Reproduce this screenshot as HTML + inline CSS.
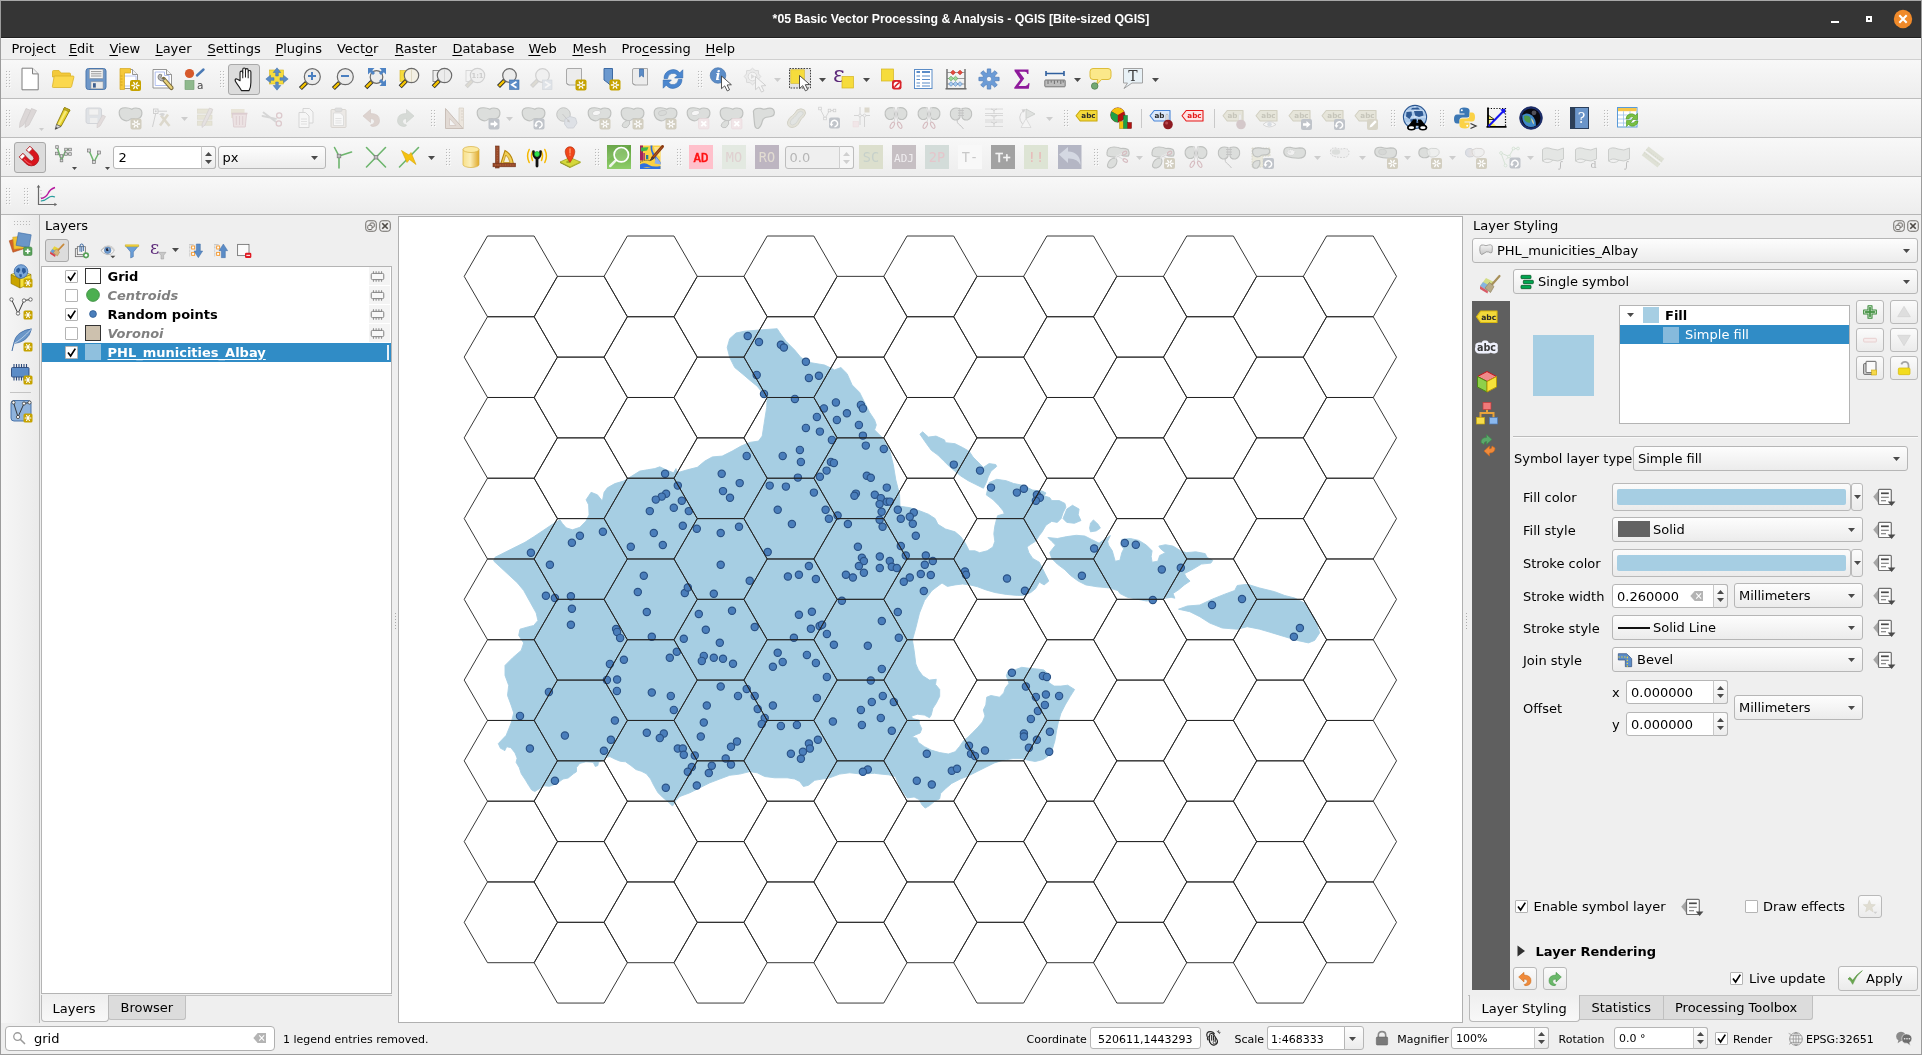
<!DOCTYPE html>
<html lang="en"><head><meta charset="utf-8"><title>*05 Basic Vector Processing &amp; Analysis - QGIS [Bite-sized QGIS]</title>
<style>
html,body{margin:0;padding:0;}
body{width:1922px;height:1055px;overflow:hidden;background:#efefef;font-family:"DejaVu Sans","Liberation Sans",sans-serif;font-size:13px;color:#000;position:relative;}
#app{will-change:transform;position:absolute;left:0;top:0;width:1922px;height:1055px;overflow:hidden;background:#efefef;}
#app div,#app span,#app svg.ic{position:absolute;box-sizing:border-box;}
.t{white-space:nowrap;line-height:16px;}
.ic svg{display:block;overflow:visible;}
.tb{background:linear-gradient(#f8f8f8,#ededed);border-bottom:1px solid #bdbdbd;}
.hv{width:5px;background-image:radial-gradient(circle,#b4b4b4 0.7px,transparent 0.9px);background-size:3px 3px;opacity:.9}
.combo{border:1px solid #b6b6b6;border-radius:3px;background:linear-gradient(#fdfdfd,#ececec);}
.spin{border:1px solid #b6b6b6;border-radius:3px;background:#fff;}
.btn{border:1px solid #b9b9b9;border-radius:3px;background:linear-gradient(#fbfbfb,#ebebeb);}
.pressed{border:1px solid #a9a9a9;border-radius:3px;background:#dcdcdc;}
.cb{width:13px;height:13px;border:1px solid #b4b4b4;background:#fff;border-radius:1px;}
u{text-decoration:underline;text-underline-offset:1.5px;text-decoration-thickness:1px;}
</style></head><body><div id="app">
<div style="left:0px;top:0px;width:1922px;height:1055px;border:1px solid #9c9c9c;border-top-color:#a8a8a8;z-index:50;pointer-events:none"></div>
<div style="left:1px;top:1px;width:1920px;height:37px;background:#353535;border-bottom:1px solid #202020"></div>
<span class="t" id="title" style="left:0;width:1922px;text-align:center;top:10.5px;color:#fff;font-weight:bold;font-family:'Liberation Sans',sans-serif;font-size:12.3px;letter-spacing:0px">*05 Basic Vector Processing &amp; Analysis - QGIS [Bite-sized QGIS]</span>
<div style="left:1831px;top:21px;width:8.2px;height:2.2px;background:#fff"></div>
<div style="left:1866px;top:16px;width:6.2px;height:6.2px;border:2.1px solid #fff"></div>
<svg class="ic" style="left:1893px;top:9px" width="20" height="20"><circle cx="10" cy="10" r="9.2" fill="#f08a2a"/><path d="M6.3 6.3L13.7 13.7M13.7 6.3L6.3 13.7" stroke="#fff" stroke-width="2.1" stroke-linecap="butt"/></svg>
<div style="left:1px;top:38px;width:1920px;height:22px;background:#efefef;border-bottom:1px solid #d0d0d0;border-top:1px solid #fafafa"></div>
<span class="t" style="left:11.4px;top:40.50px;font-size:13px;">Pro<u>j</u>ect</span>
<span class="t" style="left:68.9px;top:40.50px;font-size:13px;"><u>E</u>dit</span>
<span class="t" style="left:109.4px;top:40.50px;font-size:13px;"><u>V</u>iew</span>
<span class="t" style="left:155.4px;top:40.50px;font-size:13px;"><u>L</u>ayer</span>
<span class="t" style="left:207.4px;top:40.50px;font-size:13px;"><u>S</u>ettings</span>
<span class="t" style="left:275.4px;top:40.50px;font-size:13px;"><u>P</u>lugins</span>
<span class="t" style="left:336.9px;top:40.50px;font-size:13px;">Vect<u>o</u>r</span>
<span class="t" style="left:394.9px;top:40.50px;font-size:13px;"><u>R</u>aster</span>
<span class="t" style="left:452.4px;top:40.50px;font-size:13px;"><u>D</u>atabase</span>
<span class="t" style="left:528.4px;top:40.50px;font-size:13px;"><u>W</u>eb</span>
<span class="t" style="left:572.4px;top:40.50px;font-size:13px;"><u>M</u>esh</span>
<span class="t" style="left:621.4px;top:40.50px;font-size:13px;">Pro<u>c</u>essing</span>
<span class="t" style="left:705.4px;top:40.50px;font-size:13px;"><u>H</u>elp</span>
<div class="tb" style="left:1px;top:60px;width:1920px;height:39px;"></div>
<div class="tb" style="left:1px;top:99px;width:1920px;height:39px;"></div>
<div class="tb" style="left:1px;top:138px;width:1920px;height:39px;"></div>
<div class="tb" style="left:1px;top:177px;width:1920px;height:38px;border-bottom:1px solid #b6b6b6"></div>
<svg class="ic" style="left:6px;top:71px" width="5" height="17" shape-rendering="crispEdges"><path d="M1 1h1v1h-1zM4 1h1v1h-1zM1 4h1v1h-1zM4 4h1v1h-1zM1 7h1v1h-1zM4 7h1v1h-1zM1 10h1v1h-1zM4 10h1v1h-1zM1 13h1v1h-1zM4 13h1v1h-1zM1 16h1v1h-1zM4 16h1v1h-1z" fill="#fbfbfb"/><path d="M0 0h1v1h-1zM3 0h1v1h-1zM0 3h1v1h-1zM3 3h1v1h-1zM0 6h1v1h-1zM3 6h1v1h-1zM0 9h1v1h-1zM3 9h1v1h-1zM0 12h1v1h-1zM3 12h1v1h-1zM0 15h1v1h-1zM3 15h1v1h-1z" fill="#b9b9b9"/></svg>
<div class="ic" style="left:18.0px;top:66.5px;width:24px;height:24px"><svg width="24" height="24" viewBox="0 0 24 24"><path d="M4 1.2H14.5L20.2 6.9V22.8H4Z" fill="#fff" stroke="#7d7d7d" stroke-width="1"/><path d="M14.5 1.2V6.9H20.2" fill="#f2f2f2" stroke="#7d7d7d" stroke-width="1" stroke-linejoin="round"/></svg></div>
<div class="ic" style="left:50.5px;top:66.5px;width:24px;height:24px"><svg width="24" height="24" viewBox="0 0 24 24"><path d="M1.5 4.5Q1.5 3.5 2.5 3.5H8L10 6H18.5Q19.5 6 19.5 7V10H1.5Z" fill="#f3c93a" stroke="#d9b32a" stroke-width="0.8"/><path d="M3.2 9H22Q23.2 9 22.9 10.2L20.6 19.5Q20.3 20.5 19.3 20.5H2.2Q1.2 20.5 1.4 19.5Z" fill="#fbd84e" stroke="#d9b32a" stroke-width="0.8"/></svg></div>
<div class="ic" style="left:84.0px;top:66.5px;width:24px;height:24px"><svg width="24" height="24" viewBox="0 0 24 24"><rect x="2" y="1.5" width="20" height="21" rx="2.5" fill="#6e97c8" stroke="#4d78ad" stroke-width="1"/><rect x="5.5" y="2.3" width="13.5" height="9" fill="#f6f6f6" stroke="#9a9a9a" stroke-width="0.5"/><path d="M7 4.6H17.5M7 6.8H17.5M7 9H17.5" stroke="#7a7a7a" stroke-width="0.75"/><rect x="7" y="14.8" width="12" height="7" fill="#e9e9e9" stroke="#9a9a9a" stroke-width="0.5"/><rect x="9" y="16.2" width="2.8" height="4.4" fill="#3d5f8f"/></svg></div>
<div class="ic" style="left:116.5px;top:66.5px;width:24px;height:24px"><svg width="24" height="24" viewBox="0 0 24 24"><path d="M4 2.5H15.5L20.5 7.5V21.5H4Z" fill="#fff" stroke="#8a8a8a" stroke-width="0.9"/><path d="M15.5 2.5V7.5H20.5" fill="#f2f2f2" stroke="#8a8a8a" stroke-width="0.9"/><path d="M6 9H19V19H6Z" fill="none" stroke="#a8b8ee" stroke-width="0.8"/><path d="M3 1.5H13.5V6H7.5V22.5H3Z" fill="#f5c83a" stroke="#d4a81f" stroke-width="0.7"/><path d="M3.5 9H5.5M3.5 12H5.5M3.5 15H5.5M3.5 18H5.5" stroke="#c99a10" stroke-width="0.7"/><rect x="13" y="13" width="11" height="11" rx="2" fill="#c6a300"/><g stroke="#fff" stroke-width="1.3" stroke-linecap="round"><path d="M14.9 18.5L22.1 18.5"/><path d="M16.7 15.4L20.3 21.6"/><path d="M20.3 15.4L16.7 21.6"/></g><circle cx="18.5" cy="18.5" r="1.1" fill="#c6a300"/></svg></div>
<div class="ic" style="left:150.5px;top:66.5px;width:24px;height:24px"><svg width="24" height="24" viewBox="0 0 24 24"><path d="M2 2.5H15.5L20.5 7.5V21H2Z" fill="#fff" stroke="#8a8a8a" stroke-width="0.9"/><path d="M15.5 2.5V7.5H20.5" fill="#f2f2f2" stroke="#8a8a8a" stroke-width="0.9"/><path d="M4.2 5H13.5V8.5H18V18.5H4.2Z" fill="none" stroke="#a8b8ee" stroke-width="0.9"/><path d="M12.5 12L20.5 21" stroke="#7a6a3a" stroke-width="4.2" stroke-linecap="round"/><path d="M13.5 13L20.3 20.8" stroke="#e9d27a" stroke-width="2.4" stroke-linecap="round"/><path d="M8 7.5A3.8 3.8 0 1 0 14.2 11.8L12 12.5L10 10.5L10.8 7.8A3.8 3.8 0 0 0 8 7.5Z" fill="#b9b9b9" stroke="#707070" stroke-width="0.8"/></svg></div>
<div class="ic" style="left:183.0px;top:66.5px;width:24px;height:24px"><svg width="24" height="24" viewBox="0 0 24 24"><circle cx="6.5" cy="6.5" r="4.6" fill="#d6592b"/><path d="M14 8.5L20.5 2.5" stroke="#4b7ab5" stroke-width="2.4" stroke-linecap="round"/><rect x="2" y="13.5" width="9" height="9" fill="#8fb98d" stroke="#6f9a6d" stroke-width="0.6"/><text x="14" y="22" font-family="DejaVu Sans,Liberation Sans,sans-serif" font-size="10.5" fill="#4a4a4a">a</text></svg></div>
<svg class="ic" style="left:220px;top:71px" width="5" height="17" shape-rendering="crispEdges"><path d="M1 1h1v1h-1zM4 1h1v1h-1zM1 4h1v1h-1zM4 4h1v1h-1zM1 7h1v1h-1zM4 7h1v1h-1zM1 10h1v1h-1zM4 10h1v1h-1zM1 13h1v1h-1zM4 13h1v1h-1zM1 16h1v1h-1zM4 16h1v1h-1z" fill="#fbfbfb"/><path d="M0 0h1v1h-1zM3 0h1v1h-1zM0 3h1v1h-1zM3 3h1v1h-1zM0 6h1v1h-1zM3 6h1v1h-1zM0 9h1v1h-1zM3 9h1v1h-1zM0 12h1v1h-1zM3 12h1v1h-1zM0 15h1v1h-1zM3 15h1v1h-1z" fill="#b9b9b9"/></svg>
<div class="pressed" style="left:228px;top:64px;width:32px;height:31px;"></div>
<div class="ic" style="left:232.0px;top:66.5px;width:24px;height:24px"><svg width="24" height="24" viewBox="0 0 24 24"><g transform="translate(12 12.3) scale(1.13) translate(-11 -12)"><path d="M7.5 13.2V6.2Q7.5 4.8 8.7 4.8T9.9 6.2V3.4Q9.9 2 11.1 2T12.3 3.4V3.9Q12.3 2.6 13.5 2.6T14.7 3.9V5.4Q14.7 4.2 15.9 4.2T17.1 5.6V14.5Q17.1 19 15.5 22H8.7Q7.2 19 5 16.2T3.2 12.3Q3.8 11.2 5.2 12Z" fill="#fff" stroke="#1f1f1f" stroke-width="1" stroke-linejoin="round"/><path d="M9.9 6V11M12.3 3.9V10.5M14.7 5.4V11" stroke="#1f1f1f" stroke-width="0.9"/></g></svg></div>
<div class="ic" style="left:265.0px;top:66.5px;width:24px;height:24px"><svg width="24" height="24" viewBox="0 0 24 24"><rect x="4.5" y="3" width="14" height="14" fill="#f6dc3c" stroke="#d4b41f" stroke-width="0.6"/><g fill="#5b8cc7" stroke="#3f6ea8" stroke-width="0.5"><path d="M12 0.8L15.8 5.5H13.3V9H10.7V5.5H8.2Z"/><path d="M12 23.2L15.8 18.5H13.3V15H10.7V18.5H8.2Z"/><path d="M0.8 12L5.5 8.2V10.7H9V13.3H5.5V15.8Z"/><path d="M23.2 12L18.5 8.2V10.7H15V13.3H18.5V15.8Z"/></g></svg></div>
<div class="ic" style="left:298.0px;top:66.5px;width:24px;height:24px"><svg width="24" height="24" viewBox="0 0 24 24"><path d="M8.6 15.4L2.4 21.6" stroke="#2a2a2a" stroke-width="4.2" stroke-linecap="butt"/><path d="M8.0 16.0L2.9 21.1" stroke="#f5c400" stroke-width="2.4" stroke-linecap="butt"/><circle cx="14.3" cy="9.7" r="8" fill="#ececec" stroke="#6a6a6a" stroke-width="1.2"/><path d="M10 9H18M14 5V13" stroke="#4a7fc0" stroke-width="2"/></svg></div>
<div class="ic" style="left:331.0px;top:66.5px;width:24px;height:24px"><svg width="24" height="24" viewBox="0 0 24 24"><path d="M8.6 15.4L2.4 21.6" stroke="#2a2a2a" stroke-width="4.2" stroke-linecap="butt"/><path d="M8.0 16.0L2.9 21.1" stroke="#f5c400" stroke-width="2.4" stroke-linecap="butt"/><circle cx="14.3" cy="9.7" r="8" fill="#ececec" stroke="#6a6a6a" stroke-width="1.2"/><path d="M10 9H18" stroke="#4a7fc0" stroke-width="2"/></svg></div>
<div class="ic" style="left:364.0px;top:66.5px;width:24px;height:24px"><svg width="24" height="24" viewBox="0 0 24 24"><path d="M8.0 14.5L1.8 20.7" stroke="#2a2a2a" stroke-width="4.2" stroke-linecap="butt"/><path d="M7.4 15.1L2.3 20.2" stroke="#f5c400" stroke-width="2.4" stroke-linecap="butt"/><circle cx="12.5" cy="10" r="6.3" fill="#ececec" stroke="#6a6a6a" stroke-width="1.2"/><g fill="#4f84c4"><path d="M4 1H10.5L8.3 3.2L11 6L9 8L6.2 5.2L4 7.5Z"/><path d="M22 1H15.5L17.7 3.2L15 6L17 8L19.8 5.2L22 7.5Z"/><path d="M22 19H15.5L17.7 16.8L15 14L17 12L19.8 14.8L22 12.5Z"/></g></svg></div>
<div class="ic" style="left:397.0px;top:66.5px;width:24px;height:24px"><svg width="24" height="24" viewBox="0 0 24 24"><rect x="3" y="3.5" width="9" height="11" fill="#f6dc3c" stroke="#d4b41f" stroke-width="0.6"/><path d="M9.4 13.6L3.2 19.8" stroke="#2a2a2a" stroke-width="4.2" stroke-linecap="butt"/><path d="M8.8 14.2L3.7 19.3" stroke="#f5c400" stroke-width="2.4" stroke-linecap="butt"/><circle cx="14.5" cy="8.5" r="7.2" fill="#f3f0e4" stroke="#6a6a6a" stroke-width="1.2"/><path d="M14.5 2V15" stroke="#d8d2b8" stroke-width="0.8"/></svg></div>
<div class="ic" style="left:430.0px;top:66.5px;width:24px;height:24px"><svg width="24" height="24" viewBox="0 0 24 24"><rect x="3" y="3.5" width="9" height="11" fill="#ededed" stroke="#7a7a7a" stroke-width="0.8"/><path d="M9.4 13.6L3.2 19.8" stroke="#2a2a2a" stroke-width="4.2" stroke-linecap="butt"/><path d="M8.8 14.2L3.7 19.3" stroke="#f5c400" stroke-width="2.4" stroke-linecap="butt"/><circle cx="14.5" cy="8.5" r="7.2" fill="#ececec" stroke="#6a6a6a" stroke-width="1.2"/><path d="M14.5 2V15" stroke="#cfcfcf" stroke-width="0.8"/></svg></div>
<div class="ic" style="left:463.0px;top:66.5px;width:24px;height:24px"><svg width="24" height="24" viewBox="0 0 24 24"><rect x="3" y="3.5" width="9" height="11" fill="#f3f3f3" stroke="#d2d2d2" stroke-width="0.8"/><path d="M9.4 13.6L3.2 19.8" stroke="#d0d0d0" stroke-width="4.2" stroke-linecap="butt"/><path d="M8.8 14.2L3.7 19.3" stroke="#dcdad2" stroke-width="2.4" stroke-linecap="butt"/><circle cx="14.5" cy="8.5" r="7.2" fill="#f0f0f0" stroke="#cfcfcf" stroke-width="1.2"/><text x="14.5" y="11.3" text-anchor="middle" font-family="DejaVu Sans,Liberation Sans,sans-serif" font-weight="bold" font-size="6.8" fill="#cdcdcd">1:1</text></svg></div>
<div class="ic" style="left:496.0px;top:66.5px;width:24px;height:24px"><svg width="24" height="24" viewBox="0 0 24 24"><path d="M8.7 13.3L2.5 19.5" stroke="#2a2a2a" stroke-width="4.2" stroke-linecap="butt"/><path d="M8.1 13.9L3.0 19.0" stroke="#f5c400" stroke-width="2.4" stroke-linecap="butt"/><circle cx="13.5" cy="8.5" r="6.8" fill="#ececec" stroke="#6a6a6a" stroke-width="1.2"/><rect x="13.5" y="13" width="9.5" height="9.5" fill="#5b8cc7" stroke="#3f6ea8" stroke-width="0.6"/><path d="M20.5 14.8L15.8 17.8L20.5 20.8" fill="none" stroke="#fff" stroke-width="1.7"/></svg></div>
<div class="ic" style="left:529.0px;top:66.5px;width:24px;height:24px"><svg width="24" height="24" viewBox="0 0 24 24"><path d="M8.7 13.3L2.5 19.5" stroke="#d0d0d0" stroke-width="4.2" stroke-linecap="butt"/><path d="M8.1 13.9L3.0 19.0" stroke="#dcdad2" stroke-width="2.4" stroke-linecap="butt"/><circle cx="13.5" cy="8.5" r="6.8" fill="#f0f0f0" stroke="#cfcfcf" stroke-width="1.2"/><rect x="13.5" y="13" width="9.5" height="9.5" fill="#dfe3e8" stroke="#d2d6db" stroke-width="0.6"/><path d="M16 14.8L20.7 17.8L16 20.8" fill="none" stroke="#f6f6f6" stroke-width="1.7"/></svg></div>
<div class="ic" style="left:563.0px;top:66.5px;width:24px;height:24px"><svg width="24" height="24" viewBox="0 0 24 24"><path d="M3.5 3Q3.5 1.5 5 1.5H18.5V18H6.5Q3.5 18 3.5 15.5Z" fill="#ececec" stroke="#a0a0a0" stroke-width="0.9"/><path d="M3.5 15.5Q3.7 17.8 6.5 18" fill="none" stroke="#a0a0a0" stroke-width="0.9"/><rect x="12.5" y="12.5" width="11" height="11" rx="2" fill="#c6a300"/><g stroke="#fff" stroke-width="1.3" stroke-linecap="round"><path d="M14.4 18.0L21.6 18.0"/><path d="M16.2 14.9L19.8 21.1"/><path d="M19.8 14.9L16.2 21.1"/></g><circle cx="18.0" cy="18.0" r="1.1" fill="#c6a300"/></svg></div>
<div class="ic" style="left:596.5px;top:66.5px;width:24px;height:24px"><svg width="24" height="24" viewBox="0 0 24 24"><path d="M7 1.5H15.5V20.5L11 16L7 13Z" fill="#6b99cf" stroke="#3d6aa3" stroke-width="1"/><rect x="12.5" y="12.5" width="11" height="11" rx="2" fill="#c6a300"/><g stroke="#fff" stroke-width="1.3" stroke-linecap="round"><path d="M14.4 18.0L21.6 18.0"/><path d="M16.2 14.9L19.8 21.1"/><path d="M19.8 14.9L16.2 21.1"/></g><circle cx="18.0" cy="18.0" r="1.1" fill="#c6a300"/></svg></div>
<div class="ic" style="left:629.0px;top:66.5px;width:24px;height:24px"><svg width="24" height="24" viewBox="0 0 24 24"><path d="M3.5 3Q3.5 1.5 5 1.5H18.5V18H6.5Q3.5 18 3.5 15.5Z" fill="#ececec" stroke="#a0a0a0" stroke-width="0.9"/><path d="M3.5 15.5Q3.7 17.8 6.5 18" fill="none" stroke="#a0a0a0" stroke-width="0.9"/><path d="M10.5 2H14.5V10L12.5 8.3L10.5 10Z" fill="#5b8cc7" stroke="#3d6aa3" stroke-width="0.7"/></svg></div>
<div class="ic" style="left:661.0px;top:66.5px;width:24px;height:24px"><svg width="24" height="24" viewBox="0 0 24 24"><path d="M3 11.5A9 9 0 0 1 18.8 5.8L21.8 2.8V11H13.6L16.4 8.2A5.6 5.6 0 0 0 6.6 11.5Z" fill="#4a86cf" stroke="#2f68ad" stroke-width="0.6"/><path d="M21 12.5A9 9 0 0 1 5.2 18.2L2.2 21.2V13H10.4L7.6 15.8A5.6 5.6 0 0 0 17.4 12.5Z" fill="#4a86cf" stroke="#2f68ad" stroke-width="0.6"/></svg></div>
<svg class="ic" style="left:698px;top:71px" width="5" height="17" shape-rendering="crispEdges"><path d="M1 1h1v1h-1zM4 1h1v1h-1zM1 4h1v1h-1zM4 4h1v1h-1zM1 7h1v1h-1zM4 7h1v1h-1zM1 10h1v1h-1zM4 10h1v1h-1zM1 13h1v1h-1zM4 13h1v1h-1zM1 16h1v1h-1zM4 16h1v1h-1z" fill="#fbfbfb"/><path d="M0 0h1v1h-1zM3 0h1v1h-1zM0 3h1v1h-1zM3 3h1v1h-1zM0 6h1v1h-1zM3 6h1v1h-1zM0 9h1v1h-1zM3 9h1v1h-1zM0 12h1v1h-1zM3 12h1v1h-1zM0 15h1v1h-1zM3 15h1v1h-1z" fill="#b9b9b9"/></svg>
<div class="ic" style="left:709.0px;top:66.5px;width:24px;height:24px"><svg width="24" height="24" viewBox="0 0 24 24"><circle cx="9" cy="8.5" r="7.8" fill="#5b8cc7" stroke="#3f6ea8" stroke-width="0.6"/><text x="9" y="13.2" text-anchor="middle" font-family="DejaVu Serif,Liberation Serif,serif" font-style="italic" font-weight="bold" font-size="13" fill="#fff">i</text><path transform="translate(12.5 9) scale(1.15)" d="M0 0L0 11L2.8 8.6L5 13L7 12L4.9 7.8L8.6 7.6Z" fill="#fff" stroke="#3c3c3c" stroke-width="0.75" stroke-linejoin="round"/></svg></div>
<div class="ic" style="left:743.0px;top:66.5px;width:24px;height:24px"><svg width="24" height="24" viewBox="0 0 24 24"><g fill="#ebebeb" stroke="#d4d4d4" stroke-width="0.8"><path d="M17.8 9.5L15.6 12.0L15.4 15.4L12.0 15.6L9.5 17.8L7.0 15.6L3.6 15.4L3.4 12.0L1.2 9.5L3.4 7.0L3.6 3.6L7.0 3.4L9.5 1.2L12.0 3.4L15.4 3.6L15.6 7.0Z"/><circle cx="9.5" cy="9.5" r="4.3" fill="#f4f4f4"/><path d="M8 7L12 9.5L8 12Z" fill="#dcdcdc" stroke="none"/></g><path transform="translate(12.5 9.5) scale(1.2)" d="M0 0L0 11L2.8 8.6L5 13L7 12L4.9 7.8L8.6 7.6Z" fill="#f4f4f4" stroke="#cccccc" stroke-width="0.75" stroke-linejoin="round"/></svg></div>
<div class="ic" style="left:788.0px;top:66.5px;width:24px;height:24px"><svg width="24" height="24" viewBox="0 0 24 24"><rect x="1.5" y="1.5" width="21" height="19.5" fill="#e4e4e4" stroke="#2a2a2a" stroke-width="0.9" stroke-dasharray="1.6 1.2"/><rect x="2.8" y="2.8" width="13.5" height="13.5" fill="#f6dc3c" stroke="#d4b41f" stroke-width="0.6"/><path transform="translate(11.5 8.5) scale(1.18)" d="M0 0L0 11L2.8 8.6L5 13L7 12L4.9 7.8L8.6 7.6Z" fill="#fff" stroke="#3c3c3c" stroke-width="0.75" stroke-linejoin="round"/></svg></div>
<div class="ic" style="left:833.0px;top:66.5px;width:24px;height:24px"><svg width="24" height="24" viewBox="0 0 24 24"><text x="0" y="14.5" font-family="DejaVu Serif,Liberation Serif,serif" font-size="23" fill="#5d2a7a">ε</text><rect x="9" y="9.5" width="11.5" height="11.5" fill="#f6dc3c" stroke="#d4b41f" stroke-width="0.7"/></svg></div>
<div class="ic" style="left:878.5px;top:66.5px;width:24px;height:24px"><svg width="24" height="24" viewBox="0 0 24 24"><rect x="2.5" y="2" width="12" height="12" fill="#f6dc3c" stroke="#d4b41f" stroke-width="0.7"/><rect x="13" y="13" width="9.5" height="9.5" rx="2.2" fill="#d8232a"/><circle cx="17.75" cy="17.75" r="3.1" fill="#fff"/><path d="M15.6 19.9L19.9 15.6" stroke="#d8232a" stroke-width="1.5"/></svg></div>
<div class="ic" style="left:911.0px;top:66.5px;width:24px;height:24px"><svg width="24" height="24" viewBox="0 0 24 24"><rect x="3.5" y="2.5" width="17.5" height="19" fill="#fff" stroke="#5b8cc7" stroke-width="1"/><path d="M5.5 5H9M11 5H19" stroke="#5b8cc7" stroke-width="1.8"/><path d="M5.5 9H9M11 9H19M5.5 12.5H9M11 12.5H19M5.5 16H9M11 16H19M5.5 19H9M11 19H19" stroke="#5b8cc7" stroke-width="1.1"/></svg></div>
<div class="ic" style="left:944.0px;top:66.5px;width:24px;height:24px"><svg width="24" height="24" viewBox="0 0 24 24"><path d="M3 2V21.5M21 2V21.5" stroke="#555" stroke-width="1.2"/><path d="M1.5 21.8H22.5" stroke="#6a6a6a" stroke-width="1.5"/><path d="M3 5.5H21M3 11.5H21M3 17H21" stroke="#777" stroke-width="0.7"/><path d="M6.6 5.5L9 3.2L11.4 5.5L9 7.8Z" fill="#e64a3c" stroke="#b3261c" stroke-width="0.6"/><path d="M13.6 5.5L16 3.2L18.4 5.5L16 7.8Z" fill="#e64a3c" stroke="#b3261c" stroke-width="0.6"/><path d="M4.6 11.5L7 9.2L9.4 11.5L7 13.8Z" fill="#9fd89a" stroke="#4f9a4a" stroke-width="0.6"/><path d="M9.1 11.5L11.5 9.2L13.9 11.5L11.5 13.8Z" fill="#9fd89a" stroke="#4f9a4a" stroke-width="0.6"/><path d="M4.6 17L7 14.7L9.4 17L7 19.3Z" fill="#a8cdf0" stroke="#4b7ab5" stroke-width="0.6"/><path d="M9.1 17L11.5 14.7L13.9 17L11.5 19.3Z" fill="#a8cdf0" stroke="#4b7ab5" stroke-width="0.6"/><path d="M13.6 17L16 14.7L18.4 17L16 19.3Z" fill="#a8cdf0" stroke="#4b7ab5" stroke-width="0.6"/></svg></div>
<div class="ic" style="left:977.0px;top:66.5px;width:24px;height:24px"><svg width="24" height="24" viewBox="0 0 24 24"><path d="M22.1 10.3L22.1 13.7L17.9 13.8L17.5 14.9L20.3 17.9L17.9 20.3L14.9 17.5L13.8 17.9L13.7 22.1L10.3 22.1L10.2 17.9L9.1 17.5L6.1 20.3L3.7 17.9L6.5 14.9L6.1 13.8L1.9 13.7L1.9 10.3L6.1 10.2L6.5 9.1L3.7 6.1L6.1 3.7L9.1 6.5L10.2 6.1L10.3 1.9L13.7 1.9L13.8 6.1L14.9 6.5L17.9 3.7L20.3 6.1L17.5 9.1L17.9 10.2Z" fill="#6b9bd6" stroke="#4a7ab8" stroke-width="0.7" stroke-linejoin="round"/><circle cx="12" cy="12" r="2.6" fill="#f4f4f4" stroke="#4a7ab8" stroke-width="0.6"/></svg></div>
<div class="ic" style="left:1009.5px;top:66.5px;width:24px;height:24px"><svg width="24" height="24" viewBox="0 0 24 24"><path d="M4.5 2.5H18.5V7H17.3Q17 4.8 15 4.8H9.2L14.2 11.6L8.6 19H15.5Q17.8 19 18.3 16.2H19.6L18.8 21.8H4.3V20.5L10.3 12.4L4.5 4Z" fill="#8e1a9b"/></svg></div>
<div class="ic" style="left:1043.0px;top:66.5px;width:24px;height:24px"><svg width="24" height="24" viewBox="0 0 24 24"><path d="M3 6.5H21M3 4V9M21 4V9" stroke="#2f5f9e" stroke-width="1.6" fill="none"/><rect x="1.8" y="13" width="20.4" height="6.8" rx="0.8" fill="#bdbdbd" stroke="#6e6e6e" stroke-width="0.9"/><path d="M5 13.5V17M8.2 13.5V15.6M11.4 13.5V17M14.6 13.5V15.6M17.8 13.5V17M20.2 13.5V15.6" stroke="#5a5a5a" stroke-width="0.8"/></svg></div>
<div class="ic" style="left:1088.0px;top:66.5px;width:24px;height:24px"><svg width="24" height="24" viewBox="0 0 24 24"><path d="M5 1.5H20Q23 1.5 23 4.5V9.5Q23 12.5 20 12.5H13.5L8.5 18L9.8 12.5H5Q2 12.5 2 9.5V4.5Q2 1.5 5 1.5Z" fill="#fbe88a" stroke="#d9b72a" stroke-width="0.9"/><circle cx="6.7" cy="19" r="3.3" fill="#73a873" stroke="#4a7a4a" stroke-width="0.7"/></svg></div>
<div class="ic" style="left:1121.0px;top:66.5px;width:24px;height:24px"><svg width="24" height="24" viewBox="0 0 24 24"><path d="M2.5 1.5H21.5V16H11L3 21.5L6.5 16H2.5Z" fill="#e8f1f6" stroke="#9a9a9a" stroke-width="0.9"/><text x="12" y="13.5" text-anchor="middle" font-family="DejaVu Serif,Liberation Serif,serif" font-size="14" fill="#3c3c3c">T</text></svg></div>
<svg class="ic" style="left:773.5px;top:77.5px" width="7" height="4"><path d="M0 0H7L3.5 4Z" fill="#cdcdcd"/></svg>
<svg class="ic" style="left:818.5px;top:77.5px" width="7" height="4"><path d="M0 0H7L3.5 4Z" fill="#4a4a4a"/></svg>
<svg class="ic" style="left:863.0px;top:77.5px" width="7" height="4"><path d="M0 0H7L3.5 4Z" fill="#4a4a4a"/></svg>
<svg class="ic" style="left:1073.5px;top:77.5px" width="7" height="4"><path d="M0 0H7L3.5 4Z" fill="#4a4a4a"/></svg>
<svg class="ic" style="left:1151.5px;top:77.5px" width="7" height="4"><path d="M0 0H7L3.5 4Z" fill="#4a4a4a"/></svg>
<svg class="ic" style="left:6px;top:110px" width="5" height="17" shape-rendering="crispEdges"><path d="M1 1h1v1h-1zM4 1h1v1h-1zM1 4h1v1h-1zM4 4h1v1h-1zM1 7h1v1h-1zM4 7h1v1h-1zM1 10h1v1h-1zM4 10h1v1h-1zM1 13h1v1h-1zM4 13h1v1h-1zM1 16h1v1h-1zM4 16h1v1h-1z" fill="#fbfbfb"/><path d="M0 0h1v1h-1zM3 0h1v1h-1zM0 3h1v1h-1zM3 3h1v1h-1zM0 6h1v1h-1zM3 6h1v1h-1zM0 9h1v1h-1zM3 9h1v1h-1zM0 12h1v1h-1zM3 12h1v1h-1zM0 15h1v1h-1zM3 15h1v1h-1z" fill="#b9b9b9"/></svg>
<div class="ic" style="left:17.0px;top:105.5px;width:24px;height:24px"><svg width="24" height="24" viewBox="0 0 24 24"><path d="M9 2.5L14 4.5L6.5 19L2.5 21.5L3 16.5Z" fill="#dcd7d7" stroke="#ccc7c7" stroke-width="0.7"/><path d="M14.5 2.5L19.5 4.5L12.0 19L8.0 21.5L8.5 16.5Z" fill="#dcd7d7" stroke="#ccc7c7" stroke-width="0.7"/></svg></div>
<div class="ic" style="left:50.0px;top:105.5px;width:24px;height:24px"><svg width="24" height="24" viewBox="0 0 24 24"><path d="M14.5 1.5L20 4L11 20.5L6.5 18.5Z" fill="#e8d22a" stroke="#8a7a10" stroke-width="0.9"/><path d="M16.3 2.3L18.2 3.2L9.2 19.7L7.4 18.9Z" fill="#f6ea7a"/><path d="M6.5 18.5L11 20.5L5.2 23.3Z" fill="#d9d9d9" stroke="#5a5a5a" stroke-width="0.8"/><path d="M6.3 21.2L7.8 21.9L5.2 23.3Z" fill="#222"/><path d="M14.5 1.5L20 4L19 5.8L13.5 3.3Z" fill="#c7b11a" stroke="#8a7a10" stroke-width="0.6"/></svg></div>
<div class="ic" style="left:84.0px;top:105.5px;width:24px;height:24px"><svg width="24" height="24" viewBox="0 0 24 24"><rect x="2" y="2" width="15.5" height="15.5" rx="2" fill="#dfe2e6" stroke="#d0d3d7" stroke-width="0.9"/><rect x="5" y="3" width="9.5" height="6" fill="#f1f1f1" stroke="#dadada" stroke-width="0.5"/><rect x="6" y="12" width="7.5" height="5" fill="#eeeeee"/><path d="M18.5 9L21.5 10.5L16 20L13 21.8L13.3 18.2Z" fill="#e2dcdc" stroke="#d4cfcf" stroke-width="0.7"/></svg></div>
<div class="ic" style="left:117.5px;top:105.5px;width:24px;height:24px"><svg width="24" height="24" viewBox="0 0 24 24"><path transform="translate(12 7.5) scale(1.2 1.15) translate(-12 -7.5)" d="M3 6.5Q3 2.5 8 2.5Q11.5 2.5 13.5 3.8Q16 2 19.5 3.2Q22.5 4.5 21.8 8.5Q21 12.5 16 12Q13 11.5 11.5 13Q9 15 5.5 12.5Q3 10.5 3 6.5Z" fill="#dcdedc" stroke="#bfc1bf" stroke-width="1"/><rect x="12.5" y="12.5" width="11" height="11" rx="2" fill="#d2cec0"/><g stroke="#fff" stroke-width="1.3" stroke-linecap="round"><path d="M14.4 18.0L21.6 18.0"/><path d="M16.2 14.9L19.8 21.1"/><path d="M19.8 14.9L16.2 21.1"/></g><circle cx="18.0" cy="18.0" r="1.1" fill="#d2cec0"/></svg></div>
<div class="ic" style="left:151.0px;top:105.5px;width:24px;height:24px"><svg width="24" height="24" viewBox="0 0 24 24"><rect x="2.5" y="3" width="4.5" height="4.5" fill="#f4f4f4" stroke="#c9c9c9" stroke-width="0.8"/><circle cx="4.75" cy="5.25" r="1" fill="#cfcfcf"/><path d="M7 5.2H16M4.7 7.5L1.5 21" stroke="#cccccc" stroke-width="0.9" fill="none"/><path d="M9 19.5L17 8.5" stroke="#dcd8cc" stroke-width="2.6"/><path d="M10 9.5L18.5 20" stroke="#dcd8cc" stroke-width="2.6"/><path d="M8 8.5Q11 6 14 8L12 10.5Z" fill="#d6d6d6"/></svg></div>
<div class="ic" style="left:195.0px;top:105.5px;width:24px;height:24px"><svg width="24" height="24" viewBox="0 0 24 24"><rect x="2.5" y="3" width="14.5" height="4.2" fill="#e6e4d6" stroke="#dad8ca" stroke-width="0.6"/><rect x="2.5" y="9" width="14.5" height="4.2" fill="#e6e4d6" stroke="#dad8ca" stroke-width="0.6"/><rect x="2.5" y="15" width="14.5" height="4.2" fill="#e6e4d6" stroke="#dad8ca" stroke-width="0.6"/><path d="M14.5 2L17.8 3.5L10 19L7 21.5L7.2 17.7Z" fill="#e5e1e1" stroke="#d2cece" stroke-width="0.7"/></svg></div>
<div class="ic" style="left:228.0px;top:105.5px;width:24px;height:24px"><svg width="24" height="24" viewBox="0 0 24 24"><rect x="3" y="3" width="13.5" height="9" fill="#e8e4d8"/><path d="M4.5 8H18.5L17.3 21H5.7Z" fill="#ece2e3" stroke="#dccdd0" stroke-width="0.9"/><path d="M3.5 7.5H19.5" stroke="#dccdd0" stroke-width="1.6"/><path d="M8.3 10V19M11.5 10V19M14.7 10V19" stroke="#dccdd0" stroke-width="0.9"/></svg></div>
<div class="ic" style="left:261.0px;top:105.5px;width:24px;height:24px"><svg width="24" height="24" viewBox="0 0 24 24"><path d="M1.5 10L15 12.8M2.5 6.5L14.5 15.5" stroke="#d6d6d6" stroke-width="1.8" stroke-linecap="round"/><circle cx="18.2" cy="9.5" r="2.6" fill="none" stroke="#dcc9cc" stroke-width="1.3"/><circle cx="17.8" cy="17.5" r="2.6" fill="none" stroke="#dcc9cc" stroke-width="1.3"/></svg></div>
<div class="ic" style="left:294.0px;top:105.5px;width:24px;height:24px"><svg width="24" height="24" viewBox="0 0 24 24"><path d="M9 2.5H15.5L19 6V17H9Z" fill="#f6f6f6" stroke="#d3d3d3" stroke-width="0.9"/><path d="M5 6.5H11.5L15 10V21.5H5Z" fill="#f6f6f6" stroke="#d3d3d3" stroke-width="0.9"/><path d="M7 13H13M7 15.5H13M7 18H13" stroke="#dadada" stroke-width="0.8"/></svg></div>
<div class="ic" style="left:327.0px;top:105.5px;width:24px;height:24px"><svg width="24" height="24" viewBox="0 0 24 24"><rect x="4" y="3.5" width="15" height="18" rx="1" fill="#ece9e6" stroke="#d6d2ce" stroke-width="0.9"/><rect x="8" y="2" width="7" height="3.5" rx="1" fill="#dedede" stroke="#d0d0d0" stroke-width="0.6"/><path d="M6.5 7H13.5L16.5 10V19.5H6.5Z" fill="#f8f8f8" stroke="#d6d6d6" stroke-width="0.7"/><path d="M8.3 12.5H14.5M8.3 14.8H14.5M8.3 17H14.5" stroke="#dcdcdc" stroke-width="0.8"/></svg></div>
<div class="ic" style="left:360.0px;top:105.5px;width:24px;height:24px"><svg width="24" height="24" viewBox="0 0 24 24"><path d="M3 10L10.5 3.5V7.5Q19.5 7.5 19.5 14.5Q19.5 20 13 20.5Q11 20.5 10.5 19Q14.5 18.5 14.5 15.5Q14.5 12.5 10.5 12.5V16.5Z" fill="#ddd3cf" stroke="#d2c6c2" stroke-width="0.6"/></svg></div>
<div class="ic" style="left:393.0px;top:105.5px;width:24px;height:24px"><svg width="24" height="24" viewBox="0 0 24 24"><path d="M21 10L13.5 3.5V7.5Q4.5 7.5 4.5 14.5Q4.5 20 11 20.5Q13 20.5 13.5 19Q9.5 18.5 9.5 15.5Q9.5 12.5 13.5 12.5V16.5Z" fill="#d6dad6" stroke="#caceca" stroke-width="0.6"/></svg></div>
<svg class="ic" style="left:38.5px;top:127.5px" width="5" height="3"><path d="M0 0H5L2.5 3Z" fill="#cdcdcd"/></svg>
<svg class="ic" style="left:180.5px;top:116.5px" width="7" height="4"><path d="M0 0H7L3.5 4Z" fill="#cdcdcd"/></svg>
<svg class="ic" style="left:431px;top:110px" width="5" height="17" shape-rendering="crispEdges"><path d="M1 1h1v1h-1zM4 1h1v1h-1zM1 4h1v1h-1zM4 4h1v1h-1zM1 7h1v1h-1zM4 7h1v1h-1zM1 10h1v1h-1zM4 10h1v1h-1zM1 13h1v1h-1zM4 13h1v1h-1zM1 16h1v1h-1zM4 16h1v1h-1z" fill="#fbfbfb"/><path d="M0 0h1v1h-1zM3 0h1v1h-1zM0 3h1v1h-1zM3 3h1v1h-1zM0 6h1v1h-1zM3 6h1v1h-1zM0 9h1v1h-1zM3 9h1v1h-1zM0 12h1v1h-1zM3 12h1v1h-1zM0 15h1v1h-1zM3 15h1v1h-1z" fill="#b9b9b9"/></svg>
<div class="ic" style="left:442.0px;top:105.5px;width:24px;height:24px"><svg width="24" height="24" viewBox="0 0 24 24"><path d="M17 2H21.5V22.5H17Z" fill="#ece6de" stroke="#d6cec4" stroke-width="0.7"/><path d="M3.5 2.5L21 22.5H3.5Z" fill="#e2dad4" stroke="#c9bfb8" stroke-width="1"/><path d="M7.5 12.5L14 19.5H7.5Z" fill="#f4f4f4" stroke="#d3c8c2" stroke-width="0.8"/><path d="M19 5H21M19 8H21M19 11H21M19 14H21" stroke="#d0c8be" stroke-width="0.6"/></svg></div>
<div class="ic" style="left:476.0px;top:105.5px;width:24px;height:24px"><svg width="24" height="24" viewBox="0 0 24 24"><path transform="translate(12 7.5) scale(1.2 1.15) translate(-12 -7.5)" d="M3 6.5Q3 2.5 8 2.5Q11.5 2.5 13.5 3.8Q16 2 19.5 3.2Q22.5 4.5 21.8 8.5Q21 12.5 16 12Q13 11.5 11.5 13Q9 15 5.5 12.5Q3 10.5 3 6.5Z" fill="#dcdedc" stroke="#bfc1bf" stroke-width="1"/><rect x="12.5" y="12.5" width="11" height="11" rx="2" fill="#c0c4ca"/><path d="M14.5 16.7H18.0V14.5L22.0 18.0L18.0 21.5V19.3H14.5Z" fill="#fff"/></svg></div>
<div class="ic" style="left:521.0px;top:105.5px;width:24px;height:24px"><svg width="24" height="24" viewBox="0 0 24 24"><path transform="translate(12 7.5) scale(1.2 1.15) translate(-12 -7.5)" d="M3 6.5Q3 2.5 8 2.5Q11.5 2.5 13.5 3.8Q16 2 19.5 3.2Q22.5 4.5 21.8 8.5Q21 12.5 16 12Q13 11.5 11.5 13Q9 15 5.5 12.5Q3 10.5 3 6.5Z" fill="#dcdedc" stroke="#bfc1bf" stroke-width="1"/><rect x="12.5" y="12.5" width="11" height="11" rx="2" fill="#c0c4ca"/><path d="M15.0 19.8A3.2 3.2 0 1 1 18.0 21.7" fill="none" stroke="#fff" stroke-width="1.5"/><path d="M13.0 18.8L15.0 21.5L17.0 18.8Z" fill="#fff"/></svg></div>
<div class="ic" style="left:554.0px;top:105.5px;width:24px;height:24px"><svg width="24" height="24" viewBox="0 0 24 24"><circle cx="9.5" cy="8.5" r="6.8" fill="#dcdedc" stroke="#bfc1bf" stroke-width="0.9"/><path d="M11 13L16 10.5L21.5 12L23 17L19.5 22H13.5L10.5 18Z" fill="#dee1e6" stroke="#cdd0d6" stroke-width="0.9"/><path d="M8.5 8L15 15.5" stroke="#c6c6c6" stroke-width="0.9"/><path d="M15.8 16.4L12.8 15.3L15 13.2Z" fill="#c6c6c6"/></svg></div>
<div class="ic" style="left:587.0px;top:105.5px;width:24px;height:24px"><svg width="24" height="24" viewBox="0 0 24 24"><path transform="translate(12 7.5) scale(1.2 1.15) translate(-12 -7.5)" d="M3 6.5Q3 2.5 8 2.5Q11.5 2.5 13.5 3.8Q16 2 19.5 3.2Q22.5 4.5 21.8 8.5Q21 12.5 16 12Q13 11.5 11.5 13Q9 15 5.5 12.5Q3 10.5 3 6.5Z" fill="#dcdedc" stroke="#bfc1bf" stroke-width="1"/><ellipse cx="9.5" cy="7" rx="4.2" ry="2.6" fill="#f6f6f6" stroke="#cfd1cf" stroke-width="0.8" transform="rotate(-12 9.5 7)"/><rect x="12.5" y="12.5" width="11" height="11" rx="2" fill="#d2cec0"/><g stroke="#fff" stroke-width="1.3" stroke-linecap="round"><path d="M14.4 18.0L21.6 18.0"/><path d="M16.2 14.9L19.8 21.1"/><path d="M19.8 14.9L16.2 21.1"/></g><circle cx="18.0" cy="18.0" r="1.1" fill="#d2cec0"/></svg></div>
<div class="ic" style="left:620.0px;top:105.5px;width:24px;height:24px"><svg width="24" height="24" viewBox="0 0 24 24"><path transform="translate(12 7.5) scale(1.2 1.15) translate(-12 -7.5)" d="M3 6.5Q3 2.5 8 2.5Q11.5 2.5 13.5 3.8Q16 2 19.5 3.2Q22.5 4.5 21.8 8.5Q21 12.5 16 12Q13 11.5 11.5 13Q9 15 5.5 12.5Q3 10.5 3 6.5Z" fill="#dcdedc" stroke="#bfc1bf" stroke-width="1"/><path d="M2 20Q3.5 14 9.5 14.5Q11 18 7 21.5Q3.5 22.5 2 20Z" fill="#dcdedc" stroke="#bfc1bf" stroke-width="0.9"/><rect x="12.5" y="12.5" width="11" height="11" rx="2" fill="#d2cec0"/><g stroke="#fff" stroke-width="1.3" stroke-linecap="round"><path d="M14.4 18.0L21.6 18.0"/><path d="M16.2 14.9L19.8 21.1"/><path d="M19.8 14.9L16.2 21.1"/></g><circle cx="18.0" cy="18.0" r="1.1" fill="#d2cec0"/></svg></div>
<div class="ic" style="left:653.0px;top:105.5px;width:24px;height:24px"><svg width="24" height="24" viewBox="0 0 24 24"><path transform="translate(12 7.5) scale(1.2 1.15) translate(-12 -7.5)" d="M3 6.5Q3 2.5 8 2.5Q11.5 2.5 13.5 3.8Q16 2 19.5 3.2Q22.5 4.5 21.8 8.5Q21 12.5 16 12Q13 11.5 11.5 13Q9 15 5.5 12.5Q3 10.5 3 6.5Z" fill="#dcdedc" stroke="#bfc1bf" stroke-width="1"/><ellipse cx="9.5" cy="7" rx="4.2" ry="2.6" fill="#d8dad8" stroke="#c8cac8" stroke-width="0.8" transform="rotate(-12 9.5 7)"/><rect x="12.5" y="12.5" width="11" height="11" rx="2" fill="#d2cec0"/><g stroke="#fff" stroke-width="1.3" stroke-linecap="round"><path d="M14.4 18.0L21.6 18.0"/><path d="M16.2 14.9L19.8 21.1"/><path d="M19.8 14.9L16.2 21.1"/></g><circle cx="18.0" cy="18.0" r="1.1" fill="#d2cec0"/></svg></div>
<div class="ic" style="left:686.0px;top:105.5px;width:24px;height:24px"><svg width="24" height="24" viewBox="0 0 24 24"><path transform="translate(12 7.5) scale(1.2 1.15) translate(-12 -7.5)" d="M3 6.5Q3 2.5 8 2.5Q11.5 2.5 13.5 3.8Q16 2 19.5 3.2Q22.5 4.5 21.8 8.5Q21 12.5 16 12Q13 11.5 11.5 13Q9 15 5.5 12.5Q3 10.5 3 6.5Z" fill="#dcdedc" stroke="#bfc1bf" stroke-width="1"/><ellipse cx="9.5" cy="7" rx="4.2" ry="2.6" fill="#f6f6f6" stroke="#cfd1cf" stroke-width="0.8" transform="rotate(-12 9.5 7)"/><rect x="12.5" y="12.5" width="10.5" height="10.5" rx="1.5" fill="#f1e6e8" stroke="#ead9dc" stroke-width="0.6"/><path d="M15.3 15.3L20.2 20.2M20.2 15.3L15.3 20.2" stroke="#fff" stroke-width="1.9"/></svg></div>
<div class="ic" style="left:719.0px;top:105.5px;width:24px;height:24px"><svg width="24" height="24" viewBox="0 0 24 24"><path transform="translate(12 7.5) scale(1.2 1.15) translate(-12 -7.5)" d="M3 6.5Q3 2.5 8 2.5Q11.5 2.5 13.5 3.8Q16 2 19.5 3.2Q22.5 4.5 21.8 8.5Q21 12.5 16 12Q13 11.5 11.5 13Q9 15 5.5 12.5Q3 10.5 3 6.5Z" fill="#dcdedc" stroke="#bfc1bf" stroke-width="1"/><path d="M2 20Q3.5 14 9.5 14.5Q11 18 7 21.5Q3.5 22.5 2 20Z" fill="#dcdedc" stroke="#bfc1bf" stroke-width="0.9"/><rect x="12.5" y="12.5" width="10.5" height="10.5" rx="1.5" fill="#f1e6e8" stroke="#ead9dc" stroke-width="0.6"/><path d="M15.3 15.3L20.2 20.2M20.2 15.3L15.3 20.2" stroke="#fff" stroke-width="1.9"/></svg></div>
<div class="ic" style="left:751.0px;top:105.5px;width:24px;height:24px"><svg width="24" height="24" viewBox="0 0 24 24"><path transform="translate(12 7.5) scale(1.2 1.15) translate(-12 -7.5)" d="M4 5.5Q5 2.5 10 3Q13 4.5 16 3Q21 2 21.5 6.5Q21.5 10.5 16.5 10.5Q12.5 10.5 11.5 14Q10.5 19 8 20.5Q5.5 21 5 17Q4.5 12 4 5.5Z" fill="#dcdedc" stroke="#bfc1bf" stroke-width="1"/></svg></div>
<div class="ic" style="left:784.0px;top:105.5px;width:24px;height:24px"><svg width="24" height="24" viewBox="0 0 24 24"><path d="M13 4Q17 1.5 20.5 4Q23 7 20 10.5Q17 12.5 15.5 16Q13.5 21 8 21.5Q3 21 3.5 16Q4.5 12 8.5 9.5Q11 7.5 13 4Z" fill="#e2e1d8" stroke="#d0cfc4" stroke-width="0.9"/><path d="M14 6.5Q16.5 4.5 18.8 6Q20 8 17.8 9.5Q14.8 11.5 13.5 15Q12 18.5 8.5 19Q5.8 18.8 6.2 16Q7 13.5 10 11.5Q12.5 9.5 14 6.5Z" fill="#e2e4e2" stroke="#d0d2d0" stroke-width="0.7"/></svg></div>
<div class="ic" style="left:817.0px;top:105.5px;width:24px;height:24px"><svg width="24" height="24" viewBox="0 0 24 24"><path d="M3 2.5L8 12.5L12.5 4.5H17.5" fill="none" stroke="#d2d2d2" stroke-width="0.9"/><rect x="1.7" y="1.2" width="2.6" height="2.6" fill="#f6f6f6" stroke="#cccccc" stroke-width="0.7"/><rect x="6.7" y="11.2" width="2.6" height="2.6" fill="#f6f6f6" stroke="#cccccc" stroke-width="0.7"/><rect x="11.2" y="3.2" width="2.6" height="2.6" fill="#f6f6f6" stroke="#cccccc" stroke-width="0.7"/><rect x="16.2" y="3.2" width="2.6" height="2.6" fill="#f6f6f6" stroke="#cccccc" stroke-width="0.7"/><rect x="12" y="11.5" width="11" height="11" rx="2" fill="#c0c4ca"/><path d="M14.5 18.8A3.2 3.2 0 1 1 17.5 20.7" fill="none" stroke="#fff" stroke-width="1.5"/><path d="M12.5 17.8L14.5 20.5L16.5 17.8Z" fill="#fff"/></svg></div>
<div class="ic" style="left:850.0px;top:105.5px;width:24px;height:24px"><svg width="24" height="24" viewBox="0 0 24 24"><path d="M10 1V19M4 9.5H20M14.5 10V21" stroke="#d4d4d4" stroke-width="1" fill="none"/><circle cx="10" cy="9.5" r="1.4" fill="#f4f4f4" stroke="#cfcfcf" stroke-width="0.7"/><circle cx="14.5" cy="9.5" r="1.4" fill="#f4f4f4" stroke="#cfcfcf" stroke-width="0.7"/><rect x="14.5" y="1.5" width="5" height="5" fill="#dcd8cc"/><rect x="3" y="15.5" width="5.5" height="5.5" fill="#f1e6e8" stroke="#ead9dc" stroke-width="0.5"/></svg></div>
<div class="ic" style="left:883.5px;top:105.5px;width:24px;height:24px"><svg width="24" height="24" viewBox="0 0 24 24"><path d="M10.5 2Q3 0.5 1.2 6Q0.5 11.5 5 13.5Q9 14 10.5 11Z" fill="#dcdedc" stroke="#bfc1bf" stroke-width="1.1"/><path d="M13.5 2Q21 0.5 22.8 6Q23.5 11.5 19 13.5Q15 14 13.5 11Z" fill="#dcdedc" stroke="#bfc1bf" stroke-width="1.1"/><path d="M10.3 1.5L14 16M13.7 1.5L10 16" stroke="#f2f2f2" stroke-width="1.8"/><path d="M10.3 1.5L14 16M13.7 1.5L10 16" stroke="#c8c8c8" stroke-width="0.7"/><ellipse cx="8.3" cy="19.3" rx="1.7" ry="3.4" fill="none" stroke="#d6bcc0" stroke-width="1.1" transform="rotate(28 8.3 19.3)"/><ellipse cx="15.7" cy="19.3" rx="1.7" ry="3.4" fill="none" stroke="#d6bcc0" stroke-width="1.1" transform="rotate(-28 15.7 19.3)"/></svg></div>
<div class="ic" style="left:916.5px;top:105.5px;width:24px;height:24px"><svg width="24" height="24" viewBox="0 0 24 24"><path d="M10.5 2Q3 0.5 1.2 6Q0.5 11.5 5 13.5Q9 14 10.5 11Z" fill="#dcdedc" stroke="#bfc1bf" stroke-width="1.1"/><path d="M13.5 2Q21 0.5 22.8 6Q23.5 11.5 19 13.5Q15 14 13.5 11Z" fill="#dcdedc" stroke="#bfc1bf" stroke-width="1.1"/><path d="M10.3 1.5L14 16M13.7 1.5L10 16" stroke="#f2f2f2" stroke-width="1.8"/><path d="M10.3 1.5L14 16M13.7 1.5L10 16" stroke="#c8c8c8" stroke-width="0.7"/><ellipse cx="8.3" cy="19.3" rx="1.7" ry="3.4" fill="none" stroke="#d6bcc0" stroke-width="1.1" transform="rotate(28 8.3 19.3)"/><ellipse cx="15.7" cy="19.3" rx="1.7" ry="3.4" fill="none" stroke="#d6bcc0" stroke-width="1.1" transform="rotate(-28 15.7 19.3)"/></svg></div>
<div class="ic" style="left:949.0px;top:105.5px;width:24px;height:24px"><svg width="24" height="24" viewBox="0 0 24 24"><path d="M11 2.5Q3.5 0.5 1.5 6Q0.5 12 5.5 14Q10 14.5 11 11Z" fill="#dcdedc" stroke="#bfc1bf" stroke-width="1.1"/><path d="M13 2.5Q20.5 0.5 22.5 6Q23.5 12 18.5 14Q14 14.5 13 11Z" fill="#dcdedc" stroke="#bfc1bf" stroke-width="1.1"/><path d="M9 4.5H15M9 7H15M9 9.5H15" stroke="#c2c2c2" stroke-width="0.9"/><path d="M10 11.5Q6.5 15 9.5 18Q12.5 20 14.5 23" fill="none" stroke="#c6c6c6" stroke-width="1"/></svg></div>
<div class="ic" style="left:982.0px;top:105.5px;width:24px;height:24px"><svg width="24" height="24" viewBox="0 0 24 24"><path d="M3 3H21M3 7.5H21" stroke="#d6d6d6" stroke-width="0.9"/><path d="M9 3Q12 3.5 12 5.3Q12 3.5 15 3M12 5.3V7.5" fill="none" stroke="#cccccc" stroke-width="0.8"/><path d="M3 9.5H21M3 14.0H21" stroke="#d6d6d6" stroke-width="0.9"/><path d="M9 9.5Q12 10.0 12 11.8Q12 10.0 15 9.5M12 11.8V14.0" fill="none" stroke="#cccccc" stroke-width="0.8"/><path d="M3 16H21M3 20.5H21" stroke="#d6d6d6" stroke-width="0.9"/><path d="M9 16Q12 16.5 12 18.3Q12 16.5 15 16M12 18.3V20.5" fill="none" stroke="#cccccc" stroke-width="0.8"/></svg></div>
<div class="ic" style="left:1015.0px;top:105.5px;width:24px;height:24px"><svg width="24" height="24" viewBox="0 0 24 24"><path d="M11 3L20 8L11 12.5Z" fill="#dfe1df" stroke="#c8cac8" stroke-width="0.8"/><path d="M11 12.5L16 21.5H6Z" fill="#f4f4f4" stroke="#d6d6d6" stroke-width="0.8"/><path d="M7.5 18Q1.5 11 8.5 4.5" fill="none" stroke="#cfcfcf" stroke-width="0.9"/><path d="M6.5 3.5L10.5 3.2L8.8 6.8Z" fill="#cfcfcf"/></svg></div>
<svg class="ic" style="left:505.5px;top:116.5px" width="7" height="4"><path d="M0 0H7L3.5 4Z" fill="#cdcdcd"/></svg>
<svg class="ic" style="left:1045.5px;top:116.5px" width="7" height="4"><path d="M0 0H7L3.5 4Z" fill="#cdcdcd"/></svg>
<svg class="ic" style="left:1064px;top:110px" width="5" height="17" shape-rendering="crispEdges"><path d="M1 1h1v1h-1zM4 1h1v1h-1zM1 4h1v1h-1zM4 4h1v1h-1zM1 7h1v1h-1zM4 7h1v1h-1zM1 10h1v1h-1zM4 10h1v1h-1zM1 13h1v1h-1zM4 13h1v1h-1zM1 16h1v1h-1zM4 16h1v1h-1z" fill="#fbfbfb"/><path d="M0 0h1v1h-1zM3 0h1v1h-1zM0 3h1v1h-1zM3 3h1v1h-1zM0 6h1v1h-1zM3 6h1v1h-1zM0 9h1v1h-1zM3 9h1v1h-1zM0 12h1v1h-1zM3 12h1v1h-1zM0 15h1v1h-1zM3 15h1v1h-1z" fill="#b9b9b9"/></svg>
<div class="ic" style="left:1075.0px;top:105.5px;width:24px;height:24px"><svg width="24" height="24" viewBox="0 0 24 24"><path d="M5.2 4.5H22V15.0H5.2L1 9.75Z" fill="#f2d93a" stroke="#c9a80e" stroke-width="1.1" stroke-linejoin="round"/><text x="13.5" y="12.1" text-anchor="middle" font-family="DejaVu Sans,Liberation Sans,sans-serif" font-weight="bold" font-size="7.2" fill="#2a2a2a">abc</text></svg></div>
<div class="ic" style="left:1109.0px;top:105.5px;width:24px;height:24px"><svg width="24" height="24" viewBox="0 0 24 24"><circle cx="8.8" cy="9" r="7.2" fill="#b3120f" stroke="#5a0a08" stroke-width="0.5"/><path d="M8.8 9L2.6 5.4A7.2 7.2 0 0 1 15 5.4Z" fill="#f4c20d"/><path d="M8.8 9L2.6 5.4A7.2 7.2 0 0 0 8.8 16.2Z" fill="#1fa046"/><rect x="10.5" y="15.5" width="3.8" height="7" fill="#f4c20d" stroke="#b08a05" stroke-width="0.5"/><rect x="14.6" y="9.5" width="3.8" height="13" fill="#1fa046" stroke="#0e6e2c" stroke-width="0.5"/><rect x="18.7" y="16.5" width="3.8" height="6" fill="#b3120f" stroke="#6a0a08" stroke-width="0.5"/></svg></div>
<div class="ic" style="left:1149.0px;top:105.5px;width:24px;height:24px"><svg width="24" height="24" viewBox="0 0 24 24"><path d="M5.2 4.5H21V15.0H5.2L1 9.75Z" fill="#dbe9fb" stroke="#4a86d8" stroke-width="1.1" stroke-linejoin="round"/><text x="10.5" y="12.1" text-anchor="middle" font-family="DejaVu Sans,Liberation Sans,sans-serif" font-weight="bold" font-size="7.2" fill="#2a2a2a">ab</text><path d="M17 9.5Q17 8 18 8T19 9.5V16H17Z" fill="#f2f2f2" stroke="#8a8a8a" stroke-width="0.5"/><circle cx="19" cy="18.5" r="4.8" fill="#8e1b22"/><circle cx="17.6" cy="17" r="1.5" fill="#b84a50"/></svg></div>
<div class="ic" style="left:1181.0px;top:105.5px;width:24px;height:24px"><svg width="24" height="24" viewBox="0 0 24 24"><path d="M5.2 4.5H22V15.0H5.2L1 9.75Z" fill="#fde3e3" stroke="#e51717" stroke-width="1.1" stroke-linejoin="round"/><text x="13.5" y="12.1" text-anchor="middle" font-family="DejaVu Sans,Liberation Sans,sans-serif" font-weight="bold" font-size="7.2" fill="#e51717">abc</text></svg></div>
<div class="ic" style="left:1222.0px;top:105.5px;width:24px;height:24px"><svg width="24" height="24" viewBox="0 0 24 24"><path d="M5.2 4.5H21V15.0H5.2L1 9.75Z" fill="#e6e5da" stroke="#d2d0c2" stroke-width="1.1" stroke-linejoin="round"/><text x="10.5" y="12.1" text-anchor="middle" font-family="DejaVu Sans,Liberation Sans,sans-serif" font-weight="bold" font-size="7.2" fill="#c6c5ba">ab</text><path d="M17 9.5Q17 8 18 8T19 9.5V16H17Z" fill="#f4f4f4" stroke="#d4d4d4" stroke-width="0.5"/><circle cx="19" cy="18.5" r="4.8" fill="#d4c8ca"/></svg></div>
<div class="ic" style="left:1254.5px;top:105.5px;width:24px;height:24px"><svg width="24" height="24" viewBox="0 0 24 24"><path d="M5.2 4.5H22V15.0H5.2L1 9.75Z" fill="#e6e5da" stroke="#d2d0c2" stroke-width="1.1" stroke-linejoin="round"/><text x="13.5" y="12.1" text-anchor="middle" font-family="DejaVu Sans,Liberation Sans,sans-serif" font-weight="bold" font-size="7.2" fill="#c6c5ba">abc</text><path d="M8 18.5Q14 12.5 21 18.5Q14 23.5 8 18.5Z" fill="#f6f6f6" stroke="#cfcfcf" stroke-width="0.8"/><circle cx="14.5" cy="18.3" r="2.2" fill="#d9dde2"/></svg></div>
<div class="ic" style="left:1288.0px;top:105.5px;width:24px;height:24px"><svg width="24" height="24" viewBox="0 0 24 24"><path d="M5.2 4.5H22V15.0H5.2L1 9.75Z" fill="#e6e5da" stroke="#d2d0c2" stroke-width="1.1" stroke-linejoin="round"/><text x="13.5" y="12.1" text-anchor="middle" font-family="DejaVu Sans,Liberation Sans,sans-serif" font-weight="bold" font-size="7.2" fill="#c6c5ba">abc</text><rect x="13" y="13" width="11" height="11" rx="2" fill="#c0c4ca"/><path d="M15 17.2H18.5V15L22.5 18.5L18.5 22V19.8H15Z" fill="#fff"/></svg></div>
<div class="ic" style="left:1321.0px;top:105.5px;width:24px;height:24px"><svg width="24" height="24" viewBox="0 0 24 24"><path d="M5.2 4.5H22V15.0H5.2L1 9.75Z" fill="#e6e5da" stroke="#d2d0c2" stroke-width="1.1" stroke-linejoin="round"/><text x="13.5" y="12.1" text-anchor="middle" font-family="DejaVu Sans,Liberation Sans,sans-serif" font-weight="bold" font-size="7.2" fill="#c6c5ba">abc</text><rect x="13" y="13" width="11" height="11" rx="2" fill="#c0c4ca"/><path d="M15.5 20.3A3.2 3.2 0 1 1 18.5 22.2" fill="none" stroke="#fff" stroke-width="1.5"/><path d="M13.5 19.3L15.5 22.0L17.5 19.3Z" fill="#fff"/></svg></div>
<div class="ic" style="left:1354.0px;top:105.5px;width:24px;height:24px"><svg width="24" height="24" viewBox="0 0 24 24"><path d="M5.2 4.5H22V15.0H5.2L1 9.75Z" fill="#e6e5da" stroke="#d2d0c2" stroke-width="1.1" stroke-linejoin="round"/><text x="13.5" y="12.1" text-anchor="middle" font-family="DejaVu Sans,Liberation Sans,sans-serif" font-weight="bold" font-size="7.2" fill="#c6c5ba">abc</text><rect x="13" y="13" width="11" height="11" rx="2" fill="#d8d5c8"/><path d="M15.5 21.5L16.3 19L21 14.3L22.7 16L18 20.7Z" fill="#fff"/></svg></div>
<div style="left:1141.3px;top:109px;width:1px;height:19px;background:#c9c9c9"></div>
<div style="left:1214px;top:109px;width:1px;height:19px;background:#c9c9c9"></div>
<svg class="ic" style="left:1391px;top:110px" width="5" height="17" shape-rendering="crispEdges"><path d="M1 1h1v1h-1zM4 1h1v1h-1zM1 4h1v1h-1zM4 4h1v1h-1zM1 7h1v1h-1zM4 7h1v1h-1zM1 10h1v1h-1zM4 10h1v1h-1zM1 13h1v1h-1zM4 13h1v1h-1zM1 16h1v1h-1zM4 16h1v1h-1z" fill="#fbfbfb"/><path d="M0 0h1v1h-1zM3 0h1v1h-1zM0 3h1v1h-1zM3 3h1v1h-1zM0 6h1v1h-1zM3 6h1v1h-1zM0 9h1v1h-1zM3 9h1v1h-1zM0 12h1v1h-1zM3 12h1v1h-1zM0 15h1v1h-1zM3 15h1v1h-1z" fill="#b9b9b9"/></svg>
<div class="ic" style="left:1403.0px;top:105.5px;width:24px;height:24px"><svg width="24" height="24" viewBox="0 0 24 24"><circle cx="12" cy="11" r="11.6" fill="#a9c8ea" stroke="#2a5590" stroke-width="1.1"/><path d="M1 11H23M12 0V22M3 5H21M3 17H21" stroke="#e4eefa" stroke-width="0.8"/><path d="M3.5 6L8.5 5.5L9 9L6.5 13L3 10.5Z M11 5L19.5 5L20.5 9.5L16 11L12 9.5Z M7 13.5L13 12.5L15 16L12 19L8.5 18Z M9 2L15 1.5L17 3.5H8Z" fill="#234f8c" opacity="0.92"/><path d="M10.3 13.5H13.4L12.6 21H4.3Z M14.9 13.5H18L24 21H15.7Z" fill="#000"/><rect x="12" y="16.8" width="4.2" height="3" fill="#000"/><ellipse cx="8.4" cy="21.6" rx="4.4" ry="2.9" fill="#000"/><ellipse cx="19.9" cy="21.6" rx="4.4" ry="2.9" fill="#000"/><ellipse cx="8.4" cy="21.7" rx="2.7" ry="1.4" fill="#fff"/><ellipse cx="19.9" cy="21.7" rx="2.7" ry="1.4" fill="#fff"/></svg></div>
<svg class="ic" style="left:1440px;top:110px" width="5" height="17" shape-rendering="crispEdges"><path d="M1 1h1v1h-1zM4 1h1v1h-1zM1 4h1v1h-1zM4 4h1v1h-1zM1 7h1v1h-1zM4 7h1v1h-1zM1 10h1v1h-1zM4 10h1v1h-1zM1 13h1v1h-1zM4 13h1v1h-1zM1 16h1v1h-1zM4 16h1v1h-1z" fill="#fbfbfb"/><path d="M0 0h1v1h-1zM3 0h1v1h-1zM0 3h1v1h-1zM3 3h1v1h-1zM0 6h1v1h-1zM3 6h1v1h-1zM0 9h1v1h-1zM3 9h1v1h-1zM0 12h1v1h-1zM3 12h1v1h-1zM0 15h1v1h-1zM3 15h1v1h-1z" fill="#b9b9b9"/></svg>
<div class="ic" style="left:1452.5px;top:105.5px;width:24px;height:24px"><svg width="24" height="24" viewBox="0 0 24 24"><path d="M11 1.5Q6.5 1.5 6.5 4.5V7.5H11.5V8.5H4Q1 8.5 1 13Q1 17.5 4 17.5H6.5V14Q6.5 11.5 9.5 11.5H14Q16.5 11.5 16.5 9V4.5Q16.5 1.5 11 1.5Z" fill="#3b77b4"/><circle cx="8.8" cy="4.3" r="1" fill="#fff"/><path d="M12 22.5Q16.5 22.5 16.5 19.5V16.5H11.5V15.5H19Q22 15.5 22 11Q22 6.5 19 6.5H16.5V10Q16.5 12.5 13.5 12.5H9Q6.5 12.5 6.5 15V19.5Q6.5 22.5 12 22.5Z" fill="#fbd246"/><circle cx="14.2" cy="19.7" r="1" fill="#fff"/><path d="M17.5 17.5L23 20L17.5 22.5" fill="none" stroke="#3a3a3a" stroke-width="1.3"/></svg></div>
<div class="ic" style="left:1484.0px;top:105.5px;width:24px;height:24px"><svg width="24" height="24" viewBox="0 0 24 24"><path d="M4 13L4 20.5H13Z" fill="#f6ee6a"/><path d="M4 9L10.5 13.5L4 13.5Z" fill="#f6ee6a" stroke="#000" stroke-width="0.8"/><path d="M4 2.5H21.5V20.5" fill="none" stroke="#000" stroke-width="1.2" stroke-dasharray="1.2 1.6"/><path d="M4 1.5V21M2.5 20.8H22.5" stroke="#000" stroke-width="1.8"/><path d="M4.5 20.3L19.5 5" stroke="#1414f0" stroke-width="2"/><path d="M21.5 2.5L20.6 8L16.2 3.6Z" fill="#1414f0"/></svg></div>
<div class="ic" style="left:1518.5px;top:105.5px;width:24px;height:24px"><svg width="24" height="24" viewBox="0 0 24 24"><circle cx="12" cy="12" r="11.3" fill="#1d2f6e" stroke="#10205a" stroke-width="0.8"/><circle cx="12" cy="12" r="9.6" fill="#0a0a12"/><path d="M3.5 9Q8 6 13 9.5Q17 13 17 19.5Q12 22.5 7 19.5Q2.5 15 3.5 9Z" fill="#3f87c9"/><path d="M5 10Q8.5 8.5 11 11Q12.5 14.5 10.5 17Q7 16.5 5.5 14Z" fill="#4e9a4a"/><path d="M12 12Q15 14 15 18.5Q13 17 12 12Z" fill="#d9d4a2"/><circle cx="15" cy="6.8" r="2.4" fill="#8a8a96" opacity="0.55"/></svg></div>
<svg class="ic" style="left:1555px;top:110px" width="5" height="17" shape-rendering="crispEdges"><path d="M1 1h1v1h-1zM4 1h1v1h-1zM1 4h1v1h-1zM4 4h1v1h-1zM1 7h1v1h-1zM4 7h1v1h-1zM1 10h1v1h-1zM4 10h1v1h-1zM1 13h1v1h-1zM4 13h1v1h-1zM1 16h1v1h-1zM4 16h1v1h-1z" fill="#fbfbfb"/><path d="M0 0h1v1h-1zM3 0h1v1h-1zM0 3h1v1h-1zM3 3h1v1h-1zM0 6h1v1h-1zM3 6h1v1h-1zM0 9h1v1h-1zM3 9h1v1h-1zM0 12h1v1h-1zM3 12h1v1h-1zM0 15h1v1h-1zM3 15h1v1h-1z" fill="#b9b9b9"/></svg>
<div class="ic" style="left:1567.0px;top:105.5px;width:24px;height:24px"><svg width="24" height="24" viewBox="0 0 24 24"><rect x="3.5" y="1.5" width="18" height="21" fill="#6b95c9" stroke="#2b3f5c" stroke-width="1"/><rect x="3.5" y="1.5" width="4.6" height="21" fill="#2e4058"/><text x="14.6" y="17.2" text-anchor="middle" font-family="DejaVu Serif,Liberation Serif,serif" font-size="14" fill="#fff">?</text></svg></div>
<svg class="ic" style="left:1604px;top:110px" width="5" height="17" shape-rendering="crispEdges"><path d="M1 1h1v1h-1zM4 1h1v1h-1zM1 4h1v1h-1zM4 4h1v1h-1zM1 7h1v1h-1zM4 7h1v1h-1zM1 10h1v1h-1zM4 10h1v1h-1zM1 13h1v1h-1zM4 13h1v1h-1zM1 16h1v1h-1zM4 16h1v1h-1z" fill="#fbfbfb"/><path d="M0 0h1v1h-1zM3 0h1v1h-1zM0 3h1v1h-1zM3 3h1v1h-1zM0 6h1v1h-1zM3 6h1v1h-1zM0 9h1v1h-1zM3 9h1v1h-1zM0 12h1v1h-1zM3 12h1v1h-1zM0 15h1v1h-1zM3 15h1v1h-1z" fill="#b9b9b9"/></svg>
<div class="ic" style="left:1615.5px;top:105.5px;width:24px;height:24px"><svg width="24" height="24" viewBox="0 0 24 24"><rect x="1.5" y="1.5" width="19.5" height="19.5" fill="#fff" stroke="#5a9bd8" stroke-width="1"/><rect x="2" y="2" width="18.5" height="3.2" fill="#f7c64a"/><path d="M2 9H20.5M2 13H20.5M2 17H20.5M7.5 5.2V20.5M14 5.2V20.5" stroke="#9cc3e8" stroke-width="0.8"/><path d="M10 13A5.5 5.5 0 0 1 19.5 9.5L21.5 7.5V13.5H15.5L17.5 11.5A3 3 0 0 0 12.8 13Z" fill="#7ac043" stroke="#4f9a1f" stroke-width="0.6"/><path d="M22 15A5.5 5.5 0 0 1 12.5 18.5L10.5 20.5V14.5H16.5L14.5 16.5A3 3 0 0 0 19.2 15Z" fill="#7ac043" stroke="#4f9a1f" stroke-width="0.6"/></svg></div>
<svg class="ic" style="left:6px;top:149px" width="5" height="17" shape-rendering="crispEdges"><path d="M1 1h1v1h-1zM4 1h1v1h-1zM1 4h1v1h-1zM4 4h1v1h-1zM1 7h1v1h-1zM4 7h1v1h-1zM1 10h1v1h-1zM4 10h1v1h-1zM1 13h1v1h-1zM4 13h1v1h-1zM1 16h1v1h-1zM4 16h1v1h-1z" fill="#fbfbfb"/><path d="M0 0h1v1h-1zM3 0h1v1h-1zM0 3h1v1h-1zM3 3h1v1h-1zM0 6h1v1h-1zM3 6h1v1h-1zM0 9h1v1h-1zM3 9h1v1h-1zM0 12h1v1h-1zM3 12h1v1h-1zM0 15h1v1h-1zM3 15h1v1h-1z" fill="#b9b9b9"/></svg>
<div class="pressed" style="left:14px;top:142px;width:32px;height:31px;"></div>
<div class="ic" style="left:19.0px;top:145.5px;width:24px;height:24px"><svg width="24" height="24" viewBox="0 0 24 24"><g transform="rotate(-45 12 12)"><path d="M4.5 3H9.5V12.5A2.5 2.5 0 0 0 14.5 12.5V3H19.5V12.5A7.5 7.5 0 0 1 4.5 12.5Z" fill="#d8141c" stroke="#a50d14" stroke-width="0.7"/><rect x="4.5" y="3" width="5" height="3.6" fill="#fff" stroke="#a50d14" stroke-width="0.6"/><rect x="14.5" y="3" width="5" height="3.6" fill="#fff" stroke="#a50d14" stroke-width="0.6"/><path d="M6.2 8V12.5A5.8 5.8 0 0 0 8 16.8" fill="none" stroke="#f0585e" stroke-width="1.1"/></g></svg></div>
<div class="ic" style="left:52.5px;top:143.5px;width:24px;height:24px"><svg width="24" height="24" viewBox="0 0 24 24"><path d="M4 3L8.5 16.5L13 5.5H17M3.8 9.5L8.5 12L13 10H17" fill="none" stroke="#6db56d" stroke-width="1.4"/><rect x="2.7" y="1.7" width="2.6" height="2.6" fill="#d8d8d8" stroke="#7a7a7a" stroke-width="0.7"/><rect x="11.7" y="4.2" width="2.6" height="2.6" fill="#d8d8d8" stroke="#7a7a7a" stroke-width="0.7"/><rect x="15.7" y="4.2" width="2.6" height="2.6" fill="#d8d8d8" stroke="#7a7a7a" stroke-width="0.7"/><rect x="2.5" y="8.2" width="2.6" height="2.6" fill="#d8d8d8" stroke="#7a7a7a" stroke-width="0.7"/><rect x="7.2" y="10.7" width="2.6" height="2.6" fill="#d8d8d8" stroke="#7a7a7a" stroke-width="0.7"/><rect x="11.7" y="8.7" width="2.6" height="2.6" fill="#d8d8d8" stroke="#7a7a7a" stroke-width="0.7"/><rect x="15.7" y="8.7" width="2.6" height="2.6" fill="#d8d8d8" stroke="#7a7a7a" stroke-width="0.7"/><rect x="7.2" y="15.2" width="2.6" height="2.6" fill="#d8d8d8" stroke="#7a7a7a" stroke-width="0.7"/></svg></div>
<svg class="ic" style="left:72.0px;top:166.5px" width="5" height="3"><path d="M0 0H5L2.5 3Z" fill="#4a4a4a"/></svg>
<div class="ic" style="left:85.0px;top:144.5px;width:24px;height:24px"><svg width="24" height="24" viewBox="0 0 24 24"><path d="M4 5.5L9 17L14 7.5" fill="none" stroke="#6db56d" stroke-width="1.5"/><rect x="2.5" y="4.0" width="3" height="3" fill="#d8d8d8" stroke="#7a7a7a" stroke-width="0.7"/><rect x="12.5" y="6.0" width="3" height="3" fill="#d8d8d8" stroke="#7a7a7a" stroke-width="0.7"/><rect x="7.5" y="15.5" width="3" height="3" fill="#d8d8d8" stroke="#7a7a7a" stroke-width="0.7"/></svg></div>
<svg class="ic" style="left:105.0px;top:166.5px" width="5" height="3"><path d="M0 0H5L2.5 3Z" fill="#4a4a4a"/></svg>
<div class="spin" style="left:113px;top:146px;width:103px;height:23px;"></div>
<div style="left:201px;top:146px;width:15px;height:23px;border:1px solid #b6b6b6;border-left:1px solid #c8c8c8;border-radius:0 3px 3px 0;background:linear-gradient(#fcfcfc,#ececec)"></div>
<svg class="ic" style="left:205px;top:150.5px" width="7" height="14"><path d="M0 5L3.5 1L7 5Z M0 9L3.5 13L7 9Z" fill="#4a4a4a"/></svg>
<span class="t" style="left:118.5px;top:150.00px;font-size:13px;">2</span>
<div class="combo" style="left:217.5px;top:146px;width:108.5px;height:23px;"></div>
<span class="t" style="left:222.5px;top:150.00px;font-size:13px;">px</span>
<svg class="ic" style="left:310.5px;top:155.5px" width="7" height="4"><path d="M0 0H7L3.5 4Z" fill="#4a4a4a"/></svg>
<div class="ic" style="left:331.0px;top:144.5px;width:24px;height:24px"><svg width="24" height="24" viewBox="0 0 24 24"><path d="M3.5 2.5L8 11L20.5 7M8 11V23" fill="none" stroke="#6db56d" stroke-width="1.6" stroke-linecap="round"/><rect x="6.2" y="9.2" width="3.6" height="3.6" fill="#bdbdbd" stroke="#7a7a7a" stroke-width="0.7"/></svg></div>
<div class="ic" style="left:364.0px;top:144.5px;width:24px;height:24px"><svg width="24" height="24" viewBox="0 0 24 24"><path d="M2.5 2.5L21.5 22M21.5 2.5L2.5 22" fill="none" stroke="#6db56d" stroke-width="1.6" stroke-linecap="round"/><rect x="10.2" y="10.399999999999999" width="3.6" height="3.6" fill="#bdbdbd" stroke="#7a7a7a" stroke-width="0.7"/></svg></div>
<div class="ic" style="left:397.0px;top:144.5px;width:24px;height:24px"><svg width="24" height="24" viewBox="0 0 24 24"><path d="M2.5 22L21.5 2.5" fill="none" stroke="#6db56d" stroke-width="1.6" stroke-linecap="round"/><path d="M4.5 5.5L12 10L14 7.5L19 19.5L12.5 14.5L10 17.5Z" fill="#f5c211" stroke="#d9a400" stroke-width="0.6"/></svg></div>
<svg class="ic" style="left:427.5px;top:155.5px" width="7" height="4"><path d="M0 0H7L3.5 4Z" fill="#4a4a4a"/></svg>
<svg class="ic" style="left:446px;top:149px" width="5" height="17" shape-rendering="crispEdges"><path d="M1 1h1v1h-1zM4 1h1v1h-1zM1 4h1v1h-1zM4 4h1v1h-1zM1 7h1v1h-1zM4 7h1v1h-1zM1 10h1v1h-1zM4 10h1v1h-1zM1 13h1v1h-1zM4 13h1v1h-1zM1 16h1v1h-1zM4 16h1v1h-1z" fill="#fbfbfb"/><path d="M0 0h1v1h-1zM3 0h1v1h-1zM0 3h1v1h-1zM3 3h1v1h-1zM0 6h1v1h-1zM3 6h1v1h-1zM0 9h1v1h-1zM3 9h1v1h-1zM0 12h1v1h-1zM3 12h1v1h-1zM0 15h1v1h-1zM3 15h1v1h-1z" fill="#b9b9b9"/></svg>
<div class="ic" style="left:459.0px;top:144.5px;width:24px;height:24px"><svg width="24" height="24" viewBox="0 0 24 24"><defs><linearGradient id="cyg" x1="0" x2="1"><stop offset="0" stop-color="#f8e08a"/><stop offset="0.45" stop-color="#fbeeb8"/><stop offset="1" stop-color="#e0a92a"/></linearGradient></defs><path d="M4 4.5V19.5A8 3 0 0 0 20 19.5V4.5Z" fill="url(#cyg)" stroke="#d9b040" stroke-width="0.7"/><ellipse cx="12" cy="4.5" rx="8" ry="3" fill="#fbe9a0" stroke="#d9b040" stroke-width="0.7"/></svg></div>
<div class="ic" style="left:492.0px;top:144.5px;width:24px;height:24px"><svg width="24" height="24" viewBox="0 0 24 24"><path d="M8.5 19.5L13 5.5Q20 9 21.5 19.5Z" fill="#f0cf55" stroke="#b8860b" stroke-width="1.1"/><path d="M11.5 17.5L13.8 10Q17 12.5 18 17.5Z" fill="#f6f0dc" stroke="#b8860b" stroke-width="0.7"/><rect x="3.5" y="1" width="3.6" height="22" fill="#9a4a2a" stroke="#6a2f18" stroke-width="0.6"/><rect x="1" y="18.2" width="22.5" height="3.6" fill="#9a4a2a" stroke="#6a2f18" stroke-width="0.6"/><path d="M5.3 2.5V17M3 20H22" stroke="#c07850" stroke-width="0.6" stroke-dasharray="1 1.5"/></svg></div>
<div class="ic" style="left:525.0px;top:144.5px;width:24px;height:24px"><svg width="24" height="24" viewBox="0 0 24 24"><g fill="none" stroke="#f5b800" stroke-width="1.5" stroke-linecap="round"><path d="M7.5 6.5Q5.5 11 7.5 15.5M4.2 4.5Q1 11 4.2 17.5M16.5 6.5Q18.5 11 16.5 15.5M19.8 4.5Q23 11 19.8 17.5"/></g><path d="M8.5 6.5Q8.5 12.5 12 13.5Q15.5 12.5 15.5 6.5" fill="none" stroke="#111" stroke-width="2.6" stroke-linecap="round"/><path d="M12 13V21" stroke="#111" stroke-width="2.8" stroke-linecap="round"/><circle cx="12" cy="9" r="2.6" fill="#2fe04a" stroke="#0d8a22" stroke-width="0.5"/></svg></div>
<div class="ic" style="left:558.0px;top:144.5px;width:24px;height:24px"><svg width="24" height="24" viewBox="0 0 24 24"><path d="M2 17L12 12.5L22.5 17L12 22Z" fill="#d4d83a" stroke="#9a9e1a" stroke-width="0.7"/><path d="M2 17L12 22V23L2 18Z" fill="#8f931a"/><path d="M22.5 17L12 22V23L22.5 18Z" fill="#a9ad22"/><path d="M8 17H12M10 15.5V18" stroke="#7a7e10" stroke-width="0.6"/><path d="M12 17.5Q7.2 10.5 7.2 6.5A4.8 4.8 0 0 1 16.8 6.5Q16.8 10.5 12 17.5Z" fill="#f0461a" stroke="#b02a08" stroke-width="0.6"/><path d="M12 3.5V8.5" stroke="#ffb48a" stroke-width="1.1"/><circle cx="12" cy="10" r="0.7" fill="#ffb48a"/></svg></div>
<svg class="ic" style="left:595px;top:149px" width="5" height="17" shape-rendering="crispEdges"><path d="M1 1h1v1h-1zM4 1h1v1h-1zM1 4h1v1h-1zM4 4h1v1h-1zM1 7h1v1h-1zM4 7h1v1h-1zM1 10h1v1h-1zM4 10h1v1h-1zM1 13h1v1h-1zM4 13h1v1h-1zM1 16h1v1h-1zM4 16h1v1h-1z" fill="#fbfbfb"/><path d="M0 0h1v1h-1zM3 0h1v1h-1zM0 3h1v1h-1zM3 3h1v1h-1zM0 6h1v1h-1zM3 6h1v1h-1zM0 9h1v1h-1zM3 9h1v1h-1zM0 12h1v1h-1zM3 12h1v1h-1zM0 15h1v1h-1zM3 15h1v1h-1z" fill="#b9b9b9"/></svg>
<div class="ic" style="left:607.0px;top:145.0px;width:24px;height:24px"><svg width="24" height="24" viewBox="0 0 24 24"><defs><linearGradient id="gsg" x1="0" y1="0" x2="0" y2="1"><stop offset="0" stop-color="#5e9f3b"/><stop offset="1" stop-color="#8fce6b"/></linearGradient></defs><rect x="0" y="0" width="24" height="24" fill="url(#gsg)"/><path d="M0 0H24L0 15Z" fill="#fff" opacity="0.08"/><path d="M9 15.2L3.2 21" stroke="#eef6ea" stroke-width="2.5" stroke-linecap="round"/><circle cx="14.3" cy="9.7" r="7.2" fill="#a8d890" fill-opacity="0.45" stroke="#fff" stroke-width="1.7"/></svg></div>
<div class="ic" style="left:639.0px;top:145.0px;width:24px;height:24px"><svg width="24" height="24" viewBox="0 0 24 24"><rect x="1" y="0.5" width="20.5" height="23.5" fill="#fcd142"/><path d="M15 2H21.5V12L17 9Z" fill="#fde488"/><rect x="1" y="0.5" width="3" height="15" fill="#a2245c"/><path d="M2 2.5L9.5 2.2L8 5.5L2 6.5Z" fill="#3db54a"/><rect x="4.2" y="8" width="1.8" height="7" fill="#b04a6a"/><rect x="7" y="10" width="2.3" height="4.2" fill="#2a7a9a"/><path d="M11.5 0.5H13.5Q12.5 5 15.5 9Q18 12.5 21.5 17V19.5Q15.5 14.5 13.5 10Q11 5 11.5 0.5Z" fill="#2f6fde"/><path d="M17 12L21.5 17.5V19.5L15.5 18.5Z" fill="#8fb0e8"/><path d="M1 19.5Q6 17 10 20Q14 22.5 21.5 21V24H1Z" fill="#2f6fde"/><path d="M4 23Q8 21.5 12 23Z" fill="#fcd142"/><path d="M1 17.5Q5 14.5 10.5 15.5" fill="none" stroke="#3a3a3a" stroke-width="0.8" stroke-dasharray="1.2 0.8"/><path d="M23.5 1.5L13.5 13" stroke="#8a3a10" stroke-width="3" stroke-linecap="round"/><path d="M23 2.2L14 12.5" stroke="#b05a22" stroke-width="1"/><path d="M14 12.2L12 13.8L10.5 15.8L12.8 15L14.8 13.3Z" fill="#4a4a4a" stroke="#2a2a2a" stroke-width="0.5"/></svg></div>
<svg class="ic" style="left:677px;top:149px" width="5" height="17" shape-rendering="crispEdges"><path d="M1 1h1v1h-1zM4 1h1v1h-1zM1 4h1v1h-1zM4 4h1v1h-1zM1 7h1v1h-1zM4 7h1v1h-1zM1 10h1v1h-1zM4 10h1v1h-1zM1 13h1v1h-1zM4 13h1v1h-1zM1 16h1v1h-1zM4 16h1v1h-1z" fill="#fbfbfb"/><path d="M0 0h1v1h-1zM3 0h1v1h-1zM0 3h1v1h-1zM3 3h1v1h-1zM0 6h1v1h-1zM3 6h1v1h-1zM0 9h1v1h-1zM3 9h1v1h-1zM0 12h1v1h-1zM3 12h1v1h-1zM0 15h1v1h-1zM3 15h1v1h-1z" fill="#b9b9b9"/></svg>
<div class="ic" style="left:689.0px;top:145.0px;width:24px;height:24px"><svg width="24" height="24" viewBox="0 0 24 24"><rect x="0" y="0" width="24" height="24" fill="#ffc0cb"/><text x="12" y="16.6" text-anchor="middle" font-family="DejaVu Sans Mono,Liberation Mono,monospace" font-weight="normal" font-size="12.5" fill="#ff1010" stroke="#ff1010" stroke-width="0.55">AD</text></svg></div>
<div class="ic" style="left:722.0px;top:145.0px;width:24px;height:24px"><svg width="24" height="24" viewBox="0 0 24 24"><rect x="0" y="0" width="24" height="24" fill="#e3e9e1"/><text x="12" y="16.6" text-anchor="middle" font-family="DejaVu Sans Mono,Liberation Mono,monospace" font-weight="normal" font-size="13.5" fill="#dfd0d0">MO</text></svg></div>
<div class="ic" style="left:755.0px;top:145.0px;width:24px;height:24px"><svg width="24" height="24" viewBox="0 0 24 24"><rect x="0" y="0" width="24" height="24" fill="#bdb5c1"/><text x="12" y="16.6" text-anchor="middle" font-family="DejaVu Sans Mono,Liberation Mono,monospace" font-weight="normal" font-size="13.5" fill="#e2dcd2">RO</text></svg></div>
<div style="left:784.5px;top:146px;width:69.5px;height:23px;border:1px solid #bdbdbd;border-radius:3px;background:#efefef"></div>
<div style="left:839px;top:146px;width:15px;height:23px;border:1px solid #bdbdbd;border-left:1px solid #cfcfcf;border-radius:0 3px 3px 0;background:#f6f6f6"></div>
<svg class="ic" style="left:843px;top:150.5px" width="7" height="14"><path d="M0 5L3.5 1L7 5Z M0 9L3.5 13L7 9Z" fill="#cfcfcf"/></svg>
<span class="t" style="left:789.5px;top:150.00px;font-size:13px;color:#b6b6b6">0.0</span>
<div class="ic" style="left:859.0px;top:145.0px;width:24px;height:24px"><svg width="24" height="24" viewBox="0 0 24 24"><rect x="0" y="0" width="24" height="24" fill="#dcdfcd"/><text x="12" y="16.6" text-anchor="middle" font-family="DejaVu Sans Mono,Liberation Mono,monospace" font-weight="normal" font-size="13.5" fill="#c6d0ca">SC</text></svg></div>
<div class="ic" style="left:892.0px;top:145.0px;width:24px;height:24px"><svg width="24" height="24" viewBox="0 0 24 24"><rect x="0" y="0" width="24" height="24" fill="#c6bfc3"/><text x="12" y="16.6" text-anchor="middle" font-family="DejaVu Sans Mono,Liberation Mono,monospace" font-weight="normal" font-size="11" fill="#f0eef0">ADJ</text></svg></div>
<div class="ic" style="left:925.0px;top:145.0px;width:24px;height:24px"><svg width="24" height="24" viewBox="0 0 24 24"><rect x="0" y="0" width="24" height="24" fill="#d3dcd9"/><text x="12" y="16.6" text-anchor="middle" font-family="DejaVu Sans Mono,Liberation Mono,monospace" font-weight="normal" font-size="13.5" fill="#e4c6cb">2P</text></svg></div>
<div class="ic" style="left:958.0px;top:145.0px;width:24px;height:24px"><svg width="24" height="24" viewBox="0 0 24 24"><rect x="0" y="0" width="24" height="24" fill="#f8f8f8"/><text x="12" y="16.6" text-anchor="middle" font-family="DejaVu Sans Mono,Liberation Mono,monospace" font-weight="normal" font-size="13.5" fill="#c8c8c8">T-</text></svg></div>
<div class="ic" style="left:991.0px;top:145.0px;width:24px;height:24px"><svg width="24" height="24" viewBox="0 0 24 24"><rect x="0" y="0" width="24" height="24" fill="#a2a2a2"/><text x="12" y="16.6" text-anchor="middle" font-family="DejaVu Sans Mono,Liberation Mono,monospace" font-weight="normal" font-size="12.5" fill="#f4f4f4" stroke="#f4f4f4" stroke-width="0.5">T+</text></svg></div>
<div class="ic" style="left:1024.0px;top:145.0px;width:24px;height:24px"><svg width="24" height="24" viewBox="0 0 24 24"><rect x="0" y="0" width="24" height="24" fill="#dde4d4"/><text x="12" y="16.6" text-anchor="middle" font-family="DejaVu Sans Mono,Liberation Mono,monospace" font-weight="normal" font-size="13.5" fill="#e8b6b6">!!</text></svg></div>
<div class="ic" style="left:1057.5px;top:145.0px;width:24px;height:24px"><svg width="24" height="24" viewBox="0 0 24 24"><rect x="0" y="0" width="23.5" height="24" fill="#b4b6c4"/><path d="M1 9.5L10 2V6.5Q22.5 7 22.5 20Q19.5 13 10 13.5V18Z" fill="#d4d8e2"/></svg></div>
<svg class="ic" style="left:1094px;top:149px" width="5" height="17" shape-rendering="crispEdges"><path d="M1 1h1v1h-1zM4 1h1v1h-1zM1 4h1v1h-1zM4 4h1v1h-1zM1 7h1v1h-1zM4 7h1v1h-1zM1 10h1v1h-1zM4 10h1v1h-1zM1 13h1v1h-1zM4 13h1v1h-1zM1 16h1v1h-1zM4 16h1v1h-1z" fill="#fbfbfb"/><path d="M0 0h1v1h-1zM3 0h1v1h-1zM0 3h1v1h-1zM3 3h1v1h-1zM0 6h1v1h-1zM3 6h1v1h-1zM0 9h1v1h-1zM3 9h1v1h-1zM0 12h1v1h-1zM3 12h1v1h-1zM0 15h1v1h-1zM3 15h1v1h-1z" fill="#b9b9b9"/></svg>
<div class="ic" style="left:1106.0px;top:144.5px;width:24px;height:24px"><svg width="24" height="24" viewBox="0 0 24 24"><path d="M1 8Q1 2 8 2Q12 2 15 3.5Q19 3 22 4.5Q24 8 22.5 11Q18 11.5 15 10L10.5 12Q6 12.5 2 11Q0.5 10 1 8Z" fill="#dcdedc" stroke="#bfc1bf" stroke-width="1.1"/><path d="M1.5 20Q3 13.5 9 13Q11 13.5 11 16Q10.5 21.5 5.5 23Q1 23 1.5 20Z" fill="#dcdedc" stroke="#bfc1bf" stroke-width="1.1"/><path d="M9 13L17 8.5M10.5 10.5L17.5 14.5" stroke="#f0f0f0" stroke-width="1.6"/><path d="M9 13L17 8.5M10.5 10.5L17.5 14.5" stroke="#cfcfcf" stroke-width="0.6"/><ellipse cx="18.6" cy="8" rx="2.4" ry="1.5" fill="none" stroke="#d6bcc0" stroke-width="1.1" transform="rotate(-32 18.6 8)"/><ellipse cx="19.3" cy="15.5" rx="2.4" ry="1.5" fill="none" stroke="#d6bcc0" stroke-width="1.1" transform="rotate(28 19.3 15.5)"/></svg></div>
<div class="ic" style="left:1151.0px;top:144.5px;width:24px;height:24px"><svg width="24" height="24" viewBox="0 0 24 24"><path d="M1 8Q1 2 8 2Q12 2 15 3.5Q19 3 22 4.5Q24 8 22.5 11Q18 11.5 15 10L10.5 12Q6 12.5 2 11Q0.5 10 1 8Z" fill="#dcdedc" stroke="#bfc1bf" stroke-width="1.1"/><path d="M1.5 20Q3 13.5 9 13Q11 13.5 11 16Q10.5 21.5 5.5 23Q1 23 1.5 20Z" fill="#dcdedc" stroke="#bfc1bf" stroke-width="1.1"/><path d="M9 13L17 8.5M10.5 10.5L17.5 14.5" stroke="#f0f0f0" stroke-width="1.6"/><path d="M9 13L17 8.5M10.5 10.5L17.5 14.5" stroke="#cfcfcf" stroke-width="0.6"/><ellipse cx="18.6" cy="8" rx="2.4" ry="1.5" fill="none" stroke="#d6bcc0" stroke-width="1.1" transform="rotate(-32 18.6 8)"/><ellipse cx="19.3" cy="15.5" rx="2.4" ry="1.5" fill="none" stroke="#d6bcc0" stroke-width="1.1" transform="rotate(28 19.3 15.5)"/><rect x="13" y="13" width="11" height="11" rx="2" fill="#d2cec0"/><g stroke="#fff" stroke-width="1.3" stroke-linecap="round"><path d="M14.9 18.5L22.1 18.5"/><path d="M16.7 15.4L20.3 21.6"/><path d="M20.3 15.4L16.7 21.6"/></g><circle cx="18.5" cy="18.5" r="1.1" fill="#d2cec0"/></svg></div>
<div class="ic" style="left:1184.0px;top:144.5px;width:24px;height:24px"><svg width="24" height="24" viewBox="0 0 24 24"><path d="M10.5 2Q3 0.5 1.2 6Q0.5 11.5 5 13.5Q9 14 10.5 11Z" fill="#dcdedc" stroke="#bfc1bf" stroke-width="1.1"/><path d="M13.5 2Q21 0.5 22.8 6Q23.5 11.5 19 13.5Q15 14 13.5 11Z" fill="#dcdedc" stroke="#bfc1bf" stroke-width="1.1"/><path d="M10.3 1.5L14 16M13.7 1.5L10 16" stroke="#f2f2f2" stroke-width="1.8"/><path d="M10.3 1.5L14 16M13.7 1.5L10 16" stroke="#c8c8c8" stroke-width="0.7"/><ellipse cx="8.3" cy="19.3" rx="1.7" ry="3.4" fill="none" stroke="#d6bcc0" stroke-width="1.1" transform="rotate(28 8.3 19.3)"/><ellipse cx="15.7" cy="19.3" rx="1.7" ry="3.4" fill="none" stroke="#d6bcc0" stroke-width="1.1" transform="rotate(-28 15.7 19.3)"/></svg></div>
<div class="ic" style="left:1217.0px;top:144.5px;width:24px;height:24px"><svg width="24" height="24" viewBox="0 0 24 24"><path d="M11 2.5Q3.5 0.5 1.5 6Q0.5 12 5.5 14Q10 14.5 11 11Z" fill="#dcdedc" stroke="#bfc1bf" stroke-width="1.1"/><path d="M13 2.5Q20.5 0.5 22.5 6Q23.5 12 18.5 14Q14 14.5 13 11Z" fill="#dcdedc" stroke="#bfc1bf" stroke-width="1.1"/><path d="M9 4.5H15M9 7H15M9 9.5H15" stroke="#c2c2c2" stroke-width="0.9"/><path d="M10 11.5Q6.5 15 9.5 18Q12.5 20 14.5 23" fill="none" stroke="#c6c6c6" stroke-width="1"/></svg></div>
<div class="ic" style="left:1250.0px;top:144.5px;width:24px;height:24px"><svg width="24" height="24" viewBox="0 0 24 24"><path d="M2 3H20V11H13V22H2Z" fill="#e9e8dc" stroke="#d0cfc0" stroke-width="0.8" stroke-dasharray="1.5 1.2"/><path transform="translate(12 7.5) scale(1.17 1.15) translate(-12 -7.5)" d="M4 5.5Q5 3 10 3.5Q13 4.5 16 4Q19 4 18.5 7Q18 10 14 9.5Q11 9.5 10 11Q7 12 5 10Q3.5 8 4 5.5Z" fill="#dcdedc" stroke="#bfc1bf" stroke-width="1"/><path transform="translate(12 7.5) scale(1.17 1.15) translate(-12 -7.5)" d="M4 18Q5 14 10 14.5Q11 18 8 21Q4 22 4 18Z" fill="#dcdedc" stroke="#bfc1bf" stroke-width="1"/><rect x="13" y="13" width="11" height="11" rx="2" fill="#c0c4ca"/><path d="M15.5 20.3A3.2 3.2 0 1 1 18.5 22.2" fill="none" stroke="#fff" stroke-width="1.5"/><path d="M13.5 19.3L15.5 22.0L17.5 19.3Z" fill="#fff"/></svg></div>
<div class="ic" style="left:1283.0px;top:144.5px;width:24px;height:24px"><svg width="24" height="24" viewBox="0 0 24 24"><path transform="translate(12 7.5) scale(1.17 1.15) translate(-12 -7.5)" d="M2.5 6Q3 2.5 8 3Q12 4.5 16 3.5Q21.5 3.5 21 8Q20.5 12.5 15 12.5Q9 12.5 5 11Q2 9.5 2.5 6Z" fill="#dcdedc" stroke="#bfc1bf" stroke-width="1"/><ellipse cx="8" cy="7.5" rx="3.8" ry="2.8" fill="#f0f0f0" stroke="#cccccc" stroke-width="0.7" stroke-dasharray="1.2 1"/><path d="M5.5 7H8" stroke="#cfcfcf" stroke-width="0.7"/></svg></div>
<div class="ic" style="left:1328.0px;top:144.5px;width:24px;height:24px"><svg width="24" height="24" viewBox="0 0 24 24"><path d="M2.5 6Q3 2.5 8 3Q12 4.5 16 3.5Q21.5 3.5 21 8Q20.5 12.5 15 12.5Q9 12.5 5 11Q2 9.5 2.5 6Z" fill="#eeeeee" stroke="#cccccc" stroke-width="0.9" stroke-dasharray="1.6 1.3"/><ellipse cx="8" cy="7" rx="4.2" ry="2.8" fill="#dcdedc"/></svg></div>
<div class="ic" style="left:1373.5px;top:144.5px;width:24px;height:24px"><svg width="24" height="24" viewBox="0 0 24 24"><path transform="translate(12 7.5) scale(1.17 1.15) translate(-12 -7.5)" d="M2.5 6Q3 2.5 8 3Q12 4.5 16 3.5Q21.5 3.5 21 8Q20.5 12.5 15 12.5Q9 12.5 5 11Q2 9.5 2.5 6Z" fill="#dcdedc" stroke="#bfc1bf" stroke-width="1"/><ellipse cx="8.5" cy="7" rx="4" ry="2.8" fill="#d6d8d6" stroke="#c8cac8" stroke-width="0.7"/><rect x="13" y="13" width="11" height="11" rx="2" fill="#d2cec0"/><g stroke="#fff" stroke-width="1.3" stroke-linecap="round"><path d="M14.9 18.5L22.1 18.5"/><path d="M16.7 15.4L20.3 21.6"/><path d="M20.3 15.4L16.7 21.6"/></g><circle cx="18.5" cy="18.5" r="1.1" fill="#d2cec0"/></svg></div>
<div class="ic" style="left:1418.0px;top:144.5px;width:24px;height:24px"><svg width="24" height="24" viewBox="0 0 24 24"><path transform="translate(12 7.5) scale(1.17 1.15) translate(-12 -7.5)" d="M2.5 7Q3 3 8 3.5Q12 5 12 9Q11 12.5 6 12Q2 11 2.5 7Z" fill="#dcdedc" stroke="#bfc1bf" stroke-width="1"/><path d="M9 5Q13 2.5 18 3.5Q22 4.5 21 8.5Q19 12.5 13 12Q9 11 9 5Z" fill="#eceeec" fill-opacity="0.8" stroke="#d0d2d0" stroke-width="0.9"/><rect x="13" y="13" width="11" height="11" rx="2" fill="#d2cec0"/><g stroke="#fff" stroke-width="1.3" stroke-linecap="round"><path d="M14.9 18.5L22.1 18.5"/><path d="M16.7 15.4L20.3 21.6"/><path d="M20.3 15.4L16.7 21.6"/></g><circle cx="18.5" cy="18.5" r="1.1" fill="#d2cec0"/></svg></div>
<div class="ic" style="left:1463.0px;top:144.5px;width:24px;height:24px"><svg width="24" height="24" viewBox="0 0 24 24"><defs><linearGradient id="tg2" x1="0" x2="1"><stop offset="0" stop-color="#d9dde6"/><stop offset="1" stop-color="#ebe3de"/></linearGradient></defs><path d="M2.5 7Q3 3 8 3.5Q12 5 12 9Q11 12.5 6 12Q2 11 2.5 7Z" fill="url(#tg2)" stroke="#cdd0d6" stroke-width="0.9"/><path d="M9 5Q13 2.5 18 3.5Q22 4.5 21 8.5Q19 12.5 13 12Q9 11 9 5Z" fill="#eeeeee" fill-opacity="0.8" stroke="#d6d2d0" stroke-width="0.9"/><rect x="13" y="13" width="11" height="11" rx="2" fill="#d2cec0"/><g stroke="#fff" stroke-width="1.3" stroke-linecap="round"><path d="M14.9 18.5L22.1 18.5"/><path d="M16.7 15.4L20.3 21.6"/><path d="M20.3 15.4L16.7 21.6"/></g><circle cx="18.5" cy="18.5" r="1.1" fill="#d2cec0"/></svg></div>
<div class="ic" style="left:1496.5px;top:144.5px;width:24px;height:24px"><svg width="24" height="24" viewBox="0 0 24 24"><path d="M4 8L8.5 20.5M4 8L12 11.5L16.5 3.5H21M12 11.5L9 14.5" fill="none" stroke="#d6e2d6" stroke-width="1"/><circle cx="4" cy="8" r="1.4" fill="#f2f5f2" stroke="#cfdccf" stroke-width="0.7"/><circle cx="8.5" cy="20.5" r="1.4" fill="#f2f5f2" stroke="#cfdccf" stroke-width="0.7"/><circle cx="16.5" cy="3.5" r="1.4" fill="#f2f5f2" stroke="#cfdccf" stroke-width="0.7"/><circle cx="21" cy="3.5" r="1.4" fill="#f2f5f2" stroke="#cfdccf" stroke-width="0.7"/><circle cx="12" cy="11.5" r="1.4" fill="#f2f5f2" stroke="#cfdccf" stroke-width="0.7"/><rect x="12.5" y="12.5" width="11" height="11" rx="2" fill="#c0c4ca"/><path d="M15.0 19.8A3.2 3.2 0 1 1 18.0 21.7" fill="none" stroke="#fff" stroke-width="1.5"/><path d="M13.0 18.8L15.0 21.5L17.0 18.8Z" fill="#fff"/></svg></div>
<div class="ic" style="left:1541.0px;top:144.5px;width:24px;height:24px"><svg width="24" height="24" viewBox="0 0 24 24"><path d="M1.5 4.5Q5 1.5 11 4Q17 6.5 22.5 3V14Q17 17.5 11 15Q5 12.5 1.5 16Z" fill="#e4e6e4" stroke="#cbcdcb" stroke-width="1"/><path d="M1.5 16Q7 19.5 12 15.3" fill="none" stroke="#cbcdcb" stroke-width="0.9"/><text x="19.5" y="23" text-anchor="middle" font-family="DejaVu Serif,Liberation Serif,serif" font-size="9.5" fill="#b8b8b8">∫</text></svg></div>
<div class="ic" style="left:1574.0px;top:144.5px;width:24px;height:24px"><svg width="24" height="24" viewBox="0 0 24 24"><path d="M1.5 4.5Q5 1.5 11 4Q17 6.5 22.5 3V14Q17 17.5 11 15Q5 12.5 1.5 16Z" fill="#e4e6e4" stroke="#cbcdcb" stroke-width="1"/><path d="M1.5 16Q7 19.5 12 15.3" fill="none" stroke="#cbcdcb" stroke-width="0.9"/><text x="19.5" y="23" text-anchor="middle" font-family="DejaVu Serif,Liberation Serif,serif" font-size="9.5" fill="#b8b8b8">d</text></svg></div>
<div class="ic" style="left:1607.0px;top:144.5px;width:24px;height:24px"><svg width="24" height="24" viewBox="0 0 24 24"><path d="M1.5 4.5Q5 1.5 11 4Q17 6.5 22.5 3V14Q17 17.5 11 15Q5 12.5 1.5 16Z" fill="#e4e6e4" stroke="#cbcdcb" stroke-width="1"/><path d="M1.5 16Q7 19.5 12 15.3" fill="none" stroke="#cbcdcb" stroke-width="0.9"/><text x="19.5" y="23" text-anchor="middle" font-family="DejaVu Serif,Liberation Serif,serif" font-size="9.5" fill="#b8b8b8">∫</text></svg></div>
<div class="ic" style="left:1640.5px;top:144.5px;width:24px;height:24px"><svg width="24" height="24" viewBox="0 0 24 24"><g transform="rotate(38 12 12)"><rect x="2" y="6.5" width="20" height="11" fill="#dfe1d6"/><path d="M2 12H22" stroke="#f4f4f4" stroke-width="1.4"/><path d="M2 10H22M2 14H22" stroke="#cfd1c6" stroke-width="0.6" stroke-dasharray="1.5 1.2"/></g></svg></div>
<svg class="ic" style="left:1136.0px;top:155.5px" width="7" height="4"><path d="M0 0H7L3.5 4Z" fill="#cdcdcd"/></svg>
<svg class="ic" style="left:1313.5px;top:155.5px" width="7" height="4"><path d="M0 0H7L3.5 4Z" fill="#cdcdcd"/></svg>
<svg class="ic" style="left:1358.5px;top:155.5px" width="7" height="4"><path d="M0 0H7L3.5 4Z" fill="#cdcdcd"/></svg>
<svg class="ic" style="left:1403.5px;top:155.5px" width="7" height="4"><path d="M0 0H7L3.5 4Z" fill="#cdcdcd"/></svg>
<svg class="ic" style="left:1448.5px;top:155.5px" width="7" height="4"><path d="M0 0H7L3.5 4Z" fill="#cdcdcd"/></svg>
<svg class="ic" style="left:1526.5px;top:155.5px" width="7" height="4"><path d="M0 0H7L3.5 4Z" fill="#cdcdcd"/></svg>
<svg class="ic" style="left:6px;top:188px" width="5" height="17" shape-rendering="crispEdges"><path d="M1 1h1v1h-1zM4 1h1v1h-1zM1 4h1v1h-1zM4 4h1v1h-1zM1 7h1v1h-1zM4 7h1v1h-1zM1 10h1v1h-1zM4 10h1v1h-1zM1 13h1v1h-1zM4 13h1v1h-1zM1 16h1v1h-1zM4 16h1v1h-1z" fill="#fbfbfb"/><path d="M0 0h1v1h-1zM3 0h1v1h-1zM0 3h1v1h-1zM3 3h1v1h-1zM0 6h1v1h-1zM3 6h1v1h-1zM0 9h1v1h-1zM3 9h1v1h-1zM0 12h1v1h-1zM3 12h1v1h-1zM0 15h1v1h-1zM3 15h1v1h-1z" fill="#b9b9b9"/></svg>
<svg class="ic" style="left:24px;top:188px" width="5" height="17" shape-rendering="crispEdges"><path d="M1 1h1v1h-1zM4 1h1v1h-1zM1 4h1v1h-1zM4 4h1v1h-1zM1 7h1v1h-1zM4 7h1v1h-1zM1 10h1v1h-1zM4 10h1v1h-1zM1 13h1v1h-1zM4 13h1v1h-1zM1 16h1v1h-1zM4 16h1v1h-1z" fill="#fbfbfb"/><path d="M0 0h1v1h-1zM3 0h1v1h-1zM0 3h1v1h-1zM3 3h1v1h-1zM0 6h1v1h-1zM3 6h1v1h-1zM0 9h1v1h-1zM3 9h1v1h-1zM0 12h1v1h-1zM3 12h1v1h-1zM0 15h1v1h-1zM3 15h1v1h-1z" fill="#b9b9b9"/></svg>
<div class="ic" style="left:33.7px;top:183.5px;width:24px;height:24px"><svg width="24" height="24" viewBox="0 0 24 24"><path d="M4.5 2V20.5H22" fill="none" stroke="#6a6a6a" stroke-width="1.2"/><path d="M4.5 0.8L6.3 3.6H2.7Z M23.2 20.5L20.4 18.7V22.3Z" fill="#6a6a6a"/><path d="M6 6.5H8M6 10H8M6 13.5H8M6 17H8M8 19H8.1M11 19H11.1M14 19H14.1M17 19H17.1" stroke="#bdbdbd" stroke-width="0.6"/><path d="M7 14.5Q12 13.5 14 9.5Q16 5 21 3.5" fill="none" stroke="#b5179e" stroke-width="1.5"/><path d="M7 17Q11 16.5 14 14Q17 11.5 21 13" fill="none" stroke="#2a9d9d" stroke-width="1.2"/></svg></div>
<div style="left:1px;top:215px;width:39px;height:808px;background:linear-gradient(90deg,#f6f6f6,#ebebeb);border-right:1px solid #b8b8b8"></div>
<svg class="ic" style="left:14px;top:221px" width="18" height="5" shape-rendering="crispEdges"><path d="M0 0h1v1h-1zM0 3h1v1h-1zM3 0h1v1h-1zM3 3h1v1h-1zM6 0h1v1h-1zM6 3h1v1h-1zM9 0h1v1h-1zM9 3h1v1h-1zM12 0h1v1h-1zM12 3h1v1h-1zM15 0h1v1h-1zM15 3h1v1h-1z" fill="#b9b9b9"/></svg>
<div class="ic" style="left:9.0px;top:231.5px;width:24px;height:24px"><svg width="24" height="24" viewBox="0 0 24 24"><g transform="rotate(-18 10 13)"><rect x="2" y="6" width="12" height="12" fill="#d2622a" stroke="#a84818" stroke-width="0.5"/></g><g transform="rotate(-6 11 12)"><rect x="4.5" y="4.5" width="12" height="12" fill="#f1c232" stroke="#c99a12" stroke-width="0.5"/></g><g transform="rotate(10 14 9)"><rect x="8" y="1.5" width="13" height="13" fill="#6a96c8" stroke="#3f6ea8" stroke-width="0.6"/></g><rect x="14.5" y="15" width="8.5" height="8.5" rx="1.5" fill="#58a25a" stroke="#3a7a3c" stroke-width="0.5"/><path d="M18.75 16.7V21.8M16.2 19.25H21.3" stroke="#fff" stroke-width="1.7"/></svg></div>
<div class="ic" style="left:9.0px;top:263.5px;width:24px;height:24px"><svg width="24" height="24" viewBox="0 0 24 24"><path d="M2 10.5L11 14.5V24L2 19.5Z" fill="#c9a400" stroke="#8a7000" stroke-width="0.6"/><path d="M11 14.5L22 10.5V19.5L11 24Z" fill="#f6e23a" stroke="#8a7000" stroke-width="0.6"/><path d="M2 10.5L12 7L22 10.5L11 14.5Z" fill="#fbec6a" stroke="#8a7000" stroke-width="0.6"/><circle cx="12" cy="7.5" r="6.8" fill="#7aa6d8" stroke="#3a6aa8" stroke-width="0.8"/><path d="M7.5 5L10 3.5L11.5 6L9.5 9L7 7.5Z M13.5 4L16.5 4.5L17 8L14.5 10L12.8 7Z M10 10.5L12.5 10L13 12.5L11 13.5Z" fill="#2a5a9a"/><rect x="14.5" y="14.5" width="9" height="9" rx="1.6" fill="#c6a300"/><g stroke="#fff" stroke-width="1.1" stroke-linecap="round"><path d="M16.1 19.0L21.9 19.0"/><path d="M17.6 16.5L20.4 21.5"/><path d="M20.4 16.5L17.6 21.5"/></g></svg></div>
<div class="ic" style="left:9.0px;top:295.5px;width:24px;height:24px"><svg width="24" height="24" viewBox="0 0 24 24"><path d="M2.5 3.5L9 17.5L15 4.5L21.5 3.5" fill="none" stroke="#3a3a3a" stroke-width="1"/><circle cx="2.5" cy="3.5" r="1.7" fill="#fff" stroke="#4a4a4a" stroke-width="0.8"/><circle cx="9" cy="17.5" r="1.7" fill="#fff" stroke="#4a4a4a" stroke-width="0.8"/><circle cx="15" cy="4.5" r="1.7" fill="#fff" stroke="#4a4a4a" stroke-width="0.8"/><circle cx="21.5" cy="3.5" r="1.7" fill="#fff" stroke="#4a4a4a" stroke-width="0.8"/><rect x="14.5" y="14.5" width="9" height="9" rx="1.6" fill="#c6a300"/><g stroke="#fff" stroke-width="1.1" stroke-linecap="round"><path d="M16.1 19.0L21.9 19.0"/><path d="M17.6 16.5L20.4 21.5"/><path d="M20.4 16.5L17.6 21.5"/></g></svg></div>
<div class="ic" style="left:9.0px;top:328.0px;width:24px;height:24px"><svg width="24" height="24" viewBox="0 0 24 24"><path d="M22.5 1Q10 3 5.5 13.5Q4 18 3 23" fill="none" stroke="#3d6aa3" stroke-width="1"/><path d="M22.5 1Q21 8 15.5 12Q11 15 5 15.5Q5.5 9 11 5Q16 1.5 22.5 1Z" fill="#6a96c8" stroke="#3d6aa3" stroke-width="0.7"/><path d="M5 15.5Q12 12 22.5 1" fill="none" stroke="#c8daee" stroke-width="0.8"/><rect x="14.5" y="14.5" width="9" height="9" rx="1.6" fill="#c6a300"/><g stroke="#fff" stroke-width="1.1" stroke-linecap="round"><path d="M16.1 19.0L21.9 19.0"/><path d="M17.6 16.5L20.4 21.5"/><path d="M20.4 16.5L17.6 21.5"/></g></svg></div>
<div class="ic" style="left:9.0px;top:360.5px;width:24px;height:24px"><svg width="24" height="24" viewBox="0 0 24 24"><path d="M5 3V7M5 15.5V19.5" stroke="#2d4a7a" stroke-width="1.1"/><path d="M7.5 3V7M7.5 15.5V19.5" stroke="#2d4a7a" stroke-width="1.1"/><path d="M10 3V7M10 15.5V19.5" stroke="#2d4a7a" stroke-width="1.1"/><path d="M12.5 3V7M12.5 15.5V19.5" stroke="#2d4a7a" stroke-width="1.1"/><path d="M15 3V7M15 15.5V19.5" stroke="#2d4a7a" stroke-width="1.1"/><path d="M17.5 3V7M17.5 15.5V19.5" stroke="#2d4a7a" stroke-width="1.1"/><rect x="2.5" y="6.5" width="17.5" height="9.5" rx="1" fill="#5b8cc7" stroke="#2d4a7a" stroke-width="0.9"/><rect x="14.5" y="14.5" width="9" height="9" rx="1.6" fill="#c6a300"/><g stroke="#fff" stroke-width="1.1" stroke-linecap="round"><path d="M16.1 19.0L21.9 19.0"/><path d="M17.6 16.5L20.4 21.5"/><path d="M20.4 16.5L17.6 21.5"/></g></svg></div>
<div class="ic" style="left:9.0px;top:399.0px;width:24px;height:24px"><svg width="24" height="24" viewBox="0 0 24 24"><path d="M2 4.5Q2 1.5 5 1.5H19Q22 1.5 22 4.5V17Q22 22 17 22H5Q2 22 2 19Z" fill="#8fb3dc" stroke="#3d6aa3" stroke-width="0.9"/><path d="M4.5 3.5L9 18L15 4.5L20.5 3.5" fill="none" stroke="#2a2a2a" stroke-width="0.9"/><circle cx="4.5" cy="3.5" r="1.6" fill="#fff" stroke="#3a3a3a" stroke-width="0.8"/><circle cx="9" cy="18" r="1.6" fill="#fff" stroke="#3a3a3a" stroke-width="0.8"/><circle cx="15" cy="4.5" r="1.6" fill="#fff" stroke="#3a3a3a" stroke-width="0.8"/><circle cx="20.5" cy="3.5" r="1.6" fill="#fff" stroke="#3a3a3a" stroke-width="0.8"/><rect x="14.5" y="14.5" width="9" height="9" rx="1.6" fill="#c6a300"/><g stroke="#fff" stroke-width="1.1" stroke-linecap="round"><path d="M16.1 19.0L21.9 19.0"/><path d="M17.6 16.5L20.4 21.5"/><path d="M20.4 16.5L17.6 21.5"/></g></svg></div>
<div style="left:10px;top:392px;width:21px;height:1px;background:#c4c4c4"></div>
<span class="t" style="left:45px;top:217.50px;font-size:13px;">Layers</span>
<div class="ic" style="left:364.5px;top:219.5px;width:12px;height:12px"><svg width="12" height="12" viewBox="0 0 24 24"><rect x="1.5" y="1.5" width="21" height="21" rx="5" fill="none" stroke="#6e6b67" stroke-width="2"/><rect x="10" y="6" width="8.5" height="8.5" rx="2" fill="none" stroke="#6e6b67" stroke-width="2"/><rect x="5.5" y="10.5" width="8.5" height="8.5" rx="2" fill="#f4f4f4" stroke="#6e6b67" stroke-width="2"/></svg></div>
<div class="ic" style="left:378.5px;top:219.5px;width:12px;height:12px"><svg width="12" height="12" viewBox="0 0 24 24"><rect x="1.5" y="1.5" width="21" height="21" rx="5" fill="none" stroke="#6e6b67" stroke-width="2"/><path d="M6.5 6.5L17.5 17.5M17.5 6.5L6.5 17.5" stroke="#4e4b47" stroke-width="3.4"/></svg></div>
<div class="pressed" style="left:45px;top:239px;width:24px;height:23px;"></div>
<div class="ic" style="left:49.0px;top:242.5px;width:16px;height:16px"><svg width="16" height="16" viewBox="0 0 24 24"><path d="M2 13L8 5L16 9L10 18Z" fill="#e8d23a"/><path d="M2 13L5 9L12 13L9 17.5Z" fill="#6a9fd8"/><path d="M2 13L10 18L9 21L1.5 16Z" fill="#d8404a"/><path d="M22 2L13.5 11" stroke="#c88a3a" stroke-width="2.4" stroke-linecap="round"/><path d="M11 9L16 13.5L12.5 19.5L6.5 14.5Z" fill="#d8b47a" stroke="#a8844a" stroke-width="0.7"/></svg></div>
<div class="ic" style="left:74.0px;top:242.5px;width:16px;height:16px"><svg width="16" height="16" viewBox="0 0 24 24"><rect x="2" y="8.5" width="12" height="12" fill="none" stroke="#6a6a6a" stroke-width="1.2"/><rect x="5" y="5.5" width="12" height="12" fill="#f2f2f2" stroke="#6a6a6a" stroke-width="1.2"/><path d="M9 13V4.5Q9 1.5 11.5 1.5T14 4.5V12" fill="none" stroke="#3d6aa3" stroke-width="1.5"/><path d="M11.5 5V13.5" stroke="#3d6aa3" stroke-width="1.3"/><circle cx="18" cy="18.5" r="4.6" fill="#58a25a"/><circle cx="18" cy="18.5" r="2" fill="#fff"/></svg></div>
<div class="ic" style="left:100.0px;top:242.5px;width:16px;height:16px"><svg width="16" height="16" viewBox="0 0 24 24"><path d="M1 11Q6 3.5 13 4Q19 4.5 22 10" fill="none" stroke="#bdbdbd" stroke-width="1"/><path d="M1.5 11.5Q7 4.5 13.5 5.5Q19 7 21.5 12Q17 19 10.5 17.5Q5 16 1.5 11.5Z" fill="#f4f4f4" stroke="#9a9a9a" stroke-width="0.9"/><circle cx="11.5" cy="11" r="5" fill="#6a96c8" stroke="#3d6aa3" stroke-width="0.6"/><circle cx="11" cy="10" r="2" fill="#1a1a2a"/><circle cx="12.5" cy="9" r="0.9" fill="#fff"/><path d="M15.5 19H23L19.2 23Z" fill="#4a4a4a"/></svg></div>
<div class="ic" style="left:123.5px;top:242.5px;width:16px;height:16px"><svg width="16" height="16" viewBox="0 0 24 24"><path d="M2 4H22L14 13.5V20.5L10 22.5V13.5Z" fill="#6a9fd8" stroke="#3d6aa3" stroke-width="0.8"/><path d="M2 2.5H22V5.5H2Z" fill="#f1d03a" stroke="#c9a80e" stroke-width="0.5"/></svg></div>
<div class="ic" style="left:149.5px;top:242.5px;width:16px;height:16px"><svg width="16" height="16" viewBox="0 0 24 24"><text x="0" y="16.5" font-family="DejaVu Serif,Liberation Serif,serif" font-size="27" fill="#5d2a7a">ε</text><path d="M13 14H24L20.5 18.5V24H16.5V18.5Z" fill="#c8c8c8" stroke="#9a9a9a" stroke-width="0.7"/></svg></div>
<div class="ic" style="left:186.5px;top:242.5px;width:16px;height:16px"><svg width="16" height="16" viewBox="0 0 24 24"><path d="M4 2.5V21M4 7H8M4 16H8" fill="none" stroke="#9a9a9a" stroke-width="0.8" stroke-dasharray="1 1"/><rect x="7" y="4.5" width="4.5" height="4.5" fill="#fff" stroke="#f5921e" stroke-width="1.3"/><rect x="7" y="14" width="4.5" height="4.5" fill="#fff" stroke="#f5921e" stroke-width="1.3"/><path d="M3.5 2.5H10" stroke="#9a9a9a" stroke-width="0.8"/><path d="M14 1.5H20V12H23.5L17 22L10.5 12H14Z" fill="#5b8cc7" stroke="#3d6aa3" stroke-width="0.7"/></svg></div>
<div class="ic" style="left:211.5px;top:242.5px;width:16px;height:16px"><svg width="16" height="16" viewBox="0 0 24 24"><path d="M4 2.5V21M4 7H8M4 16H8" fill="none" stroke="#9a9a9a" stroke-width="0.8" stroke-dasharray="1 1"/><rect x="7" y="4.5" width="4.5" height="4.5" fill="#fff" stroke="#f5921e" stroke-width="1.3"/><rect x="7" y="14" width="4.5" height="4.5" fill="#fff" stroke="#f5921e" stroke-width="1.3"/><path d="M3.5 2.5H10" stroke="#9a9a9a" stroke-width="0.8"/><path d="M14 22H20V11.5H23.5L17 1.5L10.5 11.5H14Z" fill="#5b8cc7" stroke="#3d6aa3" stroke-width="0.7"/></svg></div>
<div class="ic" style="left:236.0px;top:242.5px;width:16px;height:16px"><svg width="16" height="16" viewBox="0 0 24 24"><rect x="2.5" y="2" width="17" height="17" fill="#fbfbfb" stroke="#5a5a5a" stroke-width="1.1"/><rect x="13.5" y="14.5" width="9.5" height="8" rx="2" fill="#e01b24"/><path d="M15.5 18.5H21" stroke="#fff" stroke-width="1.6"/></svg></div>
<svg class="ic" style="left:171.5px;top:248.0px" width="7" height="4"><path d="M0 0H7L3.5 4Z" fill="#4a4a4a"/></svg>
<div style="left:41px;top:266px;width:351px;height:728px;background:#fff;border:1px solid #b4b4b4"></div>
<div class="cb" style="left:65px;top:269.5px;width:13px;height:13px;"></div>
<svg class="ic" style="left:65px;top:269.5px" width="13" height="13"><path d="M3 6.6L5.6 10L10.3 2.6" fill="none" stroke="#000" stroke-width="1.7"/></svg>
<div style="left:85px;top:268px;width:16px;height:16px;background:#fff;border:1px solid #333"></div>
<span class="t" style="left:107.5px;top:268.50px;font-size:13px;font-weight:bold;">Grid</span>
<div style="left:369px;top:267px;width:21px;height:18px;background:#f4f4f4"></div>
<div class="ic" style="left:370.0px;top:268.5px;width:15px;height:15px"><svg width="15" height="15" viewBox="0 0 24 24"><path d="M5.5 3.5V7.5M5.5 16.5V20.5" stroke="#7a7a7a" stroke-width="1.3"/><path d="M9.8 3.5V7.5M9.8 16.5V20.5" stroke="#7a7a7a" stroke-width="1.3"/><path d="M14.2 3.5V7.5M14.2 16.5V20.5" stroke="#7a7a7a" stroke-width="1.3"/><path d="M18.5 3.5V7.5M18.5 16.5V20.5" stroke="#7a7a7a" stroke-width="1.3"/><rect x="2" y="7" width="20" height="10" rx="2" fill="#f8f8f8" stroke="#7a7a7a" stroke-width="1.5"/></svg></div>
<div class="cb" style="left:65px;top:288.5px;width:13px;height:13px;"></div>
<svg class="ic" style="left:85px;top:287px" width="16" height="16"><circle cx="8" cy="8" r="6.4" fill="#4caf50" stroke="#3a8a3d" stroke-width="0.8"/></svg>
<span class="t" style="left:107.5px;top:287.50px;font-size:13px;font-weight:bold;font-style:italic;color:#808080;">Centroids</span>
<div style="left:369px;top:286px;width:21px;height:18px;background:#f4f4f4"></div>
<div class="ic" style="left:370.0px;top:287.5px;width:15px;height:15px"><svg width="15" height="15" viewBox="0 0 24 24"><path d="M5.5 3.5V7.5M5.5 16.5V20.5" stroke="#7a7a7a" stroke-width="1.3"/><path d="M9.8 3.5V7.5M9.8 16.5V20.5" stroke="#7a7a7a" stroke-width="1.3"/><path d="M14.2 3.5V7.5M14.2 16.5V20.5" stroke="#7a7a7a" stroke-width="1.3"/><path d="M18.5 3.5V7.5M18.5 16.5V20.5" stroke="#7a7a7a" stroke-width="1.3"/><rect x="2" y="7" width="20" height="10" rx="2" fill="#f8f8f8" stroke="#7a7a7a" stroke-width="1.5"/></svg></div>
<div class="cb" style="left:65px;top:307.5px;width:13px;height:13px;"></div>
<svg class="ic" style="left:65px;top:307.5px" width="13" height="13"><path d="M3 6.6L5.6 10L10.3 2.6" fill="none" stroke="#000" stroke-width="1.7"/></svg>
<svg class="ic" style="left:85px;top:306px" width="16" height="16"><circle cx="8" cy="8" r="3.4" fill="#4a7ebb" stroke="#2f5d94" stroke-width="0.8"/></svg>
<span class="t" style="left:107.5px;top:306.50px;font-size:13px;font-weight:bold;">Random points</span>
<div style="left:369px;top:305px;width:21px;height:18px;background:#f4f4f4"></div>
<div class="ic" style="left:370.0px;top:306.5px;width:15px;height:15px"><svg width="15" height="15" viewBox="0 0 24 24"><path d="M5.5 3.5V7.5M5.5 16.5V20.5" stroke="#7a7a7a" stroke-width="1.3"/><path d="M9.8 3.5V7.5M9.8 16.5V20.5" stroke="#7a7a7a" stroke-width="1.3"/><path d="M14.2 3.5V7.5M14.2 16.5V20.5" stroke="#7a7a7a" stroke-width="1.3"/><path d="M18.5 3.5V7.5M18.5 16.5V20.5" stroke="#7a7a7a" stroke-width="1.3"/><rect x="2" y="7" width="20" height="10" rx="2" fill="#f8f8f8" stroke="#7a7a7a" stroke-width="1.5"/></svg></div>
<div class="cb" style="left:65px;top:326.5px;width:13px;height:13px;"></div>
<div style="left:85px;top:325px;width:16px;height:16px;background:#cdc1ae;border:1px solid #333"></div>
<span class="t" style="left:107.5px;top:325.50px;font-size:13px;font-weight:bold;font-style:italic;color:#808080;">Voronoi</span>
<div style="left:369px;top:324px;width:21px;height:18px;background:#f4f4f4"></div>
<div class="ic" style="left:370.0px;top:325.5px;width:15px;height:15px"><svg width="15" height="15" viewBox="0 0 24 24"><path d="M5.5 3.5V7.5M5.5 16.5V20.5" stroke="#7a7a7a" stroke-width="1.3"/><path d="M9.8 3.5V7.5M9.8 16.5V20.5" stroke="#7a7a7a" stroke-width="1.3"/><path d="M14.2 3.5V7.5M14.2 16.5V20.5" stroke="#7a7a7a" stroke-width="1.3"/><path d="M18.5 3.5V7.5M18.5 16.5V20.5" stroke="#7a7a7a" stroke-width="1.3"/><rect x="2" y="7" width="20" height="10" rx="2" fill="#f8f8f8" stroke="#7a7a7a" stroke-width="1.5"/></svg></div>
<div style="left:42px;top:343px;width:349px;height:19px;background:#308cc6"></div>
<div style="left:387px;top:345px;width:2px;height:15px;background:#e8f1f8"></div>
<div class="cb" style="left:65px;top:345.5px;width:13px;height:13px;"></div>
<svg class="ic" style="left:65px;top:345.5px" width="13" height="13"><path d="M3 6.6L5.6 10L10.3 2.6" fill="none" stroke="#000" stroke-width="1.7"/></svg>
<div style="left:85px;top:344px;width:16px;height:16px;background:#8fc0de"></div>
<span class="t" style="left:107.5px;top:344.50px;font-size:13px;font-weight:bold;color:#fff;text-decoration:underline;text-underline-offset:2px;">PHL_municities_Albay</span>
<div style="left:41px;top:995px;width:351px;height:1px;background:#c2c2c2"></div>
<div style="left:108px;top:996px;width:78px;height:24px;background:#dcdcdc;border:1px solid #c0c0c0;border-top:none;border-radius:0 0 3px 3px"></div>
<div style="left:41px;top:995px;width:68px;height:27px;background:linear-gradient(#efefef,#f8f8f8);border:1px solid #b9b9b9;border-top:none;border-radius:0 0 4px 4px"></div>
<span class="t" style="left:52.5px;top:1001.00px;font-size:13px;">Layers</span>
<span class="t" style="left:120.5px;top:1000.00px;font-size:13px;">Browser</span>
<div style="left:398px;top:216px;width:1065px;height:807px;background:#fff;border:1px solid #b0b0b0"></div>
<div style="left:395px;top:613px;width:1px;height:1px;background:#ababab"></div>
<div style="left:395px;top:616px;width:1px;height:1px;background:#ababab"></div>
<div style="left:395px;top:619px;width:1px;height:1px;background:#ababab"></div>
<div style="left:395px;top:622px;width:1px;height:1px;background:#ababab"></div>
<div style="left:395px;top:625px;width:1px;height:1px;background:#ababab"></div>
<div style="left:395px;top:628px;width:1px;height:1px;background:#ababab"></div>
<div style="left:1466px;top:613px;width:1px;height:1px;background:#ababab"></div>
<div style="left:1466px;top:616px;width:1px;height:1px;background:#ababab"></div>
<div style="left:1466px;top:619px;width:1px;height:1px;background:#ababab"></div>
<div style="left:1466px;top:622px;width:1px;height:1px;background:#ababab"></div>
<div style="left:1466px;top:625px;width:1px;height:1px;background:#ababab"></div>
<div style="left:1466px;top:628px;width:1px;height:1px;background:#ababab"></div>
<svg class="ic" style="left:399px;top:217px" width="1063" height="805" viewBox="399 217 1063 805"><path d="M493.7 561.0L495.0 557.3L505.0 552.3L517.5 546.0L525.0 542.3L533.7 536.8L542.4 531.0L552.4 524.3L559.9 519.8L562.4 523.5L566.2 527.8L572.4 529.8L579.9 527.3L586.1 521.0L589.1 514.8L588.6 504.8L586.1 499.8L591.1 492.3L597.4 494.8L602.4 501.1L604.1 492.3L607.4 487.8L614.9 483.6L623.6 481.1L629.8 477.3L639.8 471.1L647.3 469.8L654.8 468.6L659.8 466.8L666.1 469.8L673.5 472.8L676.0 468.6L677.3 472.8L687.3 469.8L697.3 467.3L704.8 461.1L712.3 456.9L722.2 456.1L732.2 451.1L741.0 446.1L749.7 442.4L758.5 441.1L762.2 436.1L764.7 419.9L766.7 407.4L767.2 397.4L762.2 392.4L757.2 386.2L751.0 381.2L742.2 373.7L734.7 367.5L729.7 357.5L727.2 347.5L729.7 338.7L736.0 333.0L744.7 331.2L759.7 330.0L777.2 328.7L779.7 332.5L785.9 341.2L794.7 350.0L800.9 357.5L809.7 362.5L824.6 365.0L834.6 369.9L840.9 367.5L847.1 373.7L852.1 384.9L859.6 392.4L864.6 402.4L869.6 412.4L874.6 419.9L876.3 424.9L874.6 429.9L882.1 437.4L889.6 449.9L893.3 464.8L895.8 479.8L899.6 494.8L900.0 506.3L909.5 507.6L919.0 510.6L928.4 514.2L935.1 518.6L937.9 524.3L945.5 529.0L955.0 531.8L960.7 536.6L965.4 543.2L969.2 550.8L974.9 550.8L979.6 552.7L987.2 550.8L992.9 547.0L994.8 541.3L993.8 533.7L994.8 526.2L996.7 518.6L997.6 515.7L1004.3 513.8L1003.3 511.0L998.6 505.3L992.9 499.6L986.3 494.9L989.1 482.6L996.7 479.3L1006.2 480.7L1013.7 483.5L1023.2 485.4L1032.7 490.1L1042.2 491.1L1046.0 493.0L1044.1 495.8L1049.8 497.7L1051.7 500.6L1059.2 500.6L1064.9 503.4L1065.9 507.2L1063.0 512.9L1061.1 518.6L1057.3 522.4L1051.7 521.4L1046.0 525.2L1042.2 531.8L1039.3 535.6L1035.5 541.3L1030.8 544.2L1027.0 547.0L1028.9 552.7L1032.7 558.4L1039.3 562.2L1042.2 567.9L1045.0 573.6L1048.8 581.1L1044.1 584.9L1039.3 582.1L1035.5 588.7L1030.8 592.5L1023.2 595.4L1017.5 595.4L1006.2 594.4L994.8 592.5L985.3 589.7L977.7 586.8L970.1 584.9L962.6 584.0L955.0 584.9L947.4 586.4L942.0 583.0L932.0 590.5L924.5 600.5L919.5 613.0L915.8 628.0L912.4 640.0L914.1 650.2L915.8 663.9L918.4 669.9L922.7 675.8L929.5 680.1L936.3 679.3L935.5 684.4L939.7 689.5L939.7 696.3L936.3 703.1L932.9 708.3L931.2 715.1L929.5 717.7L924.4 715.1L917.5 714.2L911.6 716.0L912.4 718.5L919.3 720.2L919.3 723.6L921.8 728.8L920.1 733.0L915.8 734.7L911.6 737.3L916.7 738.1L918.4 742.4L924.4 746.7L931.2 750.1L939.7 752.6L948.3 754.0L955.1 751.8L959.4 746.7L963.6 740.7L967.9 737.3L973.0 732.2L978.1 727.0L982.4 721.9L985.0 716.0L983.3 710.0L985.8 704.9L986.7 697.2L990.9 695.5L999.5 697.2L1003.7 692.9L1005.4 687.8L1008.9 683.5L1008.0 680.1L1006.3 675.8L1008.0 671.6L1014.8 669.9L1021.7 667.3L1028.5 668.2L1037.0 669.0L1043.8 669.9L1048.1 674.1L1049.0 682.7L1054.1 686.1L1060.9 686.1L1067.7 685.2L1074.6 689.5L1070.3 696.3L1065.2 704.9L1060.9 713.4L1058.4 721.9L1056.6 730.5L1054.9 740.7L1052.4 749.2L1048.1 756.1L1043.0 759.5L1035.3 761.5L1028.5 760.3L1021.7 758.6L1013.1 758.6L1002.9 760.3L994.4 762.9L985.8 767.2L977.3 771.4L968.8 775.7L960.2 779.1L951.7 783.4L945.7 788.5L940.6 793.6L939.7 798.7L934.6 801.3L929.5 805.6L925.2 808.1L921.8 804.7L919.3 799.6L914.1 797.0L907.3 797.9L900.5 788.5L895.4 776.5L888.5 774.8L880.0 774.0L874.6 773.3L862.1 774.1L849.6 772.8L839.6 774.1L829.6 777.8L814.7 780.3L808.4 785.3L803.4 786.5L799.7 781.5L794.7 779.0L787.2 777.8L774.7 777.8L764.7 776.5L757.2 772.8L749.7 771.6L739.7 774.1L729.7 775.3L719.8 779.0L709.8 782.8L699.8 787.8L689.8 792.8L679.8 796.5L676.0 800.3L672.5 806.1L668.3 801.9L663.1 797.8L657.9 792.6L653.7 785.3L650.6 779.0L646.4 773.8L641.2 771.2L636.0 769.6L630.8 765.5L625.6 761.8L620.3 761.3L615.1 759.2L609.9 756.6L605.7 757.1L603.7 759.7L598.4 762.3L597.9 765.5L595.3 766.5L593.2 762.3L585.9 761.8L579.7 763.4L576.5 767.5L576.5 771.7L573.4 773.8L568.2 778.0L563.0 779.0L558.8 782.1L552.6 785.3L549.4 786.3L544.2 785.8L539.0 788.9L534.8 791.5L531.7 790.0L528.6 785.3L525.5 780.1L521.3 773.8L519.2 767.5L516.1 762.3L517.1 758.2L515.0 752.9L510.9 747.7L506.7 746.7L504.6 750.9L503.6 749.8L500.4 748.2L498.3 743.6L506.2 735.3L511.2 722.9L513.7 712.9L511.2 705.4L507.5 695.4L508.7 685.4L505.0 675.4L505.0 665.4L512.5 657.9L521.2 650.4L523.7 642.9L518.7 635.4L520.0 629.2L528.7 626.7L533.7 625.5L537.9 620.5L536.2 613.0L529.9 601.7L523.7 590.5L517.5 583.0Z" fill="#a6cee3" stroke="#a6cee3" stroke-width="0.9" stroke-linejoin="round"/><path d="M919.9 434.2L922.7 431.8L928.4 437.1L936.0 436.1L944.5 439.9L945.5 442.7L955.0 443.7L962.6 447.5L969.2 451.3L973.0 457.0L976.8 460.8L983.4 467.4L989.1 463.6L995.7 464.5L996.7 466.4L991.0 471.2L988.2 476.9L986.3 482.6L983.4 488.2L975.8 484.5L968.2 480.7L960.7 475.9L955.0 471.2L949.3 466.4L943.6 460.8L937.9 455.1L931.3 450.3L926.5 443.7Z" fill="#a6cee3" stroke="#a6cee3" stroke-width="0.9" stroke-linejoin="round"/><path d="M1066.8 509.1L1072.5 505.3L1079.1 509.1L1078.2 514.8L1081.0 520.5L1074.4 523.3L1066.8 522.4L1063.0 518.6L1064.9 513.8Z" fill="#a6cee3" stroke="#a6cee3" stroke-width="0.9" stroke-linejoin="round"/><path d="M1090.5 523.3L1093.4 519.9L1098.1 524.3L1100.4 528.1L1096.2 530.9L1090.5 531.8L1089.6 528.1Z" fill="#a6cee3" stroke="#a6cee3" stroke-width="0.9" stroke-linejoin="round"/><path d="M1047.9 537.5L1057.3 538.5L1066.8 536.6L1076.3 535.3L1084.8 536.0L1091.5 539.4L1099.1 543.2L1105.7 538.5L1110.4 535.6L1107.6 541.3L1108.5 545.1L1112.3 550.8L1115.2 561.2L1119.9 560.3L1121.8 552.7L1123.7 548.9L1120.9 545.1L1121.8 539.4L1130.3 538.5L1138.9 540.4L1146.4 545.1L1152.1 550.8L1151.2 556.5L1152.1 562.2L1157.8 561.2L1159.7 555.5L1165.4 552.7L1160.7 548.9L1158.8 546.1L1165.4 544.7L1173.0 546.1L1180.6 550.8L1186.3 552.7L1195.7 551.8L1205.2 553.6L1207.1 557.4L1212.8 560.3L1210.9 563.1L1201.4 564.1L1191.9 569.8L1184.4 573.6L1186.3 577.3L1190.0 581.1L1184.4 584.9L1178.7 589.7L1173.0 593.5L1174.9 598.2L1171.1 597.3L1165.4 598.2L1155.9 600.1L1146.4 601.0L1137.0 599.1L1127.5 597.3L1119.9 593.5L1118.0 590.6L1108.5 587.8L1097.2 586.8L1085.8 584.9L1078.2 581.1L1070.6 575.5L1064.9 569.8L1057.3 564.1L1051.7 558.4L1049.8 552.7L1051.7 549.9L1055.5 545.1L1051.7 541.3Z" fill="#a6cee3" stroke="#a6cee3" stroke-width="0.9" stroke-linejoin="round"/><path d="M1178.5 609.2L1187.3 606.0L1199.8 605.0L1212.2 599.2L1224.7 594.2L1234.7 590.5L1237.2 585.5L1247.2 584.2L1259.7 588.0L1274.7 591.7L1284.7 595.5L1294.7 598.0L1304.6 603.0L1309.6 610.5L1315.9 620.5L1319.6 632.9L1314.6 640.4L1308.4 642.9L1297.1 640.4L1284.7 636.7L1272.2 632.9L1259.7 629.2L1247.2 626.7L1237.2 629.2L1222.2 628.0L1209.7 623.0L1199.8 616.7L1189.8 611.7Z" fill="#a6cee3" stroke="#a6cee3" stroke-width="0.9" stroke-linejoin="round"/><g fill="#4a7ebb" stroke="#2a5286" stroke-width="1.15"><circle cx="747.7" cy="336.0" r="3.65"/><circle cx="759.0" cy="342.0" r="3.65"/><circle cx="780.9" cy="344.7" r="3.65"/><circle cx="783.9" cy="347.5" r="3.65"/><circle cx="805.9" cy="361.7" r="3.65"/><circle cx="756.7" cy="374.9" r="3.65"/><circle cx="808.9" cy="377.9" r="3.65"/><circle cx="818.9" cy="375.7" r="3.65"/><circle cx="764.0" cy="393.9" r="3.65"/><circle cx="794.9" cy="398.9" r="3.65"/><circle cx="835.9" cy="402.4" r="3.65"/><circle cx="860.9" cy="404.9" r="3.65"/><circle cx="862.9" cy="408.4" r="3.65"/><circle cx="823.9" cy="408.4" r="3.65"/><circle cx="846.9" cy="413.2" r="3.65"/><circle cx="816.9" cy="416.9" r="3.65"/><circle cx="836.9" cy="419.9" r="3.65"/><circle cx="858.9" cy="424.9" r="3.65"/><circle cx="805.9" cy="427.9" r="3.65"/><circle cx="819.9" cy="431.6" r="3.65"/><circle cx="862.9" cy="435.6" r="3.65"/><circle cx="831.9" cy="439.9" r="3.65"/><circle cx="865.8" cy="445.6" r="3.65"/><circle cx="883.8" cy="448.9" r="3.65"/><circle cx="799.9" cy="449.9" r="3.65"/><circle cx="782.7" cy="455.9" r="3.65"/><circle cx="746.7" cy="455.9" r="3.65"/><circle cx="800.9" cy="461.9" r="3.65"/><circle cx="830.9" cy="461.9" r="3.65"/><circle cx="833.9" cy="462.9" r="3.65"/><circle cx="953.8" cy="464.6" r="3.65"/><circle cx="826.6" cy="470.6" r="3.65"/><circle cx="819.9" cy="476.8" r="3.65"/><circle cx="797.9" cy="477.6" r="3.65"/><circle cx="866.8" cy="475.8" r="3.65"/><circle cx="870.8" cy="477.8" r="3.65"/><circle cx="665.1" cy="473.8" r="3.65"/><circle cx="721.7" cy="473.8" r="3.65"/><circle cx="739.7" cy="483.1" r="3.65"/><circle cx="677.8" cy="485.6" r="3.65"/><circle cx="769.7" cy="485.6" r="3.65"/><circle cx="785.9" cy="486.6" r="3.65"/><circle cx="886.8" cy="487.6" r="3.65"/><circle cx="723.0" cy="491.1" r="3.65"/><circle cx="813.9" cy="492.6" r="3.65"/><circle cx="855.9" cy="493.6" r="3.65"/><circle cx="854.4" cy="495.8" r="3.65"/><circle cx="874.8" cy="494.8" r="3.65"/><circle cx="666.1" cy="493.8" r="3.65"/><circle cx="661.8" cy="496.6" r="3.65"/><circle cx="655.8" cy="499.6" r="3.65"/><circle cx="730.0" cy="497.8" r="3.65"/><circle cx="880.8" cy="498.1" r="3.65"/><circle cx="681.8" cy="500.8" r="3.65"/><circle cx="886.8" cy="501.8" r="3.65"/><circle cx="889.8" cy="501.6" r="3.65"/><circle cx="879.6" cy="504.1" r="3.65"/><circle cx="673.8" cy="507.8" r="3.65"/><circle cx="649.8" cy="511.1" r="3.65"/><circle cx="688.8" cy="511.1" r="3.65"/><circle cx="777.7" cy="509.8" r="3.65"/><circle cx="825.6" cy="509.8" r="3.65"/><circle cx="897.8" cy="509.8" r="3.65"/><circle cx="881.6" cy="511.8" r="3.65"/><circle cx="913.8" cy="512.5" r="3.65"/><circle cx="837.6" cy="515.5" r="3.65"/><circle cx="909.8" cy="516.8" r="3.65"/><circle cx="828.9" cy="518.8" r="3.65"/><circle cx="900.8" cy="518.8" r="3.65"/><circle cx="879.6" cy="519.8" r="3.65"/><circle cx="791.9" cy="524.0" r="3.65"/><circle cx="847.9" cy="524.0" r="3.65"/><circle cx="912.8" cy="523.8" r="3.65"/><circle cx="682.8" cy="525.8" r="3.65"/><circle cx="739.0" cy="526.8" r="3.65"/><circle cx="882.6" cy="526.8" r="3.65"/><circle cx="696.8" cy="528.8" r="3.65"/><circle cx="602.9" cy="531.8" r="3.65"/><circle cx="653.8" cy="533.0" r="3.65"/><circle cx="720.7" cy="533.0" r="3.65"/><circle cx="579.9" cy="535.8" r="3.65"/><circle cx="915.8" cy="535.8" r="3.65"/><circle cx="571.9" cy="542.8" r="3.65"/><circle cx="662.8" cy="545.0" r="3.65"/><circle cx="630.8" cy="546.8" r="3.65"/><circle cx="857.9" cy="546.8" r="3.65"/><circle cx="900.8" cy="546.0" r="3.65"/><circle cx="530.9" cy="552.8" r="3.65"/><circle cx="767.7" cy="552.0" r="3.65"/><circle cx="905.8" cy="555.5" r="3.65"/><circle cx="925.8" cy="555.5" r="3.65"/><circle cx="879.8" cy="556.5" r="3.65"/><circle cx="861.9" cy="557.8" r="3.65"/><circle cx="863.9" cy="561.0" r="3.65"/><circle cx="889.8" cy="561.0" r="3.65"/><circle cx="932.8" cy="561.0" r="3.65"/><circle cx="549.9" cy="564.7" r="3.65"/><circle cx="720.7" cy="564.7" r="3.65"/><circle cx="808.9" cy="566.0" r="3.65"/><circle cx="858.9" cy="566.0" r="3.65"/><circle cx="924.8" cy="564.7" r="3.65"/><circle cx="891.8" cy="566.7" r="3.65"/><circle cx="896.8" cy="568.0" r="3.65"/><circle cx="879.8" cy="568.0" r="3.65"/><circle cx="863.9" cy="572.7" r="3.65"/><circle cx="798.9" cy="574.7" r="3.65"/><circle cx="787.9" cy="576.5" r="3.65"/><circle cx="643.8" cy="575.7" r="3.65"/><circle cx="845.9" cy="574.7" r="3.65"/><circle cx="852.9" cy="577.5" r="3.65"/><circle cx="815.9" cy="579.0" r="3.65"/><circle cx="920.8" cy="574.0" r="3.65"/><circle cx="930.8" cy="575.0" r="3.65"/><circle cx="909.8" cy="577.5" r="3.65"/><circle cx="749.7" cy="580.7" r="3.65"/><circle cx="903.8" cy="581.7" r="3.65"/><circle cx="545.9" cy="595.7" r="3.65"/><circle cx="554.9" cy="598.0" r="3.65"/><circle cx="570.9" cy="596.2" r="3.65"/><circle cx="637.8" cy="592.0" r="3.65"/><circle cx="684.8" cy="593.0" r="3.65"/><circle cx="687.8" cy="587.5" r="3.65"/><circle cx="713.8" cy="593.7" r="3.65"/><circle cx="841.9" cy="600.7" r="3.65"/><circle cx="923.8" cy="591.0" r="3.65"/><circle cx="571.9" cy="608.7" r="3.65"/><circle cx="646.8" cy="612.0" r="3.65"/><circle cx="698.8" cy="614.0" r="3.65"/><circle cx="732.0" cy="610.7" r="3.65"/><circle cx="798.9" cy="614.7" r="3.65"/><circle cx="811.9" cy="611.7" r="3.65"/><circle cx="897.8" cy="612.0" r="3.65"/><circle cx="570.9" cy="624.7" r="3.65"/><circle cx="616.1" cy="629.0" r="3.65"/><circle cx="617.1" cy="631.9" r="3.65"/><circle cx="705.8" cy="629.7" r="3.65"/><circle cx="754.7" cy="627.0" r="3.65"/><circle cx="810.9" cy="628.7" r="3.65"/><circle cx="819.6" cy="626.0" r="3.65"/><circle cx="822.1" cy="624.7" r="3.65"/><circle cx="881.8" cy="621.0" r="3.65"/><circle cx="620.1" cy="637.9" r="3.65"/><circle cx="651.8" cy="636.7" r="3.65"/><circle cx="683.8" cy="638.7" r="3.65"/><circle cx="719.8" cy="642.7" r="3.65"/><circle cx="793.9" cy="637.7" r="3.65"/><circle cx="826.9" cy="633.9" r="3.65"/><circle cx="833.9" cy="644.7" r="3.65"/><circle cx="867.8" cy="645.7" r="3.65"/><circle cx="898.8" cy="637.7" r="3.65"/><circle cx="676.8" cy="651.7" r="3.65"/><circle cx="669.8" cy="657.7" r="3.65"/><circle cx="703.8" cy="655.9" r="3.65"/><circle cx="701.8" cy="660.9" r="3.65"/><circle cx="713.8" cy="657.7" r="3.65"/><circle cx="723.0" cy="658.7" r="3.65"/><circle cx="733.0" cy="663.7" r="3.65"/><circle cx="777.7" cy="652.7" r="3.65"/><circle cx="782.7" cy="661.9" r="3.65"/><circle cx="772.9" cy="666.7" r="3.65"/><circle cx="806.9" cy="654.9" r="3.65"/><circle cx="815.9" cy="662.9" r="3.65"/><circle cx="881.8" cy="668.9" r="3.65"/><circle cx="623.9" cy="659.7" r="3.65"/><circle cx="609.9" cy="663.9" r="3.65"/><circle cx="606.9" cy="679.9" r="3.65"/><circle cx="617.1" cy="679.6" r="3.65"/><circle cx="826.9" cy="676.9" r="3.65"/><circle cx="870.8" cy="680.6" r="3.65"/><circle cx="548.9" cy="691.9" r="3.65"/><circle cx="616.9" cy="690.9" r="3.65"/><circle cx="651.8" cy="692.6" r="3.65"/><circle cx="670.8" cy="695.9" r="3.65"/><circle cx="720.7" cy="686.6" r="3.65"/><circle cx="746.7" cy="688.9" r="3.65"/><circle cx="738.0" cy="695.9" r="3.65"/><circle cx="754.7" cy="695.9" r="3.65"/><circle cx="816.9" cy="697.9" r="3.65"/><circle cx="882.8" cy="695.9" r="3.65"/><circle cx="871.8" cy="701.9" r="3.65"/><circle cx="893.8" cy="701.9" r="3.65"/><circle cx="706.8" cy="705.6" r="3.65"/><circle cx="673.8" cy="709.9" r="3.65"/><circle cx="757.7" cy="708.9" r="3.65"/><circle cx="772.9" cy="705.6" r="3.65"/><circle cx="860.9" cy="709.9" r="3.65"/><circle cx="520.0" cy="715.9" r="3.65"/><circle cx="614.9" cy="720.6" r="3.65"/><circle cx="703.8" cy="722.6" r="3.65"/><circle cx="764.7" cy="717.9" r="3.65"/><circle cx="761.7" cy="723.9" r="3.65"/><circle cx="780.9" cy="725.9" r="3.65"/><circle cx="796.9" cy="724.9" r="3.65"/><circle cx="832.9" cy="721.6" r="3.65"/><circle cx="861.9" cy="724.9" r="3.65"/><circle cx="880.8" cy="717.9" r="3.65"/><circle cx="891.8" cy="730.8" r="3.65"/><circle cx="564.9" cy="735.6" r="3.65"/><circle cx="646.8" cy="732.8" r="3.65"/><circle cx="663.8" cy="733.6" r="3.65"/><circle cx="659.8" cy="738.1" r="3.65"/><circle cx="700.8" cy="736.6" r="3.65"/><circle cx="610.9" cy="739.8" r="3.65"/><circle cx="737.0" cy="741.6" r="3.65"/><circle cx="731.0" cy="746.8" r="3.65"/><circle cx="817.9" cy="739.8" r="3.65"/><circle cx="808.9" cy="743.6" r="3.65"/><circle cx="809.9" cy="748.6" r="3.65"/><circle cx="802.9" cy="751.8" r="3.65"/><circle cx="790.9" cy="753.8" r="3.65"/><circle cx="800.9" cy="758.8" r="3.65"/><circle cx="529.9" cy="748.6" r="3.65"/><circle cx="603.9" cy="750.8" r="3.65"/><circle cx="677.8" cy="748.6" r="3.65"/><circle cx="682.8" cy="748.6" r="3.65"/><circle cx="683.8" cy="754.8" r="3.65"/><circle cx="694.8" cy="755.6" r="3.65"/><circle cx="725.7" cy="758.6" r="3.65"/><circle cx="926.8" cy="753.8" r="3.65"/><circle cx="711.8" cy="765.8" r="3.65"/><circle cx="731.0" cy="764.6" r="3.65"/><circle cx="691.8" cy="767.1" r="3.65"/><circle cx="687.8" cy="771.8" r="3.65"/><circle cx="708.8" cy="773.1" r="3.65"/><circle cx="867.8" cy="769.6" r="3.65"/><circle cx="862.9" cy="771.8" r="3.65"/><circle cx="951.8" cy="770.8" r="3.65"/><circle cx="957.0" cy="768.8" r="3.65"/><circle cx="554.9" cy="780.8" r="3.65"/><circle cx="665.8" cy="787.8" r="3.65"/><circle cx="696.8" cy="785.5" r="3.65"/><circle cx="916.8" cy="780.8" r="3.65"/><circle cx="931.8" cy="784.5" r="3.65"/><circle cx="980.0" cy="470.6" r="3.65"/><circle cx="991.0" cy="487.6" r="3.65"/><circle cx="1016.9" cy="492.6" r="3.65"/><circle cx="1023.9" cy="488.8" r="3.65"/><circle cx="1036.9" cy="494.8" r="3.65"/><circle cx="1039.9" cy="497.8" r="3.65"/><circle cx="1035.9" cy="500.8" r="3.65"/><circle cx="1094.1" cy="548.5" r="3.65"/><circle cx="1124.8" cy="543.0" r="3.65"/><circle cx="1135.8" cy="544.8" r="3.65"/><circle cx="1161.8" cy="569.5" r="3.65"/><circle cx="1180.8" cy="567.7" r="3.65"/><circle cx="1081.9" cy="575.7" r="3.65"/><circle cx="1007.0" cy="578.5" r="3.65"/><circle cx="965.0" cy="571.5" r="3.65"/><circle cx="966.0" cy="574.7" r="3.65"/><circle cx="1024.9" cy="590.7" r="3.65"/><circle cx="1152.8" cy="600.0" r="3.65"/><circle cx="1212.0" cy="605.0" r="3.65"/><circle cx="1242.0" cy="599.0" r="3.65"/><circle cx="1299.9" cy="628.0" r="3.65"/><circle cx="1293.9" cy="636.7" r="3.65"/><circle cx="1011.9" cy="672.7" r="3.65"/><circle cx="1042.9" cy="675.9" r="3.65"/><circle cx="1046.9" cy="676.9" r="3.65"/><circle cx="1025.9" cy="686.6" r="3.65"/><circle cx="1035.9" cy="696.9" r="3.65"/><circle cx="1045.9" cy="694.6" r="3.65"/><circle cx="1059.1" cy="695.9" r="3.65"/><circle cx="1044.9" cy="704.9" r="3.65"/><circle cx="1037.9" cy="710.9" r="3.65"/><circle cx="1030.9" cy="718.9" r="3.65"/><circle cx="1049.9" cy="731.8" r="3.65"/><circle cx="1023.9" cy="733.6" r="3.65"/><circle cx="1023.9" cy="736.6" r="3.65"/><circle cx="1036.9" cy="739.8" r="3.65"/><circle cx="1028.9" cy="747.8" r="3.65"/><circle cx="1049.2" cy="751.8" r="3.65"/><circle cx="969.0" cy="745.8" r="3.65"/><circle cx="985.0" cy="750.6" r="3.65"/><circle cx="971.0" cy="753.8" r="3.65"/><circle cx="975.0" cy="756.1" r="3.65"/></g><path d="M464.20 276.37L487.51 236.00L534.13 236.00L557.43 276.37L534.13 316.74L487.51 316.74ZM464.20 357.11L487.51 316.74L534.13 316.74L557.43 357.11L534.13 397.49L487.51 397.49ZM464.20 437.86L487.51 397.49L534.13 397.49L557.43 437.86L534.13 478.23L487.51 478.23ZM464.20 518.60L487.51 478.23L534.13 478.23L557.43 518.60L534.13 558.97L487.51 558.97ZM464.20 599.34L487.51 558.97L534.13 558.97L557.43 599.34L534.13 639.72L487.51 639.72ZM464.20 680.09L487.51 639.72L534.13 639.72L557.43 680.09L534.13 720.46L487.51 720.46ZM464.20 760.83L487.51 720.46L534.13 720.46L557.43 760.83L534.13 801.20L487.51 801.20ZM464.20 841.57L487.51 801.20L534.13 801.20L557.43 841.57L534.13 881.94L487.51 881.94ZM464.20 922.32L487.51 881.94L534.13 881.94L557.43 922.32L534.13 962.69L487.51 962.69ZM534.13 316.74L557.43 276.37L604.05 276.37L627.36 316.74L604.05 357.11L557.43 357.11ZM534.13 397.49L557.43 357.11L604.05 357.11L627.36 397.49L604.05 437.86L557.43 437.86ZM534.13 478.23L557.43 437.86L604.05 437.86L627.36 478.23L604.05 518.60L557.43 518.60ZM534.13 558.97L557.43 518.60L604.05 518.60L627.36 558.97L604.05 599.34L557.43 599.34ZM534.13 639.72L557.43 599.34L604.05 599.34L627.36 639.72L604.05 680.09L557.43 680.09ZM534.13 720.46L557.43 680.09L604.05 680.09L627.36 720.46L604.05 760.83L557.43 760.83ZM534.13 801.20L557.43 760.83L604.05 760.83L627.36 801.20L604.05 841.57L557.43 841.57ZM534.13 881.94L557.43 841.57L604.05 841.57L627.36 881.94L604.05 922.32L557.43 922.32ZM534.13 962.69L557.43 922.32L604.05 922.32L627.36 962.69L604.05 1003.06L557.43 1003.06ZM604.05 276.37L627.36 236.00L673.98 236.00L697.28 276.37L673.98 316.74L627.36 316.74ZM604.05 357.11L627.36 316.74L673.98 316.74L697.28 357.11L673.98 397.49L627.36 397.49ZM604.05 437.86L627.36 397.49L673.98 397.49L697.28 437.86L673.98 478.23L627.36 478.23ZM604.05 518.60L627.36 478.23L673.98 478.23L697.28 518.60L673.98 558.97L627.36 558.97ZM604.05 599.34L627.36 558.97L673.98 558.97L697.28 599.34L673.98 639.72L627.36 639.72ZM604.05 680.09L627.36 639.72L673.98 639.72L697.28 680.09L673.98 720.46L627.36 720.46ZM604.05 760.83L627.36 720.46L673.98 720.46L697.28 760.83L673.98 801.20L627.36 801.20ZM604.05 841.57L627.36 801.20L673.98 801.20L697.28 841.57L673.98 881.94L627.36 881.94ZM604.05 922.32L627.36 881.94L673.98 881.94L697.28 922.32L673.98 962.69L627.36 962.69ZM673.98 316.74L697.28 276.37L743.90 276.37L767.21 316.74L743.90 357.11L697.28 357.11ZM673.98 397.49L697.28 357.11L743.90 357.11L767.21 397.49L743.90 437.86L697.28 437.86ZM673.98 478.23L697.28 437.86L743.90 437.86L767.21 478.23L743.90 518.60L697.28 518.60ZM673.98 558.97L697.28 518.60L743.90 518.60L767.21 558.97L743.90 599.34L697.28 599.34ZM673.98 639.72L697.28 599.34L743.90 599.34L767.21 639.72L743.90 680.09L697.28 680.09ZM673.98 720.46L697.28 680.09L743.90 680.09L767.21 720.46L743.90 760.83L697.28 760.83ZM673.98 801.20L697.28 760.83L743.90 760.83L767.21 801.20L743.90 841.57L697.28 841.57ZM673.98 881.94L697.28 841.57L743.90 841.57L767.21 881.94L743.90 922.32L697.28 922.32ZM673.98 962.69L697.28 922.32L743.90 922.32L767.21 962.69L743.90 1003.06L697.28 1003.06ZM743.90 276.37L767.21 236.00L813.83 236.00L837.14 276.37L813.83 316.74L767.21 316.74ZM743.90 357.11L767.21 316.74L813.83 316.74L837.14 357.11L813.83 397.49L767.21 397.49ZM743.90 437.86L767.21 397.49L813.83 397.49L837.14 437.86L813.83 478.23L767.21 478.23ZM743.90 518.60L767.21 478.23L813.83 478.23L837.14 518.60L813.83 558.97L767.21 558.97ZM743.90 599.34L767.21 558.97L813.83 558.97L837.14 599.34L813.83 639.72L767.21 639.72ZM743.90 680.09L767.21 639.72L813.83 639.72L837.14 680.09L813.83 720.46L767.21 720.46ZM743.90 760.83L767.21 720.46L813.83 720.46L837.14 760.83L813.83 801.20L767.21 801.20ZM743.90 841.57L767.21 801.20L813.83 801.20L837.14 841.57L813.83 881.94L767.21 881.94ZM743.90 922.32L767.21 881.94L813.83 881.94L837.14 922.32L813.83 962.69L767.21 962.69ZM813.83 316.74L837.14 276.37L883.75 276.37L907.06 316.74L883.75 357.11L837.14 357.11ZM813.83 397.49L837.14 357.11L883.75 357.11L907.06 397.49L883.75 437.86L837.14 437.86ZM813.83 478.23L837.14 437.86L883.75 437.86L907.06 478.23L883.75 518.60L837.14 518.60ZM813.83 558.97L837.14 518.60L883.75 518.60L907.06 558.97L883.75 599.34L837.14 599.34ZM813.83 639.72L837.14 599.34L883.75 599.34L907.06 639.72L883.75 680.09L837.14 680.09ZM813.83 720.46L837.14 680.09L883.75 680.09L907.06 720.46L883.75 760.83L837.14 760.83ZM813.83 801.20L837.14 760.83L883.75 760.83L907.06 801.20L883.75 841.57L837.14 841.57ZM813.83 881.94L837.14 841.57L883.75 841.57L907.06 881.94L883.75 922.32L837.14 922.32ZM813.83 962.69L837.14 922.32L883.75 922.32L907.06 962.69L883.75 1003.06L837.14 1003.06ZM883.75 276.37L907.06 236.00L953.68 236.00L976.99 276.37L953.68 316.74L907.06 316.74ZM883.75 357.11L907.06 316.74L953.68 316.74L976.99 357.11L953.68 397.49L907.06 397.49ZM883.75 437.86L907.06 397.49L953.68 397.49L976.99 437.86L953.68 478.23L907.06 478.23ZM883.75 518.60L907.06 478.23L953.68 478.23L976.99 518.60L953.68 558.97L907.06 558.97ZM883.75 599.34L907.06 558.97L953.68 558.97L976.99 599.34L953.68 639.72L907.06 639.72ZM883.75 680.09L907.06 639.72L953.68 639.72L976.99 680.09L953.68 720.46L907.06 720.46ZM883.75 760.83L907.06 720.46L953.68 720.46L976.99 760.83L953.68 801.20L907.06 801.20ZM883.75 841.57L907.06 801.20L953.68 801.20L976.99 841.57L953.68 881.94L907.06 881.94ZM883.75 922.32L907.06 881.94L953.68 881.94L976.99 922.32L953.68 962.69L907.06 962.69ZM953.68 316.74L976.99 276.37L1023.60 276.37L1046.91 316.74L1023.60 357.11L976.99 357.11ZM953.68 397.49L976.99 357.11L1023.60 357.11L1046.91 397.49L1023.60 437.86L976.99 437.86ZM953.68 478.23L976.99 437.86L1023.60 437.86L1046.91 478.23L1023.60 518.60L976.99 518.60ZM953.68 558.97L976.99 518.60L1023.60 518.60L1046.91 558.97L1023.60 599.34L976.99 599.34ZM953.68 639.72L976.99 599.34L1023.60 599.34L1046.91 639.72L1023.60 680.09L976.99 680.09ZM953.68 720.46L976.99 680.09L1023.60 680.09L1046.91 720.46L1023.60 760.83L976.99 760.83ZM953.68 801.20L976.99 760.83L1023.60 760.83L1046.91 801.20L1023.60 841.57L976.99 841.57ZM953.68 881.94L976.99 841.57L1023.60 841.57L1046.91 881.94L1023.60 922.32L976.99 922.32ZM953.68 962.69L976.99 922.32L1023.60 922.32L1046.91 962.69L1023.60 1003.06L976.99 1003.06ZM1023.60 276.37L1046.91 236.00L1093.53 236.00L1116.84 276.37L1093.53 316.74L1046.91 316.74ZM1023.60 357.11L1046.91 316.74L1093.53 316.74L1116.84 357.11L1093.53 397.49L1046.91 397.49ZM1023.60 437.86L1046.91 397.49L1093.53 397.49L1116.84 437.86L1093.53 478.23L1046.91 478.23ZM1023.60 518.60L1046.91 478.23L1093.53 478.23L1116.84 518.60L1093.53 558.97L1046.91 558.97ZM1023.60 599.34L1046.91 558.97L1093.53 558.97L1116.84 599.34L1093.53 639.72L1046.91 639.72ZM1023.60 680.09L1046.91 639.72L1093.53 639.72L1116.84 680.09L1093.53 720.46L1046.91 720.46ZM1023.60 760.83L1046.91 720.46L1093.53 720.46L1116.84 760.83L1093.53 801.20L1046.91 801.20ZM1023.60 841.57L1046.91 801.20L1093.53 801.20L1116.84 841.57L1093.53 881.94L1046.91 881.94ZM1023.60 922.32L1046.91 881.94L1093.53 881.94L1116.84 922.32L1093.53 962.69L1046.91 962.69ZM1093.53 316.74L1116.84 276.37L1163.46 276.37L1186.76 316.74L1163.46 357.11L1116.84 357.11ZM1093.53 397.49L1116.84 357.11L1163.46 357.11L1186.76 397.49L1163.46 437.86L1116.84 437.86ZM1093.53 478.23L1116.84 437.86L1163.46 437.86L1186.76 478.23L1163.46 518.60L1116.84 518.60ZM1093.53 558.97L1116.84 518.60L1163.46 518.60L1186.76 558.97L1163.46 599.34L1116.84 599.34ZM1093.53 639.72L1116.84 599.34L1163.46 599.34L1186.76 639.72L1163.46 680.09L1116.84 680.09ZM1093.53 720.46L1116.84 680.09L1163.46 680.09L1186.76 720.46L1163.46 760.83L1116.84 760.83ZM1093.53 801.20L1116.84 760.83L1163.46 760.83L1186.76 801.20L1163.46 841.57L1116.84 841.57ZM1093.53 881.94L1116.84 841.57L1163.46 841.57L1186.76 881.94L1163.46 922.32L1116.84 922.32ZM1093.53 962.69L1116.84 922.32L1163.46 922.32L1186.76 962.69L1163.46 1003.06L1116.84 1003.06ZM1163.46 276.37L1186.76 236.00L1233.38 236.00L1256.69 276.37L1233.38 316.74L1186.76 316.74ZM1163.46 357.11L1186.76 316.74L1233.38 316.74L1256.69 357.11L1233.38 397.49L1186.76 397.49ZM1163.46 437.86L1186.76 397.49L1233.38 397.49L1256.69 437.86L1233.38 478.23L1186.76 478.23ZM1163.46 518.60L1186.76 478.23L1233.38 478.23L1256.69 518.60L1233.38 558.97L1186.76 558.97ZM1163.46 599.34L1186.76 558.97L1233.38 558.97L1256.69 599.34L1233.38 639.72L1186.76 639.72ZM1163.46 680.09L1186.76 639.72L1233.38 639.72L1256.69 680.09L1233.38 720.46L1186.76 720.46ZM1163.46 760.83L1186.76 720.46L1233.38 720.46L1256.69 760.83L1233.38 801.20L1186.76 801.20ZM1163.46 841.57L1186.76 801.20L1233.38 801.20L1256.69 841.57L1233.38 881.94L1186.76 881.94ZM1163.46 922.32L1186.76 881.94L1233.38 881.94L1256.69 922.32L1233.38 962.69L1186.76 962.69ZM1233.38 316.74L1256.69 276.37L1303.31 276.37L1326.61 316.74L1303.31 357.11L1256.69 357.11ZM1233.38 397.49L1256.69 357.11L1303.31 357.11L1326.61 397.49L1303.31 437.86L1256.69 437.86ZM1233.38 478.23L1256.69 437.86L1303.31 437.86L1326.61 478.23L1303.31 518.60L1256.69 518.60ZM1233.38 558.97L1256.69 518.60L1303.31 518.60L1326.61 558.97L1303.31 599.34L1256.69 599.34ZM1233.38 639.72L1256.69 599.34L1303.31 599.34L1326.61 639.72L1303.31 680.09L1256.69 680.09ZM1233.38 720.46L1256.69 680.09L1303.31 680.09L1326.61 720.46L1303.31 760.83L1256.69 760.83ZM1233.38 801.20L1256.69 760.83L1303.31 760.83L1326.61 801.20L1303.31 841.57L1256.69 841.57ZM1233.38 881.94L1256.69 841.57L1303.31 841.57L1326.61 881.94L1303.31 922.32L1256.69 922.32ZM1233.38 962.69L1256.69 922.32L1303.31 922.32L1326.61 962.69L1303.31 1003.06L1256.69 1003.06ZM1303.31 276.37L1326.61 236.00L1373.23 236.00L1396.54 276.37L1373.23 316.74L1326.61 316.74ZM1303.31 357.11L1326.61 316.74L1373.23 316.74L1396.54 357.11L1373.23 397.49L1326.61 397.49ZM1303.31 437.86L1326.61 397.49L1373.23 397.49L1396.54 437.86L1373.23 478.23L1326.61 478.23ZM1303.31 518.60L1326.61 478.23L1373.23 478.23L1396.54 518.60L1373.23 558.97L1326.61 558.97ZM1303.31 599.34L1326.61 558.97L1373.23 558.97L1396.54 599.34L1373.23 639.72L1326.61 639.72ZM1303.31 680.09L1326.61 639.72L1373.23 639.72L1396.54 680.09L1373.23 720.46L1326.61 720.46ZM1303.31 760.83L1326.61 720.46L1373.23 720.46L1396.54 760.83L1373.23 801.20L1326.61 801.20ZM1303.31 841.57L1326.61 801.20L1373.23 801.20L1396.54 841.57L1373.23 881.94L1326.61 881.94ZM1303.31 922.32L1326.61 881.94L1373.23 881.94L1396.54 922.32L1373.23 962.69L1326.61 962.69Z" fill="none" stroke="#232323" stroke-width="0.9" stroke-linejoin="miter"/></svg>
<span class="t" style="left:1473px;top:217.50px;font-size:13px;">Layer Styling</span>
<div class="ic" style="left:1892.5px;top:219.5px;width:12px;height:12px"><svg width="12" height="12" viewBox="0 0 24 24"><rect x="1.5" y="1.5" width="21" height="21" rx="5" fill="none" stroke="#6e6b67" stroke-width="2"/><rect x="10" y="6" width="8.5" height="8.5" rx="2" fill="none" stroke="#6e6b67" stroke-width="2"/><rect x="5.5" y="10.5" width="8.5" height="8.5" rx="2" fill="#f4f4f4" stroke="#6e6b67" stroke-width="2"/></svg></div>
<div class="ic" style="left:1906.5px;top:219.5px;width:12px;height:12px"><svg width="12" height="12" viewBox="0 0 24 24"><rect x="1.5" y="1.5" width="21" height="21" rx="5" fill="none" stroke="#6e6b67" stroke-width="2"/><path d="M6.5 6.5L17.5 17.5M17.5 6.5L6.5 17.5" stroke="#4e4b47" stroke-width="3.4"/></svg></div>
<div class="combo" style="left:1472px;top:238px;width:446px;height:25px;"></div>
<div class="ic" style="left:1478.0px;top:242.0px;width:16px;height:16px"><svg width="16" height="16" viewBox="0 0 24 24"><defs><linearGradient id="pgg" x1="0" y1="0" x2="0" y2="1"><stop offset="0" stop-color="#f4f4f4"/><stop offset="1" stop-color="#c4c4c4"/></linearGradient></defs><path d="M3 7Q3.5 3.5 8 4.5Q12 6.5 16 4.5Q21.5 3 21.5 8Q21.5 13 21 15.5Q20 17.5 16 15Q12.5 13.5 9 17Q5 20.5 3.5 17Q2 12 3 7Z" fill="url(#pgg)" stroke="#8a8a8a" stroke-width="1.1"/></svg></div>
<span class="t" style="left:1497px;top:242.50px;font-size:13px;">PHL_municities_Albay</span>
<svg class="ic" style="left:1903.0px;top:249.0px" width="7" height="4"><path d="M0 0H7L3.5 4Z" fill="#4a4a4a"/></svg>
<div class="ic" style="left:1478.0px;top:273.0px;width:24px;height:24px"><svg width="24" height="24" viewBox="0 0 24 24"><path d="M2 13L8 5L16 9L10 18Z" fill="#d3dd86"/><path d="M2 13L5 9L12 13L9 17.5Z" fill="#86b4e0"/><path d="M2 13L10 18L9.5 20.5L2 16Z" fill="#d85a66"/><path d="M21.5 3L14 11.5" stroke="#a8905a" stroke-width="2.2" stroke-linecap="round"/><path d="M11.5 9.5L16 13.5L12.5 19.5L7 15Z" fill="#b8aa86" stroke="#8f8260" stroke-width="0.7"/></svg></div>
<div class="combo" style="left:1513px;top:269px;width:405px;height:25px;"></div>
<div class="ic" style="left:1518.5px;top:273.5px;width:16px;height:16px"><svg width="16" height="16" viewBox="0 0 24 24"><rect x="3" y="2" width="15" height="5" rx="1" fill="#00a651" stroke="#0b5a2a" stroke-width="1.2"/><rect x="6.5" y="9.5" width="15" height="5" rx="1" fill="#00a651" stroke="#0b5a2a" stroke-width="1.2"/><rect x="3" y="17" width="15" height="5" rx="1" fill="#00a651" stroke="#0b5a2a" stroke-width="1.2"/></svg></div>
<span class="t" style="left:1538px;top:273.50px;font-size:13px;">Single symbol</span>
<svg class="ic" style="left:1903.0px;top:280.0px" width="7" height="4"><path d="M0 0H7L3.5 4Z" fill="#4a4a4a"/></svg>
<div style="left:1472px;top:301px;width:38px;height:689px;background:#5f5f5f"></div>
<div class="ic" style="left:1475.0px;top:305.0px;width:24px;height:24px"><svg width="24" height="24" viewBox="0 0 24 24"><path d="M5.7 6H22.0V17.5H5.7L1.5 11.75Z" fill="#f2d93a" stroke="#d9b80e" stroke-width="1.1" stroke-linejoin="round"/><text x="13.75" y="14.6" text-anchor="middle" font-family="DejaVu Sans,Liberation Sans,sans-serif" font-weight="bold" font-size="7.6" fill="#2a2a2a">abc</text></svg></div>
<div class="ic" style="left:1475.0px;top:336.0px;width:24px;height:24px"><svg width="24" height="24" viewBox="0 0 24 24"><text x="11.5" y="15.3" text-anchor="middle" font-family="DejaVu Sans,Liberation Sans,sans-serif" font-weight="bold" font-size="9.6" fill="#eef0fb" stroke="#eef0fb" stroke-width="5" stroke-linejoin="round">abc</text><text x="11.5" y="15.3" text-anchor="middle" font-family="DejaVu Sans,Liberation Sans,sans-serif" font-weight="bold" font-size="9.6" fill="#3a3a3a">abc</text></svg></div>
<div class="ic" style="left:1475.0px;top:369.0px;width:24px;height:24px"><svg width="24" height="24" viewBox="0 0 24 24"><path d="M12 2.5L21.5 7.5L12 12.5L2.5 7.5Z" fill="#f08a8a" stroke="#c8141c" stroke-width="1"/><path d="M2.5 7.5L12 12.5V23L2.5 18Z" fill="#8ed04a" stroke="#4a8a12" stroke-width="1"/><path d="M21.5 7.5L12 12.5V23L21.5 18Z" fill="#f6e23a" stroke="#b89a08" stroke-width="1"/></svg></div>
<div class="ic" style="left:1475.0px;top:401.0px;width:24px;height:24px"><svg width="24" height="24" viewBox="0 0 24 24"><path d="M12 7V12M5.5 19V12H18.5V19" fill="none" stroke="#e8a23a" stroke-width="2"/><rect x="8" y="1.5" width="8" height="7" fill="#f07a7a" stroke="#c83a3a" stroke-width="0.7"/><rect x="1.5" y="16.5" width="8" height="6.5" fill="#f6dc4a" stroke="#c9a80e" stroke-width="0.7"/><rect x="14.5" y="16.5" width="8" height="6.5" fill="#8ab8ee" stroke="#4a7ab8" stroke-width="0.7"/></svg></div>
<div class="ic" style="left:1475.0px;top:433.0px;width:24px;height:24px"><svg width="24" height="24" viewBox="0 0 24 24"><path d="M6 9.5Q6 4.5 11.5 4.5V1.5L17 6.5L11.5 11.5V8.5Q9 8.5 9 11.5Z" fill="#5aa86a" stroke="#3a8a4a" stroke-width="0.6"/><path d="M19 15Q19 20 13.5 20V23L8 18L13.5 13V16Q16 16 16 13Z" fill="#f08a3a" stroke="#d0681a" stroke-width="0.6" transform="translate(1 0)"/></svg></div>
<div style="left:1533px;top:335px;width:61px;height:61px;background:#a6cee3"></div>
<div style="left:1619px;top:305px;width:231px;height:119px;background:#fff;border:1px solid #b4b4b4"></div>
<svg class="ic" style="left:1626.5px;top:313.0px" width="7" height="4"><path d="M0 0H7L3.5 4Z" fill="#4a4a4a"/></svg>
<div style="left:1643px;top:307px;width:16px;height:16px;background:#a6cee3"></div>
<span class="t" style="left:1665px;top:307.50px;font-size:13px;font-weight:bold">Fill</span>
<div style="left:1620px;top:325px;width:229px;height:19px;background:#308cc6"></div>
<div style="left:1663px;top:327px;width:16px;height:16px;background:#86badc"></div>
<span class="t" style="left:1685px;top:326.50px;font-size:13px;color:#fff">Simple fill</span>
<div class="btn" style="left:1856px;top:300px;width:28px;height:24px;"></div>
<div class="ic" style="left:1862.0px;top:304.0px;width:16px;height:16px"><svg width="16" height="16" viewBox="0 0 24 24"><path d="M9 2.5H15V9H21.5V15H15V21.5H9V15H2.5V9H9Z" fill="#f4faf2" stroke="#3a8a3a" stroke-width="1.6" stroke-linejoin="round"/><path d="M11 4.8H13V11H19.2V13H13V19.2H11V13H4.8V11H11Z" fill="#3f8f3f" stroke="#3f8f3f" stroke-width="1"/></svg></div>
<div class="btn" style="left:1890px;top:300px;width:28px;height:24px;"></div>
<div class="ic" style="left:1896.0px;top:304.0px;width:16px;height:16px"><svg width="16" height="16" viewBox="0 0 24 24"><path d="M12 3.5L21.5 19H2.5Z" fill="#dedede" stroke="#d2d2d2" stroke-width="1"/></svg></div>
<div class="btn" style="left:1856px;top:328px;width:28px;height:24px;"></div>
<div class="ic" style="left:1862.0px;top:332.0px;width:16px;height:16px"><svg width="16" height="16" viewBox="0 0 24 24"><rect x="2.5" y="9.5" width="19" height="5.5" rx="1" fill="#f6ecec" stroke="#e8d0d0" stroke-width="1.5"/></svg></div>
<div class="btn" style="left:1890px;top:328px;width:28px;height:24px;"></div>
<div class="ic" style="left:1896.0px;top:332.0px;width:16px;height:16px"><svg width="16" height="16" viewBox="0 0 24 24"><path d="M12 20.5L21.5 5H2.5Z" fill="#dedede" stroke="#d2d2d2" stroke-width="1"/></svg></div>
<div class="btn" style="left:1856px;top:356px;width:28px;height:24px;"></div>
<div class="ic" style="left:1862.0px;top:360.0px;width:16px;height:16px"><svg width="16" height="16" viewBox="0 0 24 24"><rect x="2.5" y="5.5" width="14.5" height="16" rx="1" fill="#d9d9d9" stroke="#5a5a5a" stroke-width="1.4"/><rect x="6" y="2" width="15" height="17" rx="1" fill="#fafafa" stroke="#5a5a5a" stroke-width="1.4"/><rect x="14.5" y="15" width="7.5" height="7.5" fill="#f6d84a" stroke="#c9a80e" stroke-width="0.9"/></svg></div>
<div class="btn" style="left:1890px;top:356px;width:28px;height:24px;"></div>
<div class="ic" style="left:1896.0px;top:360.0px;width:16px;height:16px"><svg width="16" height="16" viewBox="0 0 24 24"><path d="M8 6.5Q9.5 2.5 14 2.8Q19 3.5 18.8 9V12" fill="none" stroke="#a4a4a4" stroke-width="2.6"/><rect x="3.5" y="12" width="17.5" height="10" rx="1.8" fill="#f2dc1e" stroke="#d4b80e" stroke-width="1.1"/></svg></div>
<div style="left:1513px;top:436px;width:405px;height:1px;background:#bcbcbc"></div>
<div style="left:1513px;top:437px;width:405px;height:1px;background:#f9f9f9"></div>
<span class="t" style="left:1514px;top:450.50px;font-size:13px;">Symbol layer type</span>
<div class="combo" style="left:1633px;top:446px;width:275px;height:25px;"></div>
<span class="t" style="left:1638px;top:450.50px;font-size:13px;">Simple fill</span>
<svg class="ic" style="left:1893.0px;top:457.0px" width="7" height="4"><path d="M0 0H7L3.5 4Z" fill="#4a4a4a"/></svg>
<span class="t" style="left:1523px;top:489.50px;font-size:13px;">Fill color</span>
<div class="btn" style="left:1612px;top:483px;width:239px;height:28px;"></div>
<div style="left:1617px;top:489px;width:229px;height:16px;background:#a6cee3;border-radius:2px"></div>
<div class="btn" style="left:1851px;top:483px;width:12px;height:28px;"></div>
<svg class="ic" style="left:1853.5px;top:495.0px" width="7" height="4"><path d="M0 0H7L3.5 4Z" fill="#4a4a4a"/></svg>
<div class="ic" style="left:1872.0px;top:485.0px;width:24px;height:24px"><svg width="24" height="24" viewBox="0 0 24 24"><path d="M1.2 11.8L6.5 5.5V18Z" fill="#a6a6a6"/><rect x="6.5" y="4.3" width="12.8" height="15.2" rx="1" fill="#fdfdfd" stroke="#707070" stroke-width="1.2"/><path d="M9 8.3H16.8" stroke="#4a4a4a" stroke-width="1.7"/><path d="M9 12.3H16.8M9 15.8H14" stroke="#6a6a6a" stroke-width="1.1"/><path d="M15.8 16.6H23.4L19.6 21Z" fill="#4a4a4a"/></svg></div>
<span class="t" style="left:1523px;top:522.50px;font-size:13px;">Fill style</span>
<div class="combo" style="left:1612px;top:517px;width:251px;height:25px;"></div>
<div style="left:1618px;top:521px;width:32px;height:16px;background:#636363"></div>
<span class="t" style="left:1653px;top:521.50px;font-size:13px;">Solid</span>
<svg class="ic" style="left:1848.0px;top:528.0px" width="7" height="4"><path d="M0 0H7L3.5 4Z" fill="#4a4a4a"/></svg>
<div class="ic" style="left:1872.0px;top:518.0px;width:24px;height:24px"><svg width="24" height="24" viewBox="0 0 24 24"><path d="M1.2 11.8L6.5 5.5V18Z" fill="#a6a6a6"/><rect x="6.5" y="4.3" width="12.8" height="15.2" rx="1" fill="#fdfdfd" stroke="#707070" stroke-width="1.2"/><path d="M9 8.3H16.8" stroke="#4a4a4a" stroke-width="1.7"/><path d="M9 12.3H16.8M9 15.8H14" stroke="#6a6a6a" stroke-width="1.1"/><path d="M15.8 16.6H23.4L19.6 21Z" fill="#4a4a4a"/></svg></div>
<span class="t" style="left:1523px;top:555.50px;font-size:13px;">Stroke color</span>
<div class="btn" style="left:1612px;top:549px;width:239px;height:28px;"></div>
<div style="left:1617px;top:555px;width:229px;height:16px;background:#a6cee3;border-radius:2px"></div>
<div class="btn" style="left:1851px;top:549px;width:12px;height:28px;"></div>
<svg class="ic" style="left:1853.5px;top:561.0px" width="7" height="4"><path d="M0 0H7L3.5 4Z" fill="#4a4a4a"/></svg>
<div class="ic" style="left:1872.0px;top:551.0px;width:24px;height:24px"><svg width="24" height="24" viewBox="0 0 24 24"><path d="M1.2 11.8L6.5 5.5V18Z" fill="#a6a6a6"/><rect x="6.5" y="4.3" width="12.8" height="15.2" rx="1" fill="#fdfdfd" stroke="#707070" stroke-width="1.2"/><path d="M9 8.3H16.8" stroke="#4a4a4a" stroke-width="1.7"/><path d="M9 12.3H16.8M9 15.8H14" stroke="#6a6a6a" stroke-width="1.1"/><path d="M15.8 16.6H23.4L19.6 21Z" fill="#4a4a4a"/></svg></div>
<span class="t" style="left:1523px;top:588.50px;font-size:13px;">Stroke width</span>
<div class="spin" style="left:1612px;top:584px;width:116px;height:24px;"></div>
<div style="left:1713px;top:584px;width:15px;height:24px;border-left:1px solid #c8c8c8;border-radius:0 3px 3px 0;background:linear-gradient(#fcfcfc,#ececec);border-top:1px solid #b6b6b6;border-right:1px solid #b6b6b6;border-bottom:1px solid #b6b6b6"></div>
<svg class="ic" style="left:1717.0px;top:589.0px" width="7" height="14"><path d="M0 5L3.5 1L7 5Z M0 9L3.5 13L7 9Z" fill="#4a4a4a"/></svg>
<span class="t" style="left:1617px;top:588.50px;font-size:13px;color:#000">0.260000</span>
<div class="ic" style="left:1688.5px;top:588.0px;width:16px;height:16px"><svg width="16" height="16" viewBox="0 0 24 24"><path d="M2 12L8.5 4.5H21V19.5H8.5Z" fill="#b4b4b4"/><path d="M10.8 8.2L18.2 15.8M18.2 8.2L10.8 15.8" stroke="#fff" stroke-width="1.6"/></svg></div>
<div class="combo" style="left:1734px;top:583px;width:129px;height:25px;"></div>
<span class="t" style="left:1739px;top:587.50px;font-size:13px;">Millimeters</span>
<svg class="ic" style="left:1848.0px;top:594.0px" width="7" height="4"><path d="M0 0H7L3.5 4Z" fill="#4a4a4a"/></svg>
<div class="ic" style="left:1872.0px;top:584.0px;width:24px;height:24px"><svg width="24" height="24" viewBox="0 0 24 24"><path d="M1.2 11.8L6.5 5.5V18Z" fill="#a6a6a6"/><rect x="6.5" y="4.3" width="12.8" height="15.2" rx="1" fill="#fdfdfd" stroke="#707070" stroke-width="1.2"/><path d="M9 8.3H16.8" stroke="#4a4a4a" stroke-width="1.7"/><path d="M9 12.3H16.8M9 15.8H14" stroke="#6a6a6a" stroke-width="1.1"/><path d="M15.8 16.6H23.4L19.6 21Z" fill="#4a4a4a"/></svg></div>
<span class="t" style="left:1523px;top:620.50px;font-size:13px;">Stroke style</span>
<div class="combo" style="left:1612px;top:615px;width:251px;height:25px;"></div>
<div style="left:1618px;top:626.5px;width:32px;height:2px;background:#111"></div>
<span class="t" style="left:1653px;top:619.50px;font-size:13px;">Solid Line</span>
<svg class="ic" style="left:1848.0px;top:626.0px" width="7" height="4"><path d="M0 0H7L3.5 4Z" fill="#4a4a4a"/></svg>
<div class="ic" style="left:1872.0px;top:616.0px;width:24px;height:24px"><svg width="24" height="24" viewBox="0 0 24 24"><path d="M1.2 11.8L6.5 5.5V18Z" fill="#a6a6a6"/><rect x="6.5" y="4.3" width="12.8" height="15.2" rx="1" fill="#fdfdfd" stroke="#707070" stroke-width="1.2"/><path d="M9 8.3H16.8" stroke="#4a4a4a" stroke-width="1.7"/><path d="M9 12.3H16.8M9 15.8H14" stroke="#6a6a6a" stroke-width="1.1"/><path d="M15.8 16.6H23.4L19.6 21Z" fill="#4a4a4a"/></svg></div>
<span class="t" style="left:1523px;top:652.50px;font-size:13px;">Join style</span>
<div class="combo" style="left:1612px;top:647px;width:251px;height:25px;"></div>
<div class="ic" style="left:1617.0px;top:651.5px;width:16px;height:16px"><svg width="16" height="16" viewBox="0 0 24 24"><path d="M2 2.5H14.5L22 10V22H12.5V12H2Z" fill="#5b8cc7" stroke="#2d4a7a" stroke-width="1"/><path d="M2 7.5H15.5V22" fill="none" stroke="#f6dc3a" stroke-width="1.8" stroke-dasharray="2 2.4"/></svg></div>
<span class="t" style="left:1637px;top:651.50px;font-size:13px;">Bevel</span>
<svg class="ic" style="left:1848.0px;top:658.0px" width="7" height="4"><path d="M0 0H7L3.5 4Z" fill="#4a4a4a"/></svg>
<div class="ic" style="left:1872.0px;top:648.0px;width:24px;height:24px"><svg width="24" height="24" viewBox="0 0 24 24"><path d="M1.2 11.8L6.5 5.5V18Z" fill="#a6a6a6"/><rect x="6.5" y="4.3" width="12.8" height="15.2" rx="1" fill="#fdfdfd" stroke="#707070" stroke-width="1.2"/><path d="M9 8.3H16.8" stroke="#4a4a4a" stroke-width="1.7"/><path d="M9 12.3H16.8M9 15.8H14" stroke="#6a6a6a" stroke-width="1.1"/><path d="M15.8 16.6H23.4L19.6 21Z" fill="#4a4a4a"/></svg></div>
<span class="t" style="left:1523px;top:700.50px;font-size:13px;">Offset</span>
<span class="t" style="left:1612px;top:684.50px;font-size:13px;">x</span>
<div class="spin" style="left:1626px;top:680px;width:102px;height:24px;"></div>
<div style="left:1713px;top:680px;width:15px;height:24px;border-left:1px solid #c8c8c8;border-radius:0 3px 3px 0;background:linear-gradient(#fcfcfc,#ececec);border-top:1px solid #b6b6b6;border-right:1px solid #b6b6b6;border-bottom:1px solid #b6b6b6"></div>
<svg class="ic" style="left:1717.0px;top:685.0px" width="7" height="14"><path d="M0 5L3.5 1L7 5Z M0 9L3.5 13L7 9Z" fill="#4a4a4a"/></svg>
<span class="t" style="left:1631px;top:684.50px;font-size:13px;color:#000">0.000000</span>
<span class="t" style="left:1612px;top:716.50px;font-size:13px;">y</span>
<div class="spin" style="left:1626px;top:712px;width:102px;height:24px;"></div>
<div style="left:1713px;top:712px;width:15px;height:24px;border-left:1px solid #c8c8c8;border-radius:0 3px 3px 0;background:linear-gradient(#fcfcfc,#ececec);border-top:1px solid #b6b6b6;border-right:1px solid #b6b6b6;border-bottom:1px solid #b6b6b6"></div>
<svg class="ic" style="left:1717.0px;top:717.0px" width="7" height="14"><path d="M0 5L3.5 1L7 5Z M0 9L3.5 13L7 9Z" fill="#4a4a4a"/></svg>
<span class="t" style="left:1631px;top:716.50px;font-size:13px;color:#000">0.000000</span>
<div class="combo" style="left:1734px;top:695px;width:129px;height:25px;"></div>
<span class="t" style="left:1739px;top:699.50px;font-size:13px;">Millimeters</span>
<svg class="ic" style="left:1848.0px;top:706.0px" width="7" height="4"><path d="M0 0H7L3.5 4Z" fill="#4a4a4a"/></svg>
<div class="cb" style="left:1515px;top:900px;width:13px;height:13px;"></div>
<svg class="ic" style="left:1515px;top:900px" width="13" height="13"><path d="M3 6.6L5.6 10L10.3 2.6" fill="none" stroke="#000" stroke-width="1.7"/></svg>
<span class="t" style="left:1533.5px;top:898.50px;font-size:13px;">Enable symbol layer</span>
<div class="ic" style="left:1680.0px;top:895.0px;width:24px;height:24px"><svg width="24" height="24" viewBox="0 0 24 24"><path d="M1.2 11.8L6.5 5.5V18Z" fill="#a6a6a6"/><rect x="6.5" y="4.3" width="12.8" height="15.2" rx="1" fill="#fdfdfd" stroke="#707070" stroke-width="1.2"/><path d="M9 8.3H16.8" stroke="#4a4a4a" stroke-width="1.7"/><path d="M9 12.3H16.8M9 15.8H14" stroke="#6a6a6a" stroke-width="1.1"/><path d="M15.8 16.6H23.4L19.6 21Z" fill="#4a4a4a"/></svg></div>
<div class="cb" style="left:1744.5px;top:900px;width:13px;height:13px;"></div>
<span class="t" style="left:1763px;top:898.50px;font-size:13px;">Draw effects</span>
<div class="btn" style="left:1858px;top:895px;width:24px;height:23px;"></div>
<div class="ic" style="left:1862.0px;top:898.5px;width:16px;height:16px"><svg width="16" height="16" viewBox="0 0 24 24"><path d="M11.0 2.0L13.4 8.3L20.0 8.6L14.8 12.7L16.6 19.2L11.0 15.5L5.4 19.2L7.2 12.7L2.0 8.6L8.6 8.3Z" fill="#e0ddd2" stroke="#d4d1c4" stroke-width="0.8"/><path d="M17 19H23L20 22.5Z" fill="#d0d0d0"/></svg></div>
<svg class="ic" style="left:1517px;top:945px" width="9" height="12"><path d="M0.5 0.5L8 6L0.5 11.5Z" fill="#303030"/></svg>
<span class="t" style="left:1535.5px;top:943.50px;font-size:13px;font-weight:bold">Layer Rendering</span>
<div class="btn" style="left:1513px;top:967px;width:24px;height:23px;"></div>
<div class="ic" style="left:1517.0px;top:970.5px;width:16px;height:16px"><svg width="16" height="16" viewBox="0 0 24 24"><path d="M2.5 9L10.5 2V6Q21 6.5 21 14.5Q21 21 13.5 22Q11 22 10.5 20.5Q15.5 19.5 15.5 15.5Q15.5 12 10.5 12V16.5Z" fill="#f08a3a" stroke="#c96a1a" stroke-width="0.8"/></svg></div>
<div class="btn" style="left:1543px;top:967px;width:24px;height:23px;"></div>
<div class="ic" style="left:1547.0px;top:970.5px;width:16px;height:16px"><svg width="16" height="16" viewBox="0 0 24 24"><path d="M21.5 9L13.5 2V6Q3 6.5 3 14.5Q3 21 10.5 22Q13 22 13.5 20.5Q8.5 19.5 8.5 15.5Q8.5 12 13.5 12V16.5Z" fill="#6ab86a" stroke="#3f8f3f" stroke-width="0.8"/></svg></div>
<div class="cb" style="left:1730px;top:972px;width:13px;height:13px;"></div>
<svg class="ic" style="left:1730px;top:972px" width="13" height="13"><path d="M3 6.6L5.6 10L10.3 2.6" fill="none" stroke="#000" stroke-width="1.7"/></svg>
<span class="t" style="left:1749px;top:970.50px;font-size:13px;">Live update</span>
<div class="btn" style="left:1838px;top:966px;width:80px;height:25px;"></div>
<div class="ic" style="left:1847.0px;top:969.5px;width:16px;height:16px"><svg width="16" height="16" viewBox="0 0 24 24"><path d="M1.5 13.5Q5 14 8.5 21.5Q13 9 23 1Q15 5.5 8.5 15.5Q6 12 4 11Z" fill="#6aa84f" stroke="#4a8a35" stroke-width="0.8" stroke-linejoin="round"/></svg></div>
<span class="t" style="left:1866px;top:971.00px;font-size:13px;">Apply</span>
<div style="left:1468px;top:995px;width:452px;height:1px;background:#c2c2c2"></div>
<div style="left:1579px;top:996px;width:85px;height:24px;background:#dcdcdc;border:1px solid #c0c0c0;border-top:none"></div>
<div style="left:1663px;top:996px;width:150px;height:24px;background:#dcdcdc;border:1px solid #c0c0c0;border-top:none;border-radius:0 0 3px 0"></div>
<div style="left:1469px;top:995px;width:111px;height:27px;background:linear-gradient(#efefef,#f8f8f8);border:1px solid #b9b9b9;border-top:none;border-radius:0 0 4px 4px"></div>
<span class="t" style="left:1481.5px;top:1001.00px;font-size:13px;">Layer Styling</span>
<span class="t" style="left:1591.5px;top:1000.00px;font-size:13px;">Statistics</span>
<span class="t" style="left:1675px;top:1000.00px;font-size:13px;">Processing Toolbox</span>
<div style="left:5px;top:1026px;width:270px;height:25px;background:#fff;border:1px solid #b0b0b0;border-radius:4px"></div>
<div class="ic" style="left:12.0px;top:1031.0px;width:14px;height:14px"><svg width="14" height="14" viewBox="0 0 24 24"><circle cx="9.5" cy="9.5" r="6.5" fill="none" stroke="#9a9a9a" stroke-width="2.2"/><path d="M14.5 14.5L21.5 21.5" stroke="#9a9a9a" stroke-width="2.8" stroke-linecap="round"/></svg></div>
<span class="t" style="left:34px;top:1030.50px;font-size:13px;">grid</span>
<div class="ic" style="left:251.5px;top:1030.0px;width:16px;height:16px"><svg width="16" height="16" viewBox="0 0 24 24"><path d="M2 12L8.5 4.5H21V19.5H8.5Z" fill="#b4b4b4"/><path d="M10.8 8.2L18.2 15.8M18.2 8.2L10.8 15.8" stroke="#fff" stroke-width="1.6"/></svg></div>
<span class="t" style="left:283px;top:1032.02px;font-size:11px;">1 legend entries removed.</span>
<span class="t" style="left:1026.5px;top:1032.02px;font-size:11px;">Coordinate</span>
<div class="spin" style="left:1090px;top:1027px;width:111px;height:22px;"></div>
<span class="t" style="left:1098px;top:1031.52px;font-size:11px;">520611,1443293</span>
<div class="ic" style="left:1204.0px;top:1029.0px;width:18px;height:18px"><svg width="18" height="18" viewBox="0 0 24 24"><path d="M4 10Q2.5 3.5 8.5 3.5Q12.5 3.5 14 7M5.5 15Q3.5 11.5 6 9.5M8 18Q6 14 9 12" fill="none" stroke="#2a2a2a" stroke-width="1.6"/><path d="M8 6.5Q12 5 14 9L17.5 14.5Q19 18 16 20.5Q12 23 9 19.5Q5.5 15 8 6.5Z" fill="#e8e8e8" stroke="#1a1a1a" stroke-width="1.4"/><path d="M10.2 8V15.5M12.6 8.5V15.5M15 11V16.5" stroke="#1a1a1a" stroke-width="1.3"/><circle cx="14" cy="18" r="1.8" fill="#f4f4f4" stroke="#1a1a1a" stroke-width="0.9"/><path d="M17 2.5L21 6.5M19.5 1.5V4M22 4.5H19.5" stroke="#3a3a3a" stroke-width="1"/></svg></div>
<span class="t" style="left:1234.5px;top:1032.02px;font-size:11px;">Scale</span>
<div class="combo" style="left:1267px;top:1026px;width:97px;height:24px;"></div>
<div style="left:1267px;top:1026px;width:78px;height:24px;background:#fff;border:1px solid #b6b6b6;border-radius:3px 0 0 3px"></div>
<span class="t" style="left:1271px;top:1031.52px;font-size:11px;">1:468333</span>
<svg class="ic" style="left:1348.5px;top:1036.5px" width="7" height="4"><path d="M0 0H7L3.5 4Z" fill="#4a4a4a"/></svg>
<div class="ic" style="left:1373.5px;top:1030.0px;width:16px;height:16px"><svg width="16" height="16" viewBox="0 0 24 24"><path d="M6.5 11V7.5Q6.5 2.5 12 2.5T17.5 7.5V11" fill="none" stroke="#8a8a8a" stroke-width="2.4"/><rect x="3.5" y="10.5" width="17" height="12" rx="1.5" fill="#7a7a7a" stroke="#5f5f5f" stroke-width="0.8"/></svg></div>
<span class="t" style="left:1397.3px;top:1032.02px;font-size:11px;">Magnifier</span>
<div class="spin" style="left:1451px;top:1027px;width:98px;height:22px;"></div>
<div style="left:1534px;top:1027px;width:15px;height:22px;border-left:1px solid #c8c8c8;border-radius:0 3px 3px 0;background:linear-gradient(#fcfcfc,#ececec);border-top:1px solid #b6b6b6;border-right:1px solid #b6b6b6;border-bottom:1px solid #b6b6b6"></div>
<svg class="ic" style="left:1538.0px;top:1031.0px" width="7" height="14"><path d="M0 5L3.5 1L7 5Z M0 9L3.5 13L7 9Z" fill="#4a4a4a"/></svg>
<span class="t" style="left:1456px;top:1031.02px;font-size:11px;color:#000">100%</span>
<span class="t" style="left:1558.5px;top:1032.02px;font-size:11px;">Rotation</span>
<div class="spin" style="left:1614px;top:1027px;width:94px;height:22px;"></div>
<div style="left:1693px;top:1027px;width:15px;height:22px;border-left:1px solid #c8c8c8;border-radius:0 3px 3px 0;background:linear-gradient(#fcfcfc,#ececec);border-top:1px solid #b6b6b6;border-right:1px solid #b6b6b6;border-bottom:1px solid #b6b6b6"></div>
<svg class="ic" style="left:1697.0px;top:1031.0px" width="7" height="14"><path d="M0 5L3.5 1L7 5Z M0 9L3.5 13L7 9Z" fill="#4a4a4a"/></svg>
<span class="t" style="left:1619px;top:1031.02px;font-size:11px;color:#000">0.0 °</span>
<div class="cb" style="left:1715px;top:1032px;width:13px;height:13px;"></div>
<svg class="ic" style="left:1715px;top:1032px" width="13" height="13"><path d="M3 6.6L5.6 10L10.3 2.6" fill="none" stroke="#000" stroke-width="1.7"/></svg>
<span class="t" style="left:1733px;top:1032.02px;font-size:11px;">Render</span>
<div class="ic" style="left:1788.0px;top:1030.5px;width:16px;height:16px"><svg width="16" height="16" viewBox="0 0 24 24"><circle cx="12" cy="12" r="9.5" fill="#f4f4f4" stroke="#8a8a8a" stroke-width="1.3"/><ellipse cx="12" cy="12" rx="4.2" ry="9.5" fill="none" stroke="#8a8a8a" stroke-width="1.1"/><path d="M2.5 12H21.5M4 7H20M4 17H20M12 2.5V21.5" stroke="#8a8a8a" stroke-width="1.1"/><path d="M1 3.5L5 5.5M1.5 20L5 18" stroke="#8a8a8a" stroke-width="1"/></svg></div>
<span class="t" style="left:1806px;top:1032.02px;font-size:11px;">EPSG:32651</span>
<div class="ic" style="left:1895.0px;top:1029.0px;width:18px;height:18px"><svg width="18" height="18" viewBox="0 0 24 24"><path d="M8 3.5Q1.5 4 1.5 10Q1.5 13.5 4.5 15L3.5 19L8 16Q14 16.5 14.5 10.5Q14.5 4 8 3.5Z" fill="#8a8a8a"/><path d="M15 6.5Q22.5 7 22.5 13Q22.5 16.5 19.5 18L20.5 22L16 19Q9.5 19.5 9 13.5Q9 7 15 6.5Z" fill="#6e6e6e" stroke="#efefef" stroke-width="0.8"/><circle cx="12.8" cy="13" r="1.1" fill="#efefef"/><circle cx="16" cy="13" r="1.1" fill="#efefef"/><circle cx="19.2" cy="13" r="1.1" fill="#efefef"/></svg></div>
</div></body></html>
